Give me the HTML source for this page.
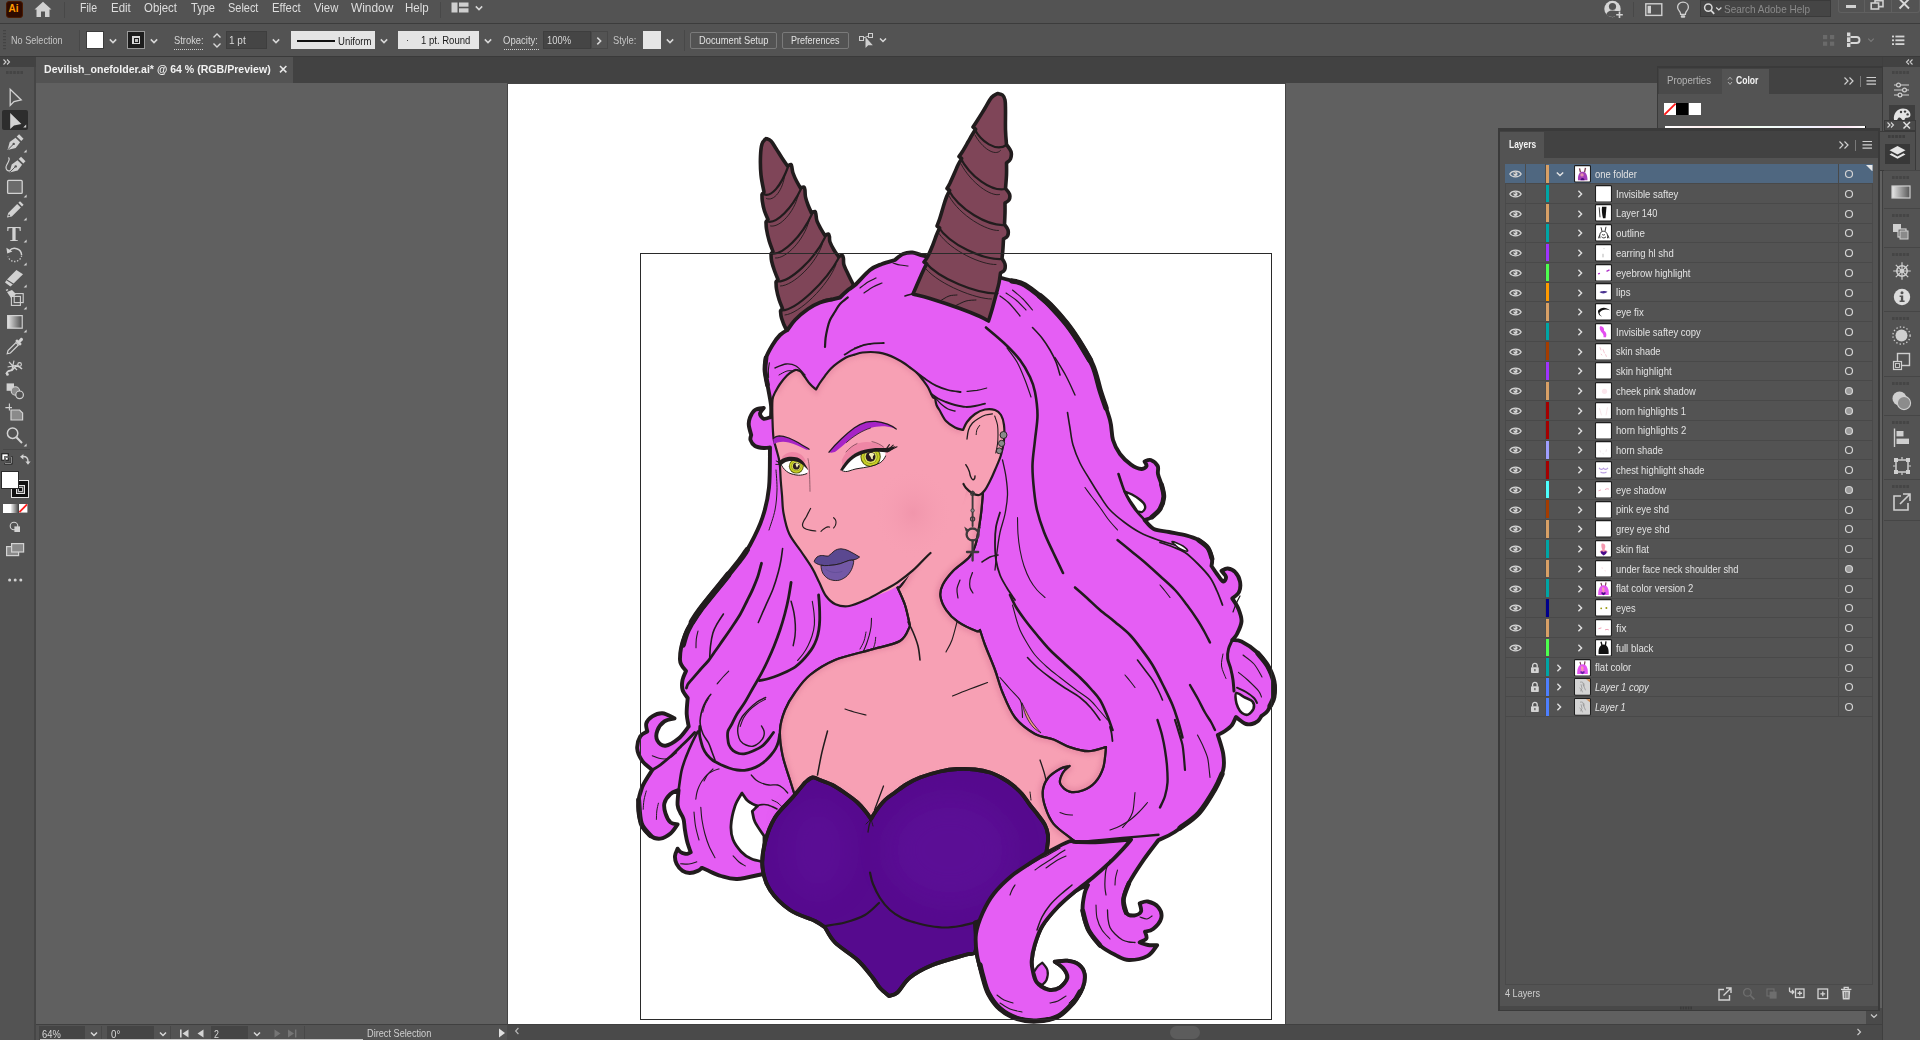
<!DOCTYPE html>
<html><head><meta charset="utf-8"><title>Devilish_onefolder.ai</title>
<style>
html,body{margin:0;padding:0;background:#606060;}
body{width:1920px;height:1040px;position:relative;overflow:hidden;font-family:"Liberation Sans",sans-serif;}
.r{position:absolute;display:block;}
.t{position:absolute;white-space:nowrap;line-height:1.2;transform-origin:0 50%;}
</style></head><body>
<div class="r" style="left:0px;top:0px;width:1920px;height:1040px;background:#606060;"></div>
<div class="r" style="left:506.5px;top:82.5px;width:779.5px;height:942px;background:rgba(0,0,0,0.28);"></div>
<div class="r" style="left:507.5px;top:83.5px;width:777.7px;height:940.4px;background:#ffffff;"></div>
<svg class="r" style="left:0;top:0" width="1920" height="1040" viewBox="0 0 1920 1040">
<defs>
<radialGradient id="gCupR" cx="0.45" cy="0.35" r="0.75"><stop offset="0" stop-color="#5f1199"/><stop offset="0.6" stop-color="#560a8e"/><stop offset="1" stop-color="#47067a"/></radialGradient>
<radialGradient id="gBlush" cx="0.5" cy="0.5" r="0.5"><stop offset="0" stop-color="#ea8ba3" stop-opacity="0.5"/><stop offset="1" stop-color="#f7a0b4" stop-opacity="0"/></radialGradient>
<filter id="soft" x="-10%" y="-10%" width="120%" height="120%"><feGaussianBlur stdDeviation="2.2"/></filter>
<filter id="soft8" x="-30%" y="-30%" width="160%" height="160%"><feGaussianBlur stdDeviation="14"/></filter>
<filter id="soft1" x="-10%" y="-10%" width="120%" height="120%"><feGaussianBlur stdDeviation="1.2"/></filter>
</defs>
<path d="M766.0 138.5C765.3 139.4 762.9 141.1 762.0 144.0C761.1 146.9 760.7 150.8 760.5 156.0C760.3 161.2 760.4 169.0 761.0 175.0C761.6 181.0 763.5 189.2 764.0 192.0C763.7 192.4 762.3 194.1 762.0 194.5C762.0 195.6 761.9 198.2 762.3 201.0C762.7 203.8 763.5 207.9 764.5 211.0C765.5 214.1 767.4 218.1 768.0 219.5C767.7 219.9 766.3 221.6 766.0 222.0C766.1 223.2 766.0 225.8 766.5 229.0C767.0 232.2 768.1 237.2 769.2 241.0C770.3 244.8 772.4 249.8 773.0 251.5C772.7 251.9 771.3 253.6 771.0 254.0C771.1 255.2 771.0 258.2 771.6 261.0C772.2 263.8 773.5 267.9 774.6 271.0C775.7 274.1 777.4 278.1 778.0 279.5C777.7 279.9 776.3 281.6 776.0 282.0C776.1 283.2 776.0 286.0 776.5 289.0C777.0 292.0 778.2 296.8 779.2 300.0C780.2 303.2 782.0 307.1 782.5 308.5C782.2 308.9 780.8 310.6 780.5 311.0C780.7 312.2 780.6 315.0 781.5 318.0C782.4 321.0 783.6 324.7 786.0 329.0C788.4 333.3 794.3 341.5 796.0 344.0C801.7 342.0 818.0 338.0 830.0 332.0C842.0 326.0 861.7 312.0 868.0 308.0C866.7 306.0 862.5 300.0 860.0 296.0C857.5 292.0 855.0 287.7 853.0 284.0C851.0 280.3 849.5 277.2 848.0 274.0C846.5 270.8 844.8 267.5 844.0 265.0C843.2 262.5 843.6 260.0 843.5 259.0C843.3 258.4 843.3 255.9 842.5 255.5C841.7 255.1 839.2 256.3 838.5 256.5C837.8 255.4 835.4 252.4 834.0 250.0C832.6 247.6 830.8 244.2 830.0 242.0C829.2 239.8 829.6 237.8 829.5 237.0C829.3 236.5 829.2 234.2 828.5 234.0C827.8 233.8 825.6 235.2 825.0 235.5C824.3 234.4 822.3 231.4 821.0 229.0C819.7 226.6 817.8 223.3 817.0 221.0C816.2 218.7 816.2 216.0 816.0 215.0C815.8 214.4 815.8 211.8 815.0 211.5C814.2 211.2 812.1 212.8 811.5 213.0C810.9 211.7 809.0 207.7 808.0 205.0C807.0 202.3 806.0 199.4 805.5 197.0C805.0 194.6 805.1 191.6 805.0 190.5C804.8 189.9 804.8 187.4 804.0 187.0C803.2 186.6 801.1 187.8 800.5 188.0C799.8 186.8 797.8 183.5 796.5 181.0C795.2 178.5 793.8 175.2 793.0 173.0C792.2 170.8 792.2 168.8 792.0 168.0C791.8 167.4 791.8 164.8 791.0 164.5C790.2 164.2 788.1 165.8 787.5 166.0C786.6 164.7 783.9 160.9 782.0 158.0C780.1 155.1 777.8 151.3 776.0 148.5C774.2 145.7 772.7 142.7 771.0 141.0C769.3 139.3 766.8 138.9 766.0 138.5Z" fill="#7f4558" stroke="#211c1d" stroke-width="3.6" stroke-linecap="round" stroke-linejoin="round" />
<path d="M763.5 194C771 198 781 186 788 167" fill="none" stroke="#211c1d" stroke-width="2.2" stroke-linecap="round" stroke-linejoin="round" />
<path d="M766.5 198.5C774 202 783 190 785 174" fill="none" stroke="#211c1d" stroke-width="0.9" stroke-linecap="round" stroke-linejoin="round" />
<path d="M767.5 221.5C777 224 792 208 801 189" fill="none" stroke="#211c1d" stroke-width="2.2" stroke-linecap="round" stroke-linejoin="round" />
<path d="M770.5 226.0C780 228 794 212 798 196" fill="none" stroke="#211c1d" stroke-width="0.9" stroke-linecap="round" stroke-linejoin="round" />
<path d="M772.5 253.5C783 255 802 236 812 214" fill="none" stroke="#211c1d" stroke-width="2.2" stroke-linecap="round" stroke-linejoin="round" />
<path d="M775.5 258.0C786 259 804 240 809 221" fill="none" stroke="#211c1d" stroke-width="0.9" stroke-linecap="round" stroke-linejoin="round" />
<path d="M777.5 281.5C790 282 815 259 825.5 236.5" fill="none" stroke="#211c1d" stroke-width="2.2" stroke-linecap="round" stroke-linejoin="round" />
<path d="M780.5 286.0C793 286 817 263 822.5 243.5" fill="none" stroke="#211c1d" stroke-width="0.9" stroke-linecap="round" stroke-linejoin="round" />
<path d="M782 310.5C796 310 826 282 839 257.5" fill="none" stroke="#211c1d" stroke-width="2.2" stroke-linecap="round" stroke-linejoin="round" />
<path d="M785 315.0C799 314 828 286 836 264.5" fill="none" stroke="#211c1d" stroke-width="0.9" stroke-linecap="round" stroke-linejoin="round" />
<path d="M790 331C806 331 838 306 853 285" fill="none" stroke="#211c1d" stroke-width="2.2" stroke-linecap="round" stroke-linejoin="round" />
<path d="M793 335.5C809 335 840 310 850 292" fill="none" stroke="#211c1d" stroke-width="0.9" stroke-linecap="round" stroke-linejoin="round" />
<path d="M787.5 330.0C788.8 328.3 791.6 323.5 795.0 320.0C798.4 316.5 803.8 311.9 808.0 309.0C812.2 306.1 816.0 304.1 820.0 302.5C824.0 300.9 828.7 300.3 832.0 299.5C835.3 298.7 838.7 297.8 840.0 297.5C841.3 296.2 845.5 292.1 848.0 290.0C850.5 287.9 851.3 288.3 855.0 285.0C858.7 281.7 865.5 273.5 870.0 270.0C874.5 266.5 877.8 265.7 882.0 264.0C886.2 262.3 892.8 260.7 895.0 260.0C896.3 259.0 900.1 255.2 903.0 254.0C905.9 252.8 908.8 252.2 912.5 252.5C916.2 252.8 917.1 254.4 925.0 256.0C932.9 257.6 947.5 258.4 960.0 262.0C972.5 265.6 989.2 273.7 1000.0 277.5C1010.8 281.3 1016.7 280.4 1025.0 285.0C1033.3 289.6 1043.2 298.7 1050.0 305.0C1056.8 311.3 1061.3 317.2 1066.0 323.0C1070.7 328.8 1073.6 333.0 1078.0 340.0C1082.4 347.0 1088.8 356.7 1092.5 365.0C1096.2 373.3 1097.1 380.8 1100.0 390.0C1102.9 399.2 1107.8 411.7 1110.0 420.0C1112.2 428.3 1111.3 434.3 1113.0 440.0C1114.7 445.7 1117.0 449.9 1120.0 454.0C1123.0 458.1 1127.4 462.1 1131.0 464.6C1134.6 467.1 1138.9 468.8 1141.5 469.0C1144.1 469.2 1146.0 467.2 1146.5 466.0C1147.0 464.8 1144.9 462.2 1144.6 461.5C1145.6 461.2 1148.6 459.2 1150.8 460.0C1153.0 460.8 1156.5 463.7 1157.7 466.0C1158.9 468.3 1157.4 470.9 1158.0 474.0C1158.6 477.1 1160.5 480.8 1161.5 484.6C1162.5 488.4 1164.0 492.9 1163.8 497.0C1163.5 501.1 1162.0 505.7 1160.0 509.0C1158.0 512.3 1154.6 515.2 1152.0 517.0C1149.4 518.8 1145.8 519.5 1144.6 520.0C1146.1 521.5 1149.7 527.0 1153.8 529.0C1157.9 531.0 1163.6 530.9 1169.0 532.0C1174.4 533.1 1181.1 534.1 1186.0 535.4C1190.9 536.7 1194.9 538.0 1198.5 540.0C1202.1 542.0 1205.5 544.6 1207.7 547.7C1210.0 550.8 1211.4 555.5 1212.0 558.5C1212.6 561.5 1211.6 564.8 1211.5 566.0C1212.4 567.3 1215.1 571.4 1217.0 574.0C1218.9 576.6 1221.5 581.0 1223.0 581.5C1224.5 582.0 1226.2 578.8 1226.0 577.0C1225.8 575.2 1222.2 571.8 1221.5 570.8C1222.5 570.4 1225.4 568.2 1227.7 568.5C1230.0 568.8 1233.4 570.1 1235.4 572.3C1237.5 574.5 1239.4 578.2 1240.0 581.5C1240.6 584.8 1240.3 589.2 1239.0 592.0C1237.7 594.8 1233.4 597.4 1232.3 598.5C1233.3 600.2 1237.0 605.2 1238.5 609.0C1240.0 612.8 1241.8 617.3 1241.5 621.5C1241.2 625.7 1238.5 630.9 1237.0 634.0C1235.5 637.1 1233.1 639.0 1232.3 640.0C1233.8 640.2 1237.4 639.5 1241.5 641.5C1245.6 643.5 1252.6 648.2 1257.0 652.3C1261.4 656.4 1264.9 661.1 1267.7 666.0C1270.5 670.9 1272.8 676.3 1273.8 681.5C1274.8 686.7 1274.8 692.1 1273.8 697.0C1272.8 701.9 1269.8 707.6 1267.7 710.8C1265.7 714.0 1262.5 715.1 1261.5 716.0C1260.9 716.8 1259.6 719.7 1258.0 721.0C1256.4 722.3 1254.0 723.5 1252.0 724.0C1250.0 724.5 1247.8 724.5 1246.0 724.0C1244.2 723.5 1242.7 722.2 1241.0 721.0C1239.3 719.8 1236.8 717.7 1236.0 717.0C1235.3 718.3 1233.8 722.7 1232.0 725.0C1230.2 727.3 1227.4 729.3 1225.0 731.0C1222.6 732.7 1219.0 734.3 1217.8 735.0C1218.7 738.1 1222.3 748.1 1223.2 753.9C1224.1 759.7 1224.6 764.2 1223.2 770.0C1221.8 775.8 1219.0 781.7 1215.0 788.9C1211.0 796.1 1205.6 805.8 1198.9 813.0C1192.2 820.2 1181.4 827.5 1174.7 832.0C1168.0 836.5 1161.2 838.7 1158.5 840.0C1155.8 843.6 1147.3 854.4 1142.4 861.6C1137.5 868.8 1132.1 876.9 1128.9 883.2C1125.8 889.5 1124.0 894.4 1123.5 899.3C1123.0 904.2 1124.4 910.1 1126.2 912.8C1128.0 915.5 1131.8 915.7 1134.3 915.5C1136.8 915.3 1140.1 913.5 1141.0 911.5C1141.9 909.5 1139.9 904.8 1139.7 903.4C1141.0 903.1 1144.6 900.8 1147.7 901.5C1150.8 902.2 1156.2 904.6 1158.5 907.4C1160.8 910.2 1162.1 914.6 1161.2 918.2C1160.3 921.8 1155.8 926.8 1153.1 929.0C1150.4 931.2 1146.3 931.2 1145.0 931.6C1145.2 932.7 1147.3 936.6 1146.4 938.4C1145.5 940.2 1140.8 941.7 1139.7 942.4C1141.1 942.8 1145.1 944.5 1148.0 945.0C1150.9 945.5 1155.7 945.1 1157.2 945.1C1155.6 946.9 1152.4 953.4 1147.7 955.9C1143.0 958.4 1134.3 960.1 1128.9 960.0C1123.5 959.9 1120.2 957.4 1115.4 955.0C1110.6 952.6 1104.5 949.6 1100.0 945.4C1095.5 941.2 1091.4 935.8 1088.5 930.0C1085.6 924.2 1083.4 916.9 1082.7 910.8C1082.0 904.7 1083.7 897.8 1084.6 893.5C1085.5 889.2 1087.4 886.4 1088.0 885.0C1085.8 886.1 1080.0 887.8 1075.0 891.5C1070.0 895.2 1063.2 901.2 1057.7 907.0C1052.2 912.8 1046.2 919.6 1042.3 926.0C1038.4 932.4 1036.4 939.6 1034.6 945.4C1032.8 951.2 1032.0 956.6 1031.7 960.8C1031.4 965.0 1031.9 966.9 1032.7 970.4C1033.5 973.9 1034.0 978.8 1036.5 982.0C1039.0 985.2 1044.2 988.6 1048.0 989.6C1051.8 990.6 1056.4 989.6 1059.6 987.7C1062.8 985.8 1066.6 981.2 1067.3 978.0C1068.0 974.8 1065.6 971.2 1063.5 968.5C1061.4 965.8 1056.2 962.8 1054.8 961.7C1056.9 961.6 1063.3 960.3 1067.3 960.8C1071.3 961.3 1075.9 962.4 1078.8 964.6C1081.7 966.8 1083.9 970.1 1084.6 974.0C1085.2 977.9 1084.6 982.9 1082.7 987.7C1080.8 992.5 1077.2 998.2 1073.0 1003.0C1068.8 1007.8 1063.8 1013.5 1057.7 1016.5C1051.6 1019.5 1043.2 1020.7 1036.5 1021.0C1029.8 1021.3 1023.4 1020.5 1017.3 1018.5C1011.2 1016.5 1004.8 1013.0 1000.0 1008.8C995.2 1004.6 991.4 999.0 988.5 993.5C985.6 988.0 984.6 982.4 982.7 976.0C980.8 969.6 978.1 962.0 977.0 955.0C975.9 948.0 976.2 937.3 976.0 933.8C963.3 933.2 929.3 935.6 900.0 930.0C870.7 924.4 822.8 909.3 800.0 900.0C777.2 890.7 769.2 878.3 763.0 874.0C758.7 874.8 744.2 878.7 737.2 879.0C730.2 879.3 726.0 877.5 721.0 876.0C716.0 874.5 710.1 871.4 706.9 870.0C703.7 868.6 702.6 868.2 701.8 867.9C701.1 868.4 699.8 870.0 697.8 870.9C695.8 871.8 692.2 873.0 689.7 873.0C687.2 873.0 684.8 872.4 682.6 870.9C680.4 869.4 677.9 866.3 676.6 863.8C675.3 861.3 674.8 858.3 675.0 855.8C675.2 853.3 677.2 849.9 677.6 848.7C678.1 849.2 679.3 851.2 680.5 852.0C681.7 852.8 683.4 853.4 684.6 853.7C685.9 854.0 687.0 853.9 688.0 853.6C689.0 853.4 690.2 852.4 690.7 852.2C690.3 851.2 689.2 848.1 688.5 846.0C687.8 843.9 687.3 842.4 686.7 839.6C686.1 836.8 685.3 832.4 684.8 829.0C684.3 825.6 684.3 822.0 683.6 819.4C682.9 816.8 681.1 814.3 680.6 813.3C680.1 811.9 677.9 808.9 677.6 805.0C677.3 801.1 678.4 792.5 678.6 790.0C677.2 790.7 672.9 791.8 670.5 794.0C668.1 796.2 665.2 800.0 664.4 803.2C663.6 806.4 664.5 810.1 665.5 813.3C666.5 816.5 668.5 820.5 670.5 822.4C672.5 824.2 676.4 824.1 677.6 824.4C676.4 825.9 673.4 831.1 670.5 833.5C667.6 835.9 663.8 838.2 660.4 838.6C657.0 839.0 653.5 838.1 650.3 835.6C647.1 833.1 643.2 828.5 641.2 823.4C639.2 818.3 638.0 811.1 638.2 805.0C638.4 798.9 639.9 792.8 642.2 787.0C644.6 781.2 650.6 772.8 652.3 770.0C650.6 768.5 644.7 764.3 642.2 760.8C639.7 757.2 637.5 752.7 637.2 748.7C636.9 744.7 638.5 739.5 640.2 736.6C641.9 733.7 646.1 732.4 647.3 731.5C647.1 730.1 645.5 725.9 646.3 723.4C647.1 720.9 649.6 718.1 652.3 716.4C655.0 714.7 658.7 713.0 662.4 713.3C666.1 713.6 672.5 717.5 674.5 718.4C672.8 718.9 667.2 719.4 664.4 721.4C661.5 723.4 658.6 727.3 657.4 730.5C656.2 733.7 656.0 738.1 657.4 740.6C658.8 743.1 662.0 746.0 665.5 745.7C669.0 745.4 674.7 741.8 678.6 738.6C682.5 735.4 687.0 728.5 688.7 726.5C688.4 724.4 686.9 718.8 686.7 714.0C686.5 709.2 687.5 700.7 687.7 698.0C686.9 696.7 683.5 693.0 682.6 690.0C681.7 687.0 681.9 683.2 682.5 680.0C683.1 676.8 685.4 672.5 686.0 671.0C685.0 669.2 680.2 666.0 680.0 660.0C679.8 654.0 681.7 643.3 685.0 635.0C688.3 626.7 694.2 618.3 700.0 610.0C705.8 601.7 713.3 593.3 720.0 585.0C726.7 576.7 735.0 566.7 740.0 560.0C745.0 553.3 746.2 552.1 750.0 545.0C753.8 537.9 759.3 527.1 762.5 517.5C765.7 507.9 767.8 499.2 769.0 487.5C770.2 475.8 769.8 454.2 770.0 447.5C769.0 447.6 766.2 448.2 763.8 448.0C761.2 447.8 757.2 447.3 755.0 446.0C752.8 444.7 751.1 441.8 750.5 440.0C749.9 438.2 751.1 435.8 751.2 435.0C750.8 433.3 749.0 427.9 748.8 425.0C748.5 422.1 749.0 420.0 750.0 417.5C751.0 415.0 752.7 411.6 755.0 410.0C757.3 408.4 762.3 408.3 763.8 408.0C763.1 409.0 760.0 412.0 760.0 413.8C760.0 415.5 761.9 418.2 763.8 418.8C765.6 419.3 769.8 417.3 771.0 417.0C771.0 415.0 771.6 410.3 771.0 405.0C770.4 399.7 768.5 390.8 767.5 385.0C766.5 379.2 765.2 374.5 765.0 370.0C764.8 365.5 764.8 362.2 766.0 358.0C767.2 353.8 770.2 348.8 772.5 345.0C774.8 341.2 777.5 337.5 780.0 335.0C782.5 332.5 786.2 330.8 787.5 330.0Z" fill="#e55ef4" stroke="#211c1d" stroke-width="3.9" stroke-linecap="round" stroke-linejoin="round" />
<path d="M1012.0 281.0C1014.2 281.7 1018.7 281.0 1025.0 285.0C1031.3 289.0 1043.2 298.7 1050.0 305.0C1056.8 311.3 1061.3 317.2 1066.0 323.0C1070.7 328.8 1073.6 333.0 1078.0 340.0C1082.4 347.0 1088.8 356.7 1092.5 365.0C1096.2 373.3 1097.8 382.8 1100.0 390.0C1102.2 397.2 1105.0 405.0 1106.0 408.0" fill="none" stroke="#211c1d" stroke-width="5.4" stroke-linecap="round" stroke-linejoin="round" />
<path d="M1040.0 296.0C1041.7 297.5 1045.7 300.5 1050.0 305.0C1054.3 309.5 1061.3 317.2 1066.0 323.0C1070.7 328.8 1074.0 333.8 1078.0 340.0C1082.0 346.2 1088.0 356.7 1090.0 360.0" fill="none" stroke="#211c1d" stroke-width="6.2" stroke-linecap="round" stroke-linejoin="round" />
<path d="M747.0 550.0C745.8 551.7 744.5 554.2 740.0 560.0C735.5 565.8 726.7 576.7 720.0 585.0C713.3 593.3 705.3 602.5 700.0 610.0C694.7 617.5 690.8 624.2 688.0 630.0C685.2 635.8 683.8 642.5 683.0 645.0" fill="none" stroke="#211c1d" stroke-width="5.6" stroke-linecap="round" stroke-linejoin="round" />
<path d="M728.0 575.0C726.7 576.7 724.7 579.2 720.0 585.0C715.3 590.8 704.7 603.8 700.0 610.0C695.3 616.2 693.3 620.0 692.0 622.0" fill="none" stroke="#211c1d" stroke-width="6.4" stroke-linecap="round" stroke-linejoin="round" />
<path d="M1258.0 653.5C1259.6 655.6 1265.1 661.3 1267.7 666.0C1270.3 670.7 1272.8 676.3 1273.8 681.5C1274.8 686.7 1274.4 692.9 1273.8 697.0C1273.2 701.1 1270.6 704.5 1270.0 706.0" fill="none" stroke="#211c1d" stroke-width="5.2" stroke-linecap="round" stroke-linejoin="round" />
<path d="M1222.0 774.0C1220.8 776.5 1218.8 782.4 1215.0 788.9C1211.2 795.4 1204.7 806.5 1198.9 813.0C1193.1 819.5 1183.2 825.5 1180.0 828.0" fill="none" stroke="#211c1d" stroke-width="5.2" stroke-linecap="round" stroke-linejoin="round" />
<path d="M638.6 800.0C639.0 803.9 639.2 817.5 641.2 823.4C643.2 829.3 648.8 833.6 650.3 835.6" fill="none" stroke="#211c1d" stroke-width="5.0" stroke-linecap="round" stroke-linejoin="round" />
<path d="M766.0 358.0C765.8 360.0 764.8 365.5 765.0 370.0C765.2 374.5 767.1 382.5 767.5 385.0" fill="none" stroke="#211c1d" stroke-width="4.8" stroke-linecap="round" stroke-linejoin="round" />
<path d="M1161.5 484.6C1161.9 486.7 1164.0 492.9 1163.8 497.0C1163.5 501.1 1162.0 505.7 1160.0 509.0C1158.0 512.3 1153.3 515.7 1152.0 517.0" fill="none" stroke="#211c1d" stroke-width="4.8" stroke-linecap="round" stroke-linejoin="round" />
<path d="M1198.5 540.0C1200.0 541.3 1205.5 544.6 1207.7 547.7C1210.0 550.8 1211.3 556.7 1212.0 558.5" fill="none" stroke="#211c1d" stroke-width="4.8" stroke-linecap="round" stroke-linejoin="round" />
<path d="M1128.9 883.2C1128.0 885.9 1124.0 894.4 1123.5 899.3C1123.0 904.2 1125.8 910.5 1126.2 912.8" fill="none" stroke="#211c1d" stroke-width="4.6" stroke-linecap="round" stroke-linejoin="round" />
<path d="M1100.0 945.4C1098.1 942.8 1091.4 935.8 1088.5 930.0C1085.6 924.2 1083.7 914.0 1082.7 910.8" fill="none" stroke="#211c1d" stroke-width="4.8" stroke-linecap="round" stroke-linejoin="round" />
<path d="M1124.6 491.5C1125.8 492.0 1129.6 493.2 1132.0 494.5C1134.4 495.8 1137.0 497.4 1139.0 499.0C1141.0 500.6 1143.2 502.4 1144.2 504.0C1145.2 505.6 1145.4 507.2 1145.0 508.5C1144.6 509.8 1143.2 511.5 1142.0 512.0C1140.8 512.5 1138.2 511.6 1137.5 511.5C1136.4 509.9 1133.2 505.3 1131.0 502.0C1128.8 498.7 1125.7 493.2 1124.6 491.5Z" fill="#fff" stroke="#211c1d" stroke-width="2.4" stroke-linecap="round" stroke-linejoin="round" />
<path d="M1172.0 541.5C1172.5 541.0 1180.4 544.4 1183.0 546.0C1185.6 547.6 1188.2 550.5 1187.7 551.0C1187.2 551.5 1182.6 550.4 1180.0 548.8C1177.4 547.2 1171.5 542.0 1172.0 541.5Z" fill="#fff" stroke="#211c1d" stroke-width="1.6" stroke-linecap="round" stroke-linejoin="round" />
<path d="M1236.5 693.0C1235.0 693.4 1235.5 697.6 1235.8 700.0C1236.0 702.4 1237.0 705.3 1238.0 707.5C1239.0 709.7 1240.3 711.8 1242.0 713.0C1243.7 714.2 1246.1 715.4 1248.0 714.6C1249.9 713.9 1252.8 710.7 1253.6 708.5C1254.3 706.3 1253.9 703.3 1252.5 701.5C1251.1 699.7 1247.7 698.9 1245.0 697.5C1242.3 696.1 1238.0 692.6 1236.5 693.0Z" fill="#fff" stroke="#211c1d" stroke-width="2.6" stroke-linecap="round" stroke-linejoin="round" />
<path d="M742.0 793.0C740.8 795.2 736.8 800.6 735.0 806.0C733.2 811.4 731.3 819.9 731.0 825.5C730.7 831.1 731.3 835.2 733.0 839.6C734.7 844.0 738.2 848.5 741.2 851.7C744.2 854.9 747.5 857.1 751.3 858.8C755.1 860.5 761.9 861.5 764.0 862.0C764.0 857.7 764.0 840.3 764.0 836.0C762.5 833.7 757.0 826.1 755.0 822.0C753.0 817.9 752.8 813.1 752.3 811.3C753.1 810.5 756.5 807.1 757.4 806.3C755.8 805.4 750.6 803.2 748.0 801.0C745.4 798.8 743.0 794.3 742.0 793.0Z" fill="#fff" stroke="#211c1d" stroke-width="2.8" stroke-linecap="round" stroke-linejoin="round" />
<path d="M897.5 587.5C898.8 590.4 902.9 598.6 905.0 605.0C907.1 611.4 909.2 622.5 910.0 626.0C908.3 628.5 906.7 637.0 900.0 641.0C893.3 645.0 880.8 646.8 870.0 650.0C859.2 653.2 845.0 655.8 835.0 660.0C825.0 664.2 816.7 669.6 810.0 675.0C803.3 680.4 799.2 686.7 795.0 692.5C790.8 698.3 787.5 703.8 785.0 710.0C782.5 716.2 780.4 722.5 780.0 730.0C779.6 737.5 780.8 746.7 782.5 755.0C784.2 763.3 787.6 772.2 790.0 780.0C792.4 787.8 795.8 798.3 797.0 802.0C797.5 806.7 782.8 822.0 800.0 830.0C817.2 838.0 860.0 846.3 900.0 850.0C940.0 853.7 1016.7 851.7 1040.0 852.0C1041.7 851.8 1045.5 852.1 1050.0 851.0C1054.5 849.9 1062.7 847.0 1067.0 845.5C1071.3 844.0 1074.5 842.6 1076.0 842.0C1074.9 841.2 1073.3 840.4 1069.6 837.4C1065.8 834.4 1057.5 828.8 1053.5 823.9C1049.5 819.0 1047.2 813.1 1045.4 807.7C1043.6 802.3 1042.3 796.6 1042.7 791.6C1043.1 786.6 1045.1 781.8 1048.0 778.0C1050.9 774.2 1056.6 770.7 1060.2 768.7C1063.8 766.7 1068.0 766.5 1069.6 766.0C1068.5 767.1 1064.5 769.8 1062.9 772.7C1061.3 775.6 1059.1 780.4 1060.2 783.5C1061.3 786.6 1065.8 790.5 1069.6 791.6C1073.4 792.7 1078.8 791.8 1083.1 790.2C1087.4 788.6 1091.8 786.0 1095.2 782.2C1098.6 778.4 1101.5 773.1 1103.3 767.3C1105.1 761.4 1105.5 750.5 1106.0 747.1C1103.1 747.8 1094.6 751.2 1088.5 751.2C1082.4 751.2 1075.4 749.1 1069.6 747.1C1063.8 745.1 1059.3 741.7 1053.5 739.5C1047.7 737.3 1041.4 737.7 1035.0 734.0C1028.6 730.3 1020.4 724.4 1015.0 717.5C1009.6 710.6 1005.8 700.4 1002.5 692.5C999.2 684.6 997.9 677.9 995.0 670.0C992.1 662.1 987.5 651.7 985.0 645.0C982.5 638.3 980.8 632.5 980.0 630.0C979.4 630.2 979.9 632.4 976.2 631.0C972.5 629.6 962.7 625.2 957.7 621.7C952.7 618.2 949.1 614.2 946.2 610.0C943.3 605.8 941.0 600.5 940.4 596.3C939.8 592.1 940.6 589.0 942.7 584.8C944.8 580.6 948.6 575.6 953.0 571.0C957.4 566.4 965.5 561.7 969.3 557.0C973.1 552.3 974.1 549.9 976.0 543.0C977.9 536.1 979.6 524.0 980.8 515.5C982.0 507.0 982.5 496.9 983.0 492.0C983.5 487.1 983.8 487.0 984.0 486.0C982.5 484.7 982.3 472.3 975.0 478.0C967.7 483.7 951.7 503.0 940.0 520.0C928.3 537.0 912.1 568.8 905.0 580.0C897.9 591.2 898.8 586.2 897.5 587.5Z" fill="#f7a0b4" stroke="#211c1d" stroke-width="2.2" stroke-linecap="round" stroke-linejoin="round" />
<clipPath id="cpBody"><path d="M897.5 587.5C898.8 590.4 902.9 598.6 905.0 605.0C907.1 611.4 909.2 622.5 910.0 626.0C908.3 628.5 906.7 637.0 900.0 641.0C893.3 645.0 880.8 646.8 870.0 650.0C859.2 653.2 845.0 655.8 835.0 660.0C825.0 664.2 816.7 669.6 810.0 675.0C803.3 680.4 799.2 686.7 795.0 692.5C790.8 698.3 787.5 703.8 785.0 710.0C782.5 716.2 780.4 722.5 780.0 730.0C779.6 737.5 780.8 746.7 782.5 755.0C784.2 763.3 787.6 772.2 790.0 780.0C792.4 787.8 795.8 798.3 797.0 802.0C797.5 806.7 782.8 822.0 800.0 830.0C817.2 838.0 860.0 846.3 900.0 850.0C940.0 853.7 1016.7 851.7 1040.0 852.0C1041.7 851.8 1045.5 852.1 1050.0 851.0C1054.5 849.9 1062.7 847.0 1067.0 845.5C1071.3 844.0 1074.5 842.6 1076.0 842.0C1074.9 841.2 1073.3 840.4 1069.6 837.4C1065.8 834.4 1057.5 828.8 1053.5 823.9C1049.5 819.0 1047.2 813.1 1045.4 807.7C1043.6 802.3 1042.3 796.6 1042.7 791.6C1043.1 786.6 1045.1 781.8 1048.0 778.0C1050.9 774.2 1056.6 770.7 1060.2 768.7C1063.8 766.7 1068.0 766.5 1069.6 766.0C1068.5 767.1 1064.5 769.8 1062.9 772.7C1061.3 775.6 1059.1 780.4 1060.2 783.5C1061.3 786.6 1065.8 790.5 1069.6 791.6C1073.4 792.7 1078.8 791.8 1083.1 790.2C1087.4 788.6 1091.8 786.0 1095.2 782.2C1098.6 778.4 1101.5 773.1 1103.3 767.3C1105.1 761.4 1105.5 750.5 1106.0 747.1C1103.1 747.8 1094.6 751.2 1088.5 751.2C1082.4 751.2 1075.4 749.1 1069.6 747.1C1063.8 745.1 1059.3 741.7 1053.5 739.5C1047.7 737.3 1041.4 737.7 1035.0 734.0C1028.6 730.3 1020.4 724.4 1015.0 717.5C1009.6 710.6 1005.8 700.4 1002.5 692.5C999.2 684.6 997.9 677.9 995.0 670.0C992.1 662.1 987.5 651.7 985.0 645.0C982.5 638.3 980.8 632.5 980.0 630.0C979.4 630.2 979.9 632.4 976.2 631.0C972.5 629.6 962.7 625.2 957.7 621.7C952.7 618.2 949.1 614.2 946.2 610.0C943.3 605.8 941.0 600.5 940.4 596.3C939.8 592.1 940.6 589.0 942.7 584.8C944.8 580.6 948.6 575.6 953.0 571.0C957.4 566.4 965.5 561.7 969.3 557.0C973.1 552.3 974.1 549.9 976.0 543.0C977.9 536.1 979.6 524.0 980.8 515.5C982.0 507.0 982.5 496.9 983.0 492.0C983.5 487.1 983.8 487.0 984.0 486.0C982.5 484.7 982.3 472.3 975.0 478.0C967.7 483.7 951.7 503.0 940.0 520.0C928.3 537.0 912.1 568.8 905.0 580.0C897.9 591.2 898.8 586.2 897.5 587.5Z"/></clipPath>
<g clip-path="url(#cpBody)" opacity="0.55"><path d="M1076.0 842.0C1074.9 841.2 1073.3 840.4 1069.6 837.4C1065.8 834.4 1057.5 828.8 1053.5 823.9C1049.5 819.0 1047.2 813.1 1045.4 807.7C1043.6 802.3 1042.3 796.6 1042.7 791.6C1043.1 786.6 1045.1 781.8 1048.0 778.0C1050.9 774.2 1056.6 770.7 1060.2 768.7C1063.8 766.7 1068.0 766.5 1069.6 766.0C1068.5 767.1 1064.5 769.8 1062.9 772.7C1061.3 775.6 1059.1 780.4 1060.2 783.5C1061.3 786.6 1065.8 790.5 1069.6 791.6C1073.4 792.7 1078.8 791.8 1083.1 790.2C1087.4 788.6 1091.8 786.0 1095.2 782.2C1098.6 778.4 1101.5 773.1 1103.3 767.3C1105.1 761.4 1105.5 750.5 1106.0 747.1C1103.1 747.8 1094.6 751.2 1088.5 751.2C1082.4 751.2 1075.4 749.1 1069.6 747.1C1063.8 745.1 1059.3 741.7 1053.5 739.5C1047.7 737.3 1041.4 737.7 1035.0 734.0C1028.6 730.3 1020.4 724.4 1015.0 717.5C1009.6 710.6 1005.8 700.4 1002.5 692.5C999.2 684.6 997.9 677.9 995.0 670.0C992.1 662.1 987.5 651.7 985.0 645.0C982.5 638.3 980.8 632.5 980.0 630.0C979.4 630.2 979.9 632.4 976.2 631.0C972.5 629.6 962.7 625.2 957.7 621.7C952.7 618.2 949.1 614.2 946.2 610.0C943.3 605.8 941.0 600.5 940.4 596.3C939.8 592.1 940.6 589.0 942.7 584.8C944.8 580.6 948.6 575.6 953.0 571.0C957.4 566.4 965.5 561.7 969.3 557.0C973.1 552.3 974.1 549.9 976.0 543.0C977.9 536.1 979.6 524.0 980.8 515.5C982.0 507.0 982.5 496.9 983.0 492.0C983.5 487.1 983.8 487.0 984.0 486.0C982.5 484.7 982.3 472.3 975.0 478.0C967.7 483.7 951.7 503.0 940.0 520.0C928.3 537.0 912.1 568.8 905.0 580.0C897.9 591.2 898.8 586.2 897.5 587.5" fill="none" stroke="#e07f9c" stroke-width="9" filter="url(#soft)"/><path d="M910.0 626.0C908.3 628.5 906.7 637.0 900.0 641.0C893.3 645.0 880.8 646.8 870.0 650.0C859.2 653.2 845.0 655.8 835.0 660.0C825.0 664.2 816.7 669.6 810.0 675.0C803.3 680.4 799.2 686.7 795.0 692.5C790.8 698.3 787.5 703.8 785.0 710.0C782.5 716.2 780.4 722.5 780.0 730.0C779.6 737.5 780.8 746.7 782.5 755.0C784.2 763.3 787.6 772.2 790.0 780.0C792.4 787.8 795.8 798.3 797.0 802.0" fill="none" stroke="#e07f9c" stroke-width="7" filter="url(#soft)"/></g>
<path d="M897.5 587.5C898.8 590.4 902.9 598.6 905.0 605.0C907.1 611.4 909.2 622.5 910.0 626.0C908.3 628.5 906.7 637.0 900.0 641.0C893.3 645.0 880.8 646.8 870.0 650.0C859.2 653.2 845.0 655.8 835.0 660.0C825.0 664.2 816.7 669.6 810.0 675.0C803.3 680.4 799.2 686.7 795.0 692.5C790.8 698.3 787.5 703.8 785.0 710.0C782.5 716.2 780.4 722.5 780.0 730.0C779.6 737.5 780.8 746.7 782.5 755.0C784.2 763.3 787.6 772.2 790.0 780.0C792.4 787.8 795.8 798.3 797.0 802.0C797.5 806.7 782.8 822.0 800.0 830.0C817.2 838.0 860.0 846.3 900.0 850.0C940.0 853.7 1016.7 851.7 1040.0 852.0C1041.7 851.8 1045.5 852.1 1050.0 851.0C1054.5 849.9 1062.7 847.0 1067.0 845.5C1071.3 844.0 1074.5 842.6 1076.0 842.0C1074.9 841.2 1073.3 840.4 1069.6 837.4C1065.8 834.4 1057.5 828.8 1053.5 823.9C1049.5 819.0 1047.2 813.1 1045.4 807.7C1043.6 802.3 1042.3 796.6 1042.7 791.6C1043.1 786.6 1045.1 781.8 1048.0 778.0C1050.9 774.2 1056.6 770.7 1060.2 768.7C1063.8 766.7 1068.0 766.5 1069.6 766.0C1068.5 767.1 1064.5 769.8 1062.9 772.7C1061.3 775.6 1059.1 780.4 1060.2 783.5C1061.3 786.6 1065.8 790.5 1069.6 791.6C1073.4 792.7 1078.8 791.8 1083.1 790.2C1087.4 788.6 1091.8 786.0 1095.2 782.2C1098.6 778.4 1101.5 773.1 1103.3 767.3C1105.1 761.4 1105.5 750.5 1106.0 747.1C1103.1 747.8 1094.6 751.2 1088.5 751.2C1082.4 751.2 1075.4 749.1 1069.6 747.1C1063.8 745.1 1059.3 741.7 1053.5 739.5C1047.7 737.3 1041.4 737.7 1035.0 734.0C1028.6 730.3 1020.4 724.4 1015.0 717.5C1009.6 710.6 1005.8 700.4 1002.5 692.5C999.2 684.6 997.9 677.9 995.0 670.0C992.1 662.1 987.5 651.7 985.0 645.0C982.5 638.3 980.8 632.5 980.0 630.0C979.4 630.2 979.9 632.4 976.2 631.0C972.5 629.6 962.7 625.2 957.7 621.7C952.7 618.2 949.1 614.2 946.2 610.0C943.3 605.8 941.0 600.5 940.4 596.3C939.8 592.1 940.6 589.0 942.7 584.8C944.8 580.6 948.6 575.6 953.0 571.0C957.4 566.4 965.5 561.7 969.3 557.0C973.1 552.3 974.1 549.9 976.0 543.0C977.9 536.1 979.6 524.0 980.8 515.5C982.0 507.0 982.5 496.9 983.0 492.0C983.5 487.1 983.8 487.0 984.0 486.0C982.5 484.7 982.3 472.3 975.0 478.0C967.7 483.7 951.7 503.0 940.0 520.0C928.3 537.0 912.1 568.8 905.0 580.0C897.9 591.2 898.8 586.2 897.5 587.5Z" fill="none" stroke="#211c1d" stroke-width="2.2" stroke-linecap="round" stroke-linejoin="round" />
<path d="M908.0 622.0C908.8 623.7 911.3 628.0 913.0 632.0C914.7 636.0 916.8 641.3 918.0 646.0C919.2 650.7 919.7 657.7 920.0 660.0" fill="none" stroke="#211c1d" stroke-width="1.6" stroke-linecap="round" stroke-linejoin="round" />
<path d="M845.0 709.0C846.8 709.6 852.5 711.5 856.0 712.5C859.5 713.5 864.3 714.6 866.0 715.0" fill="none" stroke="#211c1d" stroke-width="1.2" stroke-linecap="round" stroke-linejoin="round" />
<path d="M952.5 696.0C955.4 694.8 964.2 691.2 970.0 689.0C975.8 686.8 984.6 683.6 987.5 682.5" fill="none" stroke="#211c1d" stroke-width="1.2" stroke-linecap="round" stroke-linejoin="round" />
<path d="M827.5 731.0C826.6 734.5 823.7 744.7 822.0 752.0C820.3 759.3 818.2 771.2 817.5 775.0" fill="none" stroke="#211c1d" stroke-width="1.5" stroke-linecap="round" stroke-linejoin="round" />
<path d="M957.0 622.0C956.2 625.0 953.8 635.0 952.0 640.0C950.2 645.0 947.0 650.0 946.0 652.0" fill="none" stroke="#211c1d" stroke-width="1.1" stroke-linecap="round" stroke-linejoin="round" />
<path d="M1040.0 760.0C1040.7 762.0 1043.0 768.7 1044.0 772.0C1045.0 775.3 1045.7 778.7 1046.0 780.0" fill="none" stroke="#211c1d" stroke-width="1.3" stroke-linecap="round" stroke-linejoin="round" />
<path d="M883.5 786.0C882.8 788.0 880.5 794.0 879.0 798.0C877.5 802.0 875.2 808.0 874.5 810.0" fill="none" stroke="#211c1d" stroke-width="1.3" stroke-linecap="round" stroke-linejoin="round" />
<path d="M1030.0 792.0C1030.2 793.3 1030.8 798.7 1031.0 800.0" fill="none" stroke="#211c1d" stroke-width="1.0" stroke-linecap="round" stroke-linejoin="round" />
<path d="M816.0 389.5C816.6 388.5 818.0 385.8 819.5 383.5C821.0 381.2 823.1 378.3 825.0 375.8C826.9 373.3 828.8 370.7 831.0 368.5C833.2 366.3 835.5 364.5 838.0 362.7C840.5 360.9 843.3 358.9 846.0 357.5C848.7 356.1 851.6 355.4 854.4 354.6C857.1 353.8 859.8 352.9 862.5 352.5C865.2 352.1 868.0 352.0 870.7 352.0C873.5 352.0 876.3 352.2 879.0 352.6C881.7 353.0 884.3 353.7 887.0 354.6C889.7 355.5 892.3 356.6 895.0 358.0C897.7 359.4 900.9 361.1 903.4 362.7C905.9 364.3 907.8 365.9 910.0 367.5C912.2 369.1 914.4 370.5 916.5 372.5C918.6 374.5 920.6 377.0 922.5 379.5C924.4 382.0 926.3 384.4 928.0 387.3C929.7 390.2 931.6 395.3 932.8 397.0C934.0 398.7 934.6 397.4 935.0 397.5C935.2 398.8 935.7 402.8 936.5 405.0C937.3 407.2 939.4 410.0 940.0 411.0C941.0 412.7 943.5 418.2 946.0 421.0C948.5 423.8 952.2 426.0 955.0 427.5C957.8 429.0 961.7 429.6 963.0 430.0C963.7 428.7 965.0 424.7 967.0 422.0C969.0 419.3 972.0 416.1 975.0 414.0C978.0 411.9 981.7 410.2 985.0 409.5C988.3 408.8 992.3 409.1 995.0 410.0C997.7 410.9 999.5 412.5 1001.0 415.0C1002.5 417.5 1003.5 420.8 1004.0 425.0C1004.5 429.2 1004.5 435.0 1004.0 440.0C1003.5 445.0 1002.5 450.0 1001.0 455.0C999.5 460.0 996.8 465.7 995.0 470.0C993.2 474.3 991.7 477.7 990.0 481.0C988.3 484.3 986.8 487.7 985.0 490.0C983.2 492.3 981.2 494.5 979.0 495.0C976.8 495.5 974.0 494.2 972.0 493.0C970.0 491.8 967.8 488.8 967.0 488.0C966.5 490.0 965.5 494.7 964.0 500.0C962.5 505.3 960.3 513.8 958.0 520.0C955.7 526.2 953.0 532.8 950.0 537.5C947.0 542.2 943.3 545.1 940.0 548.0C936.7 550.9 934.6 551.0 930.0 555.0C925.4 559.0 918.3 566.6 912.5 572.0C906.7 577.4 902.7 582.9 895.0 587.5C887.3 592.1 874.1 596.5 866.5 599.6C858.9 602.7 854.4 605.2 849.2 606.0C844.0 606.8 839.3 605.9 835.4 604.2C831.5 602.5 828.7 599.6 826.0 596.0C823.3 592.4 821.5 586.9 819.2 582.3C816.9 577.7 815.4 573.6 812.3 568.4C809.2 563.2 804.6 556.8 800.8 551.0C796.9 545.2 792.1 540.1 789.2 533.8C786.3 527.5 784.7 519.5 783.5 513.0C782.3 506.5 782.5 500.5 782.0 495.0C781.5 489.5 781.1 485.5 780.7 480.0C780.3 474.5 780.3 467.3 779.5 462.0C778.7 456.7 777.0 452.0 776.0 448.0C775.0 444.0 774.1 442.7 773.5 438.0C772.9 433.3 772.7 426.3 772.5 420.0C772.3 413.7 772.1 404.6 772.5 400.0C772.9 395.4 774.6 393.8 775.0 392.5C775.8 391.1 778.0 386.8 780.0 384.0C782.0 381.2 784.7 377.8 787.0 375.5C789.3 373.2 792.3 371.4 794.0 370.5C795.7 369.6 796.5 370.1 797.0 370.0C797.6 370.2 799.2 370.4 800.5 371.5C801.8 372.6 802.9 374.4 804.5 376.5C806.1 378.6 808.1 381.8 810.0 384.0C811.9 386.2 815.0 388.6 816.0 389.5Z" fill="#f7a0b4" />
<clipPath id="cpFace"><path d="M816.0 389.5C816.6 388.5 818.0 385.8 819.5 383.5C821.0 381.2 823.1 378.3 825.0 375.8C826.9 373.3 828.8 370.7 831.0 368.5C833.2 366.3 835.5 364.5 838.0 362.7C840.5 360.9 843.3 358.9 846.0 357.5C848.7 356.1 851.6 355.4 854.4 354.6C857.1 353.8 859.8 352.9 862.5 352.5C865.2 352.1 868.0 352.0 870.7 352.0C873.5 352.0 876.3 352.2 879.0 352.6C881.7 353.0 884.3 353.7 887.0 354.6C889.7 355.5 892.3 356.6 895.0 358.0C897.7 359.4 900.9 361.1 903.4 362.7C905.9 364.3 907.8 365.9 910.0 367.5C912.2 369.1 914.4 370.5 916.5 372.5C918.6 374.5 920.6 377.0 922.5 379.5C924.4 382.0 926.3 384.4 928.0 387.3C929.7 390.2 931.6 395.3 932.8 397.0C934.0 398.7 934.6 397.4 935.0 397.5C935.2 398.8 935.7 402.8 936.5 405.0C937.3 407.2 939.4 410.0 940.0 411.0C941.0 412.7 943.5 418.2 946.0 421.0C948.5 423.8 952.2 426.0 955.0 427.5C957.8 429.0 961.7 429.6 963.0 430.0C963.7 428.7 965.0 424.7 967.0 422.0C969.0 419.3 972.0 416.1 975.0 414.0C978.0 411.9 981.7 410.2 985.0 409.5C988.3 408.8 992.3 409.1 995.0 410.0C997.7 410.9 999.5 412.5 1001.0 415.0C1002.5 417.5 1003.5 420.8 1004.0 425.0C1004.5 429.2 1004.5 435.0 1004.0 440.0C1003.5 445.0 1002.5 450.0 1001.0 455.0C999.5 460.0 996.8 465.7 995.0 470.0C993.2 474.3 991.7 477.7 990.0 481.0C988.3 484.3 986.8 487.7 985.0 490.0C983.2 492.3 981.2 494.5 979.0 495.0C976.8 495.5 974.0 494.2 972.0 493.0C970.0 491.8 967.8 488.8 967.0 488.0C966.5 490.0 965.5 494.7 964.0 500.0C962.5 505.3 960.3 513.8 958.0 520.0C955.7 526.2 953.0 532.8 950.0 537.5C947.0 542.2 943.3 545.1 940.0 548.0C936.7 550.9 934.6 551.0 930.0 555.0C925.4 559.0 918.3 566.6 912.5 572.0C906.7 577.4 902.7 582.9 895.0 587.5C887.3 592.1 874.1 596.5 866.5 599.6C858.9 602.7 854.4 605.2 849.2 606.0C844.0 606.8 839.3 605.9 835.4 604.2C831.5 602.5 828.7 599.6 826.0 596.0C823.3 592.4 821.5 586.9 819.2 582.3C816.9 577.7 815.4 573.6 812.3 568.4C809.2 563.2 804.6 556.8 800.8 551.0C796.9 545.2 792.1 540.1 789.2 533.8C786.3 527.5 784.7 519.5 783.5 513.0C782.3 506.5 782.5 500.5 782.0 495.0C781.5 489.5 781.1 485.5 780.7 480.0C780.3 474.5 780.3 467.3 779.5 462.0C778.7 456.7 777.0 452.0 776.0 448.0C775.0 444.0 774.1 442.7 773.5 438.0C772.9 433.3 772.7 426.3 772.5 420.0C772.3 413.7 772.1 404.6 772.5 400.0C772.9 395.4 774.6 393.8 775.0 392.5C775.8 391.1 778.0 386.8 780.0 384.0C782.0 381.2 784.7 377.8 787.0 375.5C789.3 373.2 792.3 371.4 794.0 370.5C795.7 369.6 796.5 370.1 797.0 370.0C797.6 370.2 799.2 370.4 800.5 371.5C801.8 372.6 802.9 374.4 804.5 376.5C806.1 378.6 808.1 381.8 810.0 384.0C811.9 386.2 815.0 388.6 816.0 389.5Z"/></clipPath>
<g clip-path="url(#cpFace)" opacity="0.5"><path d="M775.0 392.5C775.8 391.1 778.0 386.8 780.0 384.0C782.0 381.2 784.7 377.8 787.0 375.5C789.3 373.2 792.3 371.4 794.0 370.5C795.7 369.6 796.5 370.1 797.0 370.0C797.6 370.2 799.2 370.4 800.5 371.5C801.8 372.6 802.9 374.4 804.5 376.5C806.1 378.6 808.1 381.8 810.0 384.0C811.9 386.2 815.0 388.6 816.0 389.5C816.6 388.5 818.0 385.8 819.5 383.5C821.0 381.2 823.1 378.3 825.0 375.8C826.9 373.3 828.8 370.7 831.0 368.5C833.2 366.3 835.5 364.5 838.0 362.7C840.5 360.9 843.3 358.9 846.0 357.5C848.7 356.1 851.6 355.4 854.4 354.6C857.1 353.8 859.8 352.9 862.5 352.5C865.2 352.1 868.0 352.0 870.7 352.0C873.5 352.0 876.3 352.2 879.0 352.6C881.7 353.0 884.3 353.7 887.0 354.6C889.7 355.5 892.3 356.6 895.0 358.0C897.7 359.4 900.9 361.1 903.4 362.7C905.9 364.3 907.8 365.9 910.0 367.5C912.2 369.1 914.4 370.5 916.5 372.5C918.6 374.5 920.6 377.0 922.5 379.5C924.4 382.0 926.3 384.4 928.0 387.3C929.7 390.2 931.6 395.3 932.8 397.0C934.0 398.7 934.6 397.4 935.0 397.5C935.2 398.8 935.7 402.8 936.5 405.0C937.3 407.2 939.4 410.0 940.0 411.0C941.0 412.7 943.5 418.2 946.0 421.0C948.5 423.8 952.2 426.0 955.0 427.5C957.8 429.0 961.7 429.6 963.0 430.0" fill="none" stroke="#e07f9c" stroke-width="8" filter="url(#soft)"/></g>
<path d="M930.5 553.0C929.6 553.8 928.3 555.0 925.3 558.0C922.3 561.0 917.2 566.7 912.6 570.7C908.0 574.8 902.4 579.0 897.6 582.3C892.8 585.6 889.0 587.4 883.8 590.3C878.6 593.2 872.3 597.0 866.5 599.6C860.7 602.2 854.4 605.2 849.2 606.0C844.0 606.8 839.3 605.9 835.4 604.2C831.5 602.5 828.7 599.6 826.0 596.0C823.3 592.4 821.5 586.9 819.2 582.3C816.9 577.7 815.4 573.6 812.3 568.4C809.2 563.2 804.6 556.8 800.8 551.0C796.9 545.2 792.1 540.1 789.2 533.8C786.3 527.5 784.7 519.5 783.5 513.0C782.3 506.5 782.5 500.5 782.0 495.0C781.5 489.5 781.1 485.5 780.7 480.0C780.3 474.5 780.3 467.3 779.5 462.0C778.7 456.7 777.0 452.0 776.0 448.0C775.0 444.0 774.1 442.7 773.5 438.0C772.9 433.3 772.7 426.3 772.5 420.0C772.3 413.7 772.1 404.6 772.5 400.0C772.9 395.4 774.6 393.8 775.0 392.5C775.8 391.1 778.0 386.8 780.0 384.0C782.0 381.2 784.7 377.8 787.0 375.5C789.3 373.2 792.3 371.4 794.0 370.5C795.7 369.6 796.5 370.1 797.0 370.0C797.6 370.2 799.2 370.4 800.5 371.5C801.8 372.6 802.9 374.4 804.5 376.5C806.1 378.6 808.1 381.8 810.0 384.0C811.9 386.2 815.0 388.6 816.0 389.5C816.6 388.5 818.0 385.8 819.5 383.5C821.0 381.2 823.1 378.3 825.0 375.8C826.9 373.3 828.8 370.7 831.0 368.5C833.2 366.3 835.5 364.5 838.0 362.7C840.5 360.9 843.3 358.9 846.0 357.5C848.7 356.1 851.6 355.4 854.4 354.6C857.1 353.8 859.8 352.9 862.5 352.5C865.2 352.1 868.0 352.0 870.7 352.0C873.5 352.0 876.3 352.2 879.0 352.6C881.7 353.0 884.3 353.7 887.0 354.6C889.7 355.5 892.3 356.6 895.0 358.0C897.7 359.4 900.9 361.1 903.4 362.7C905.9 364.3 907.8 365.9 910.0 367.5C912.2 369.1 914.4 370.5 916.5 372.5C918.6 374.5 920.6 377.0 922.5 379.5C924.4 382.0 926.3 384.4 928.0 387.3C929.7 390.2 931.6 395.3 932.8 397.0C934.0 398.7 934.6 397.4 935.0 397.5C935.2 398.8 935.7 402.8 936.5 405.0C937.3 407.2 939.4 410.0 940.0 411.0C941.0 412.7 943.5 418.2 946.0 421.0C948.5 423.8 952.2 426.0 955.0 427.5C957.8 429.0 961.7 429.6 963.0 430.0C963.7 428.7 965.0 424.7 967.0 422.0C969.0 419.3 972.0 416.1 975.0 414.0C978.0 411.9 981.7 410.2 985.0 409.5C988.3 408.8 992.3 409.1 995.0 410.0C997.7 410.9 999.5 412.5 1001.0 415.0C1002.5 417.5 1003.5 420.8 1004.0 425.0C1004.5 429.2 1004.5 435.0 1004.0 440.0C1003.5 445.0 1002.5 450.0 1001.0 455.0C999.5 460.0 996.8 465.7 995.0 470.0C993.2 474.3 991.7 477.7 990.0 481.0C988.3 484.3 986.8 487.7 985.0 490.0C983.2 492.3 981.2 494.5 979.0 495.0C976.8 495.5 974.2 494.2 972.0 493.0C969.8 491.8 967.4 489.5 966.0 488.0C964.6 486.5 963.9 484.7 963.5 484.0" fill="none" stroke="#211c1d" stroke-width="2.2" stroke-linecap="round" stroke-linejoin="round" />
<ellipse cx="913" cy="513" rx="40" ry="46" fill="url(#gBlush)"/>
<path d="M967.0 439.0C967.2 437.5 967.6 432.7 968.5 430.0C969.4 427.3 970.8 424.9 972.5 423.0C974.2 421.1 976.3 419.8 978.5 418.5C980.7 417.2 983.2 415.8 985.5 415.0C987.8 414.2 991.2 414.1 992.4 413.9" fill="none" stroke="#211c1d" stroke-width="1.3" stroke-linecap="round" stroke-linejoin="round" />
<path d="M976.2 434.6C976.3 433.8 976.4 431.0 977.0 429.5C977.6 428.0 979.2 426.1 979.7 425.4" fill="none" stroke="#211c1d" stroke-width="1.0" stroke-linecap="round" stroke-linejoin="round" />
<path d="M994.7 416.0C995.2 417.5 997.0 421.9 997.5 425.0C998.0 428.1 998.0 431.4 998.0 434.6C998.0 437.8 997.9 440.9 997.5 444.0C997.1 447.1 996.1 451.5 995.8 453.0" fill="none" stroke="#211c1d" stroke-width="1.1" stroke-linecap="round" stroke-linejoin="round" />
<path d="M965.8 464.7C966.1 465.2 967.2 466.9 967.8 468.0C968.4 469.1 968.8 470.2 969.3 471.6C969.8 473.0 970.0 475.1 970.6 476.5C971.2 477.9 972.0 479.4 972.7 479.7C973.4 480.0 974.2 479.1 974.6 478.5C975.0 477.9 974.9 476.4 975.0 476.0" fill="none" stroke="#211c1d" stroke-width="1.4" stroke-linecap="round" stroke-linejoin="round" />
<circle cx="1003.5" cy="435" r="3.5" fill="#8a8a8a" stroke="#211c1d" stroke-width="0.9"/>
<circle cx="1001.6" cy="443.4" r="3.1" fill="#8a8a8a" stroke="#211c1d" stroke-width="0.9"/>
<circle cx="999.3" cy="450.8" r="2.9" fill="#8a8a8a" stroke="#211c1d" stroke-width="0.9"/>
<path d="M972.6 491.5 V526" fill="none" stroke="#3d3a3b" stroke-width="1.9" stroke-linecap="round" stroke-linejoin="round" />
<circle cx="972.6" cy="493.5" r="1.9" fill="none" stroke="#3d3a3b" stroke-width="1.2"/><circle cx="972.6" cy="510.5" r="1.7" fill="#8a8a8a" stroke="#3d3a3b" stroke-width="0.9"/><circle cx="972.6" cy="519" r="2.1" fill="none" stroke="#3d3a3b" stroke-width="1.2"/>
<circle cx="972.6" cy="534.5" r="6" fill="none" stroke="#3d3a3b" stroke-width="2.3"/>
<path d="M964.2 526.5 L968.2 529.5 L966 532 Z M981 526.5 L977 529.5 L979.2 532 Z" fill="#3d3a3b" />
<path d="M972.6 540.5 V560.5 M967 552 H978.2" fill="none" stroke="#3d3a3b" stroke-width="2.3" stroke-linecap="round" stroke-linejoin="round" />
<path d="M829 452.2 C833 447 837 443 841.5 438.8 C846 434.5 850 431 854.5 427.8 C858 425.3 862 423.5 866 422.2 C869 421.4 872 421.2 875.5 421.3 C880 421.6 884 422.8 887.5 424.2 C890.5 425.4 893.5 427 896.2 429 C892.5 427.6 889 426.8 885 426.3 C880 425.8 875 426.6 870.5 428 C866 429.5 862 431.4 858 433.8 C853.8 436.5 850 439.2 846.5 442.4 C842.8 445.6 839.5 448.6 836 451.2 C833.5 452.8 831 453 829 452.2Z" fill="#a724c6" />
<path d="M829 452.2 C833 447 837 443 841.5 438.8 C846 434.5 850 431 854.5 427.8 C858 425.3 862 423.5 866 422.2 C869 421.4 872 421.2 875.5 421.3 C880 421.6 884 422.8 887.5 424.2 C890.5 425.4 893.5 427 896.2 429" fill="none" stroke="#211c1d" stroke-width="1.3" stroke-linecap="round" stroke-linejoin="round" />
<path d="M846.5 442.4 C850 439.2 853.8 436.5 858 433.8 C862 431.4 866 429.5 870.5 428" fill="none" stroke="#211c1d" stroke-width="0.8" stroke-linecap="round" stroke-linejoin="round" />
<path d="M773.4 438.4 C775 436.8 777 436 779.2 435.9 C782.5 435.9 785.5 436.8 788.8 438 C792 439.4 795.5 441 798.5 442.8 C802 445 805.5 447 809.2 449.2 C808 450 806.8 450 806 449.6 C803.5 448.4 801 447.2 798.5 446.1 C795.3 444.6 792 443.3 788.8 442.4 C785 441.4 781 441.4 777.3 442.4 C775.6 443 774.3 443.6 773.4 444Z" fill="#a724c6" />
<path d="M773.4 438.4 C775 436.8 777 436 779.2 435.9 C782.5 435.9 785.5 436.8 788.8 438 C792 439.4 795.5 441 798.5 442.8 C802 445 805.5 447 809.2 449.2" fill="none" stroke="#211c1d" stroke-width="1.2" stroke-linecap="round" stroke-linejoin="round" />
<path d="M841.7 460 C844.5 454.5 848 450 851.3 447 C855.5 443.8 860.5 442.4 865.8 442.1 C871 441.9 876 443 880.2 445 C882.6 446.2 884.6 447.6 886.2 449.2 C882 449 878 449 875.4 449.2 C870 449.6 865 450 861 451.2 C856.5 453 852.5 455.3 849.4 457.9 C846.8 460.3 844.3 463.4 842.6 466.4 Z" fill="#ee86a5" />
<path d="M782.4 456.6 C784.5 454.2 788 452.4 791.7 452 C795.5 451.8 798.8 453 801.3 454.8 C803.6 456.8 805 459.2 806 461.6 C805 461.4 804 462 803.3 463.3 C801.2 460.8 799 459.4 796.5 458.7 C793 458 789.8 457.6 787 457.8 C785.2 458 783.6 458.6 782.4 459.6Z" fill="#ee86a5" />
<path d="M846 452 C849.5 448 853 445.3 857 443.6" fill="none" stroke="#6a3a48" stroke-width="0.7" stroke-linecap="round" stroke-linejoin="round" />
<path d="M872 441.6 C876.5 442.6 880.5 444.4 883.5 447" fill="none" stroke="#6a3a48" stroke-width="0.7" stroke-linecap="round" stroke-linejoin="round" />
<path d="M840.8 469.3 C843.5 464.5 846.5 460.5 849.4 457.8 C853 454.5 857 452.4 861 451.2 C866 449.8 871 449.2 875.4 449 C879 448.9 882.5 449.2 885.6 449.8 C885.6 452.4 885.4 454.8 885 456.9 C883.8 459.4 882.2 461.2 880.2 462.7 C877.4 464.4 874 465.6 870.6 466.4 C866 467.4 861 468 856 468.9 C852.6 469.7 849.6 470.9 846.5 471.8 C844.4 472.2 842.2 471.2 840.8 469.3Z" fill="#ffffff" />
<clipPath id="cpR"><path d="M840.8 469.3 C843.5 464.5 846.5 460.5 849.4 457.8 C853 454.5 857 452.4 861 451.2 C866 449.8 871 449.2 875.4 449 C879 448.9 882.5 449.2 886.6 449.8 L887 458 C883.8 460.4 882.2 461.6 880.2 463.1 C877.4 464.8 874 466 870.6 466.8 C866 467.8 861 468.4 856 469.3 C852.6 470.1 849.6 471.3 846.5 472.2 Z"/></clipPath>
<g clip-path="url(#cpR)"><circle cx="870.6" cy="456.8" r="10.2" fill="#5a5c12"/><circle cx="870.6" cy="456.8" r="9.2" fill="#c9d024"/><circle cx="870.6" cy="456.8" r="7.1" fill="#8f951a"/><circle cx="870.6" cy="456.8" r="6.3" fill="#dde25a"/><circle cx="870.6" cy="456.8" r="4.9" fill="#2a1c22"/><path d="M869.4 453.4 C871.6 452.8 873.6 453.2 874.4 454.4 C873.6 455.4 872.8 455.8 872.8 457.2 C872.8 458.2 873.2 458.8 872.6 459.2 C871.8 459.4 871.2 459 871 458 C870.8 456.6 870 456 869.2 455.2 C868.8 454.4 868.9 453.8 869.4 453.4Z" fill="#f2ecb4"/></g>
<path d="M840 470.2 C843 464.8 846.2 460.6 849.2 457.8 C852.8 454.4 856.8 452.2 860.8 450.8 C865.8 449.2 870.8 448.4 875.4 448 C879.4 447.8 883 447.9 886.4 448 C889.4 447.6 892.6 446.8 895.8 446 C893.4 449 890.6 451.2 887.4 452.6 C883.6 451.8 879.4 451.6 875.4 451.8 C871 452 866.4 452.8 862 454.2 C858 455.6 854.4 457.6 851.2 460.4 C848.2 463.2 845.4 466.8 842.8 470.6 Z" fill="#211c1d" />
<path d="M842 470.6 C844.6 471.8 846.6 471.8 849 471 C851.4 470.2 853.6 469.4 856 468.9 C861 468 866 467.4 870.6 466.4 C874 465.6 877.4 464.4 880.2 462.7 C882.6 461 884.4 458.8 885.6 456" fill="none" stroke="#211c1d" stroke-width="1.0" stroke-linecap="round" stroke-linejoin="round" />
<path d="M889 449 L893.2 445.2 M886.5 448.6 L889.4 444.6 M891.5 449.4 L897 446.8" fill="none" stroke="#211c1d" stroke-width="1.1" stroke-linecap="round" stroke-linejoin="round" />
<path d="M780 463.6 C782.6 461.2 785.4 459.6 788.4 458.8 C791.4 458.2 794.4 458.2 797 458.8 C799.6 459.6 801.8 461.4 803.5 463.6 C805.2 466 806.8 468.4 808.2 470.6 C808 472.2 807.4 473 806.8 473.4 C804 474.6 801.2 475 798.5 475 C795 474.8 791.6 474 788.8 472.8 C785.8 471.2 783.4 468.6 781.8 465.8Z" fill="#ffffff" />
<clipPath id="cpL"><path d="M780 462.6 C782.6 460.2 785.4 458.6 788.4 457.8 C791.4 457.2 794.4 457.2 797 457.8 C799.6 458.6 801.8 460.4 803.5 462.6 C805.2 465 806.8 467.4 808.2 469.6 L808 473 C804 474.6 801.2 475.2 798.5 475.2 C795 475 791.6 474.2 788.8 473 C785.8 471.4 783.4 468.8 781.8 466Z"/></clipPath>
<g clip-path="url(#cpL)"><circle cx="796.3" cy="466.2" r="7.4" fill="#5a5c12"/><circle cx="796.3" cy="466.2" r="6.5" fill="#c9d024"/><circle cx="796.3" cy="466.2" r="5" fill="#8f951a"/><circle cx="796.3" cy="466.2" r="4.4" fill="#dde25a"/><circle cx="796.3" cy="466.2" r="3.4" fill="#2a1c22"/><path d="M796 463.4 C797.6 463.2 798.8 463.8 799.2 464.8 C798.4 465.2 797.8 465.6 797.8 466.6 C797.6 467.4 797 467.6 796.6 467.2 C796.4 466.2 796 465.6 795.6 464.8 C795.4 464.2 795.5 463.7 796 463.4Z" fill="#f2ecb4"/></g>
<path d="M777.6 462.2 C780.4 459.4 784 457.6 787.6 456.9 C791 456.4 794.4 456.6 797.4 457.6 C800.2 458.6 802.6 460.6 804.4 463 C806 465.4 807.4 468 808.6 470.6 C806.4 468.4 804.6 466.4 802.6 464.8 C800.6 463.2 798.4 462 796 461.4 C793.2 460.8 790.2 460.8 787.6 461.4 C785 462 782.8 463.4 781.4 465.2 C780.6 466.2 780.2 466.4 779.8 466 Z" fill="#211c1d" />
<path d="M781.6 465.4 C783.2 468.4 785.6 471 788.8 472.8 C791.6 474.2 795 475 798.5 475.2 C801.2 475.2 804 474.8 806.8 473.6" fill="none" stroke="#211c1d" stroke-width="1.0" stroke-linecap="round" stroke-linejoin="round" />
<path d="M779.6 462.4 L776.2 461 M779 464.4 L775.8 464.4" fill="none" stroke="#211c1d" stroke-width="1.0" stroke-linecap="round" stroke-linejoin="round" />
<path d="M810.6 508.5C810.2 509.2 809.1 511.3 808.4 512.6C807.7 513.9 807.2 515.2 806.5 516.5C805.8 517.8 804.7 519.2 804.0 520.6C803.3 522.0 802.6 523.4 802.5 524.6C802.4 525.8 802.9 526.8 803.6 527.6C804.3 528.4 805.3 528.7 806.5 529.2C807.7 529.7 809.5 530.1 811.0 530.4C812.5 530.7 815.0 530.9 815.8 531.0" fill="none" stroke="#211c1d" stroke-width="1.2" stroke-linecap="round" stroke-linejoin="round" />
<path d="M821.0 531.4C821.4 531.0 822.6 529.9 823.4 529.2C824.2 528.6 825.2 527.9 826.0 527.5C826.8 527.1 827.4 527.0 828.0 526.9C828.6 526.8 829.3 527.1 829.6 527.1" fill="none" stroke="#211c1d" stroke-width="1.1" stroke-linecap="round" stroke-linejoin="round" />
<path d="M833.6 517.7C833.9 518.1 835.0 519.0 835.4 519.8C835.8 520.6 836.0 521.4 836.0 522.3C836.0 523.2 835.8 524.4 835.4 525.4C835.0 526.4 833.9 527.6 833.6 528.0" fill="none" stroke="#211c1d" stroke-width="1.1" stroke-linecap="round" stroke-linejoin="round" />
<path d="M808.0 458.7C808.2 459.8 808.8 462.8 809.0 465.0C809.2 467.2 809.4 469.2 809.5 472.0C809.6 474.8 809.7 478.8 809.8 482.0C809.9 485.2 810.0 489.8 810.0 491.3" fill="none" stroke="#7a4a58" stroke-width="0.8" stroke-linecap="round" stroke-linejoin="round" />
<path d="M814 561.5 C814.8 559.6 815.8 558.2 817 557 C818.8 555.8 820.8 555.4 822.7 555.5 C824.8 555.7 826.6 556.4 828.4 556 C830.6 554.6 832.2 552.6 834.2 551 C836.2 549.6 838.6 548.8 841 548.8 C843.6 549 846 549.6 848 550.5 C852 552.4 856 554.8 859.6 557 C858.4 558 857.2 558.8 856 559.2 C853.8 559.8 851.4 560 849.2 560.4 C846 561.4 843 562.8 840 563.8 C836.2 564.8 832.2 565.4 828.4 565.5 C825.6 565.7 823 565.6 820.4 565 C817.8 564.4 815.4 563.2 814 561.5Z" fill="#5b4890" stroke="#211c1d" stroke-width="0.9"/>
<path d="M821 565.3 C823.4 565.7 825.8 565.7 828.4 565.5 C832.2 565.4 836.2 564.8 840 563.8 C843 562.8 846 561.4 849.2 560.4 C850.8 560.2 852.4 560.2 853.8 560.4 C853.6 563.6 852.8 566.8 851.5 569.6 C850 572.6 848 575.2 845.7 577 C843.2 578.8 840.4 580.2 837.7 580.5 C834.4 580.8 831.2 580.2 828.4 578.8 C826 577.4 824 575.4 822.7 573 C821.6 570.6 821 568 821 565.3Z" fill="#7358a6" stroke="#211c1d" stroke-width="0.9"/>
<path d="M826 569.5 C830 572.5 836 573.5 842 571.5" fill="none" stroke="#5b4890" stroke-width="0.6" stroke-linecap="round" stroke-linejoin="round" />
<path d="M805.0 782.5C806.2 781.7 810.0 777.9 812.5 777.5C815.0 777.1 818.8 779.6 820.0 780.0C822.1 780.8 828.3 782.8 832.5 785.0C836.7 787.2 840.8 790.1 845.0 793.0C849.2 795.9 854.0 799.3 857.5 802.5C861.0 805.7 863.8 809.2 866.0 812.0C868.2 814.8 870.2 817.8 871.0 819.0C871.8 817.7 873.7 814.2 876.0 811.0C878.3 807.8 881.8 803.1 885.0 800.0C888.2 796.9 891.3 795.2 895.0 792.5C898.7 789.8 902.8 786.5 907.0 784.0C911.2 781.5 914.5 779.6 920.0 777.5C925.5 775.4 933.8 772.9 940.0 771.5C946.2 770.1 951.7 769.3 957.5 769.0C963.3 768.7 969.6 768.9 975.0 769.5C980.4 770.1 985.5 771.1 990.0 772.5C994.5 773.9 998.2 775.9 1002.0 778.0C1005.8 780.1 1009.2 782.3 1012.5 785.0C1015.8 787.7 1019.1 790.7 1022.0 794.0C1024.9 797.3 1027.3 801.5 1030.0 805.0C1032.7 808.5 1035.5 811.7 1038.0 815.0C1040.5 818.3 1043.3 821.7 1045.0 825.0C1046.7 828.3 1047.6 831.7 1048.0 835.0C1048.4 838.3 1048.2 840.5 1047.5 845.0C1046.8 849.5 1046.6 854.8 1044.0 862.0C1041.4 869.2 1038.5 879.7 1032.0 888.0C1025.5 896.3 1014.5 906.2 1005.0 912.0C995.5 917.8 980.0 920.8 975.0 922.5C975.2 925.4 976.0 935.0 976.0 940.0C976.0 945.0 976.8 950.0 975.0 952.5C973.2 955.0 972.1 952.9 965.0 955.0C957.9 957.1 941.7 961.2 932.5 965.0C923.3 968.8 915.8 972.9 910.0 977.5C904.2 982.1 901.0 989.4 897.5 992.5C894.0 995.6 890.4 995.4 889.0 996.0C887.5 994.7 882.8 991.1 880.0 988.0C877.2 984.9 876.2 982.2 872.5 977.5C868.8 972.8 863.8 965.8 857.5 960.0C851.2 954.2 840.4 947.9 835.0 942.5C829.6 937.1 826.7 930.0 825.0 927.5C823.3 926.4 820.8 923.9 815.0 921.0C809.2 918.1 797.5 915.2 790.0 910.0C782.5 904.8 774.6 897.1 770.0 890.0C765.4 882.9 763.3 875.4 762.5 867.5C761.7 859.6 762.9 850.8 765.0 842.5C767.1 834.2 770.4 825.0 775.0 817.5C779.6 810.0 787.5 803.3 792.5 797.5C797.5 791.7 802.9 785.0 805.0 782.5Z" fill="#560a8e" stroke="#211c1d" stroke-width="3.8" stroke-linecap="round" stroke-linejoin="round" />
<ellipse cx="950" cy="850" rx="62" ry="52" fill="#6516a4" opacity="0.35" filter="url(#soft8)"/>
<ellipse cx="818" cy="850" rx="32" ry="46" fill="#6516a4" opacity="0.3" filter="url(#soft8)"/>
<path d="M870.0 872.5C870.5 874.4 871.3 879.8 873.0 884.0C874.7 888.2 877.2 893.7 880.0 898.0C882.8 902.3 886.3 906.7 890.0 910.0C893.7 913.3 897.8 915.9 902.0 918.0C906.2 920.1 910.3 921.2 915.0 922.5C919.7 923.8 925.0 925.2 930.0 926.0C935.0 926.8 940.0 927.5 945.0 927.5C950.0 927.5 955.0 926.8 960.0 926.0C965.0 925.2 972.5 923.1 975.0 922.5" fill="none" stroke="#211c1d" stroke-width="2.2" stroke-linecap="round" stroke-linejoin="round" />
<path d="M825.0 926.0C828.3 925.4 838.3 924.3 845.0 922.5C851.7 920.7 859.3 918.2 865.0 915.0C870.7 911.8 876.7 905.0 879.0 903.0" fill="none" stroke="#211c1d" stroke-width="2.2" stroke-linecap="round" stroke-linejoin="round" />
<path d="M871.0 819.0C870.7 820.2 869.5 823.8 869.0 826.0C868.5 828.2 868.2 831.0 868.0 832.0" fill="none" stroke="#211c1d" stroke-width="1.3" stroke-linecap="round" stroke-linejoin="round" />
<path d="M871.0 819.0C871.3 820.2 872.7 824.8 873.0 826.0" fill="none" stroke="#211c1d" stroke-width="1.0" stroke-linecap="round" stroke-linejoin="round" />
<path d="M871.0 819.0C870.2 819.8 866.8 823.2 866.0 824.0" fill="none" stroke="#211c1d" stroke-width="1.0" stroke-linecap="round" stroke-linejoin="round" />
<path d="M805.0 782.5C806.2 781.7 810.0 777.9 812.5 777.5C815.0 777.1 818.8 779.6 820.0 780.0C822.1 780.8 828.3 782.8 832.5 785.0C836.7 787.2 840.8 790.1 845.0 793.0C849.2 795.9 854.0 799.3 857.5 802.5C861.0 805.7 863.8 809.2 866.0 812.0C868.2 814.8 870.2 817.8 871.0 819.0C871.8 817.7 873.7 814.2 876.0 811.0C878.3 807.8 881.8 803.1 885.0 800.0C888.2 796.9 891.3 795.2 895.0 792.5C898.7 789.8 902.8 786.5 907.0 784.0C911.2 781.5 914.5 779.6 920.0 777.5C925.5 775.4 933.8 772.9 940.0 771.5C946.2 770.1 951.7 769.3 957.5 769.0C963.3 768.7 969.6 768.9 975.0 769.5C980.4 770.1 985.5 771.1 990.0 772.5C994.5 773.9 998.2 775.9 1002.0 778.0C1005.8 780.1 1009.2 782.3 1012.5 785.0C1015.8 787.7 1019.1 790.7 1022.0 794.0C1024.9 797.3 1027.3 801.5 1030.0 805.0C1032.7 808.5 1035.5 811.7 1038.0 815.0C1040.5 818.3 1043.3 821.7 1045.0 825.0C1046.7 828.3 1047.6 831.7 1048.0 835.0C1048.4 838.3 1048.2 840.5 1047.5 845.0C1046.8 849.5 1046.6 854.8 1044.0 862.0C1041.4 869.2 1038.5 879.7 1032.0 888.0C1025.5 896.3 1014.5 906.2 1005.0 912.0C995.5 917.8 980.0 920.8 975.0 922.5C975.2 925.4 976.0 935.0 976.0 940.0C976.0 945.0 976.8 950.0 975.0 952.5C973.2 955.0 972.1 952.9 965.0 955.0C957.9 957.1 941.7 961.2 932.5 965.0C923.3 968.8 915.8 972.9 910.0 977.5C904.2 982.1 901.0 989.4 897.5 992.5C894.0 995.6 890.4 995.4 889.0 996.0C887.5 994.7 882.8 991.1 880.0 988.0C877.2 984.9 876.2 982.2 872.5 977.5C868.8 972.8 863.8 965.8 857.5 960.0C851.2 954.2 840.4 947.9 835.0 942.5C829.6 937.1 826.7 930.0 825.0 927.5C823.3 926.4 820.8 923.9 815.0 921.0C809.2 918.1 797.5 915.2 790.0 910.0C782.5 904.8 774.6 897.1 770.0 890.0C765.4 882.9 763.3 875.4 762.5 867.5C761.7 859.6 762.9 850.8 765.0 842.5C767.1 834.2 770.4 825.0 775.0 817.5C779.6 810.0 787.5 803.3 792.5 797.5C797.5 791.7 802.9 785.0 805.0 782.5Z" fill="none" stroke="#211c1d" stroke-width="3.8" stroke-linecap="round" stroke-linejoin="round" />
<path d="M1131.0 839.6C1125.8 840.0 1109.2 841.6 1100.0 842.0C1090.8 842.4 1081.2 842.1 1076.0 842.0C1070.8 841.9 1073.3 840.0 1069.0 841.5C1064.7 843.0 1056.4 847.5 1050.0 851.0C1043.6 854.5 1037.2 858.5 1030.8 862.7C1024.4 866.9 1017.6 870.9 1011.5 876.0C1005.4 881.1 998.8 887.4 994.0 893.5C989.2 899.6 985.7 906.0 982.7 912.7C979.7 919.4 977.0 926.8 976.0 933.8C975.0 940.8 975.9 948.0 977.0 955.0C978.1 962.0 980.8 969.6 982.7 976.0C984.6 982.4 985.6 988.0 988.5 993.5C991.4 999.0 995.2 1004.6 1000.0 1008.8C1004.8 1013.0 1011.2 1016.5 1017.3 1018.5C1023.4 1020.5 1029.8 1021.3 1036.5 1021.0C1043.2 1020.7 1051.6 1019.5 1057.7 1016.5C1063.8 1013.5 1068.8 1007.8 1073.0 1003.0C1077.2 998.2 1080.8 992.5 1082.7 987.7C1084.6 982.9 1085.2 977.9 1084.6 974.0C1083.9 970.1 1081.7 966.8 1078.8 964.6C1075.9 962.4 1071.3 961.3 1067.3 960.8C1063.3 960.3 1056.9 961.6 1054.8 961.7C1056.2 962.8 1061.4 965.8 1063.5 968.5C1065.6 971.2 1068.0 974.8 1067.3 978.0C1066.6 981.2 1062.8 985.8 1059.6 987.7C1056.4 989.6 1051.8 990.6 1048.0 989.6C1044.2 988.6 1039.0 985.2 1036.5 982.0C1034.0 978.8 1033.5 973.9 1032.7 970.4C1031.9 966.9 1031.4 965.0 1031.7 960.8C1032.0 956.6 1032.8 951.2 1034.6 945.4C1036.4 939.6 1038.4 932.4 1042.3 926.0C1046.2 919.6 1052.2 912.8 1057.7 907.0C1063.2 901.2 1069.2 896.3 1075.0 891.5C1080.8 886.7 1086.5 882.8 1092.3 878.0C1098.1 873.2 1104.5 867.5 1109.6 862.7C1114.7 857.9 1119.4 852.9 1123.0 849.0C1126.6 845.1 1129.7 841.2 1131.0 839.6Z" fill="#e55ef4" stroke="#211c1d" stroke-width="3.9" stroke-linecap="round" stroke-linejoin="round" />
<path d="M980.0 965.0C980.5 966.8 981.3 971.2 982.7 976.0C984.1 980.8 985.6 988.0 988.5 993.5C991.4 999.0 995.2 1004.6 1000.0 1008.8C1004.8 1013.0 1011.2 1016.5 1017.3 1018.5C1023.4 1020.5 1029.8 1021.3 1036.5 1021.0C1043.2 1020.7 1051.6 1019.5 1057.7 1016.5C1063.8 1013.5 1069.3 1007.1 1073.0 1003.0C1076.7 998.9 1078.8 993.8 1080.0 992.0" fill="none" stroke="#211c1d" stroke-width="5.2" stroke-linecap="round" stroke-linejoin="round" />
<path d="M1034.0 972.0C1034.7 971.0 1036.6 967.5 1038.0 966.0C1039.4 964.5 1041.6 963.2 1042.3 962.7C1043.2 964.0 1046.8 967.5 1047.5 970.4C1048.2 973.3 1047.4 977.6 1046.5 980.0C1045.6 982.4 1042.8 984.2 1042.0 985.0C1041.2 984.3 1038.3 983.2 1037.0 981.0C1035.7 978.8 1034.5 973.5 1034.0 972.0Z" fill="#e55ef4" stroke="#211c1d" stroke-width="2.2" stroke-linecap="round" stroke-linejoin="round" />
<path d="M1076.0 842.0C1077.6 841.9 1081.5 841.7 1085.8 841.4C1090.1 841.1 1094.8 840.7 1102.0 840.0C1109.2 839.3 1119.5 838.3 1128.9 837.4C1138.3 836.5 1153.6 835.2 1158.5 834.7" fill="none" stroke="#211c1d" stroke-width="2.4" stroke-linecap="round" stroke-linejoin="round" />
<path d="M847.8 297.4C846.5 298.5 842.2 301.6 840.0 304.0C837.8 306.4 836.5 309.3 834.8 312.0C833.1 314.7 831.2 317.3 830.0 320.0C828.8 322.7 828.1 325.4 827.4 328.4C826.7 331.4 826.0 334.9 825.6 338.0C825.2 341.1 825.1 345.5 825.0 347.0" fill="none" stroke="#211c1d" stroke-width="2.2" stroke-linecap="round" stroke-linejoin="round" />
<path d="M860.0 288.0C861.3 287.0 865.3 283.7 868.0 282.0C870.7 280.3 874.7 278.7 876.0 278.0" fill="none" stroke="#211c1d" stroke-width="1.2" stroke-linecap="round" stroke-linejoin="round" />
<path d="M864.0 293.0C865.5 292.0 870.0 288.7 873.0 287.0C876.0 285.3 880.5 283.7 882.0 283.0" fill="none" stroke="#211c1d" stroke-width="1.2" stroke-linecap="round" stroke-linejoin="round" />
<path d="M893.0 263.0C894.2 263.3 897.5 264.5 900.0 265.0C902.5 265.5 906.7 265.8 908.0 266.0" fill="none" stroke="#211c1d" stroke-width="1.2" stroke-linecap="round" stroke-linejoin="round" />
<path d="M844.6 354.6C846.2 353.7 850.7 350.6 854.0 349.0C857.3 347.4 860.9 345.8 864.2 344.8C867.5 343.9 870.7 343.6 874.0 343.3C877.3 343.0 882.2 343.1 883.8 343.0" fill="none" stroke="#211c1d" stroke-width="1.8" stroke-linecap="round" stroke-linejoin="round" />
<path d="M854.4 348.0C855.7 347.6 859.3 346.2 862.0 345.5C864.7 344.8 869.2 344.2 870.7 344.0" fill="none" stroke="#211c1d" stroke-width="1.0" stroke-linecap="round" stroke-linejoin="round" />
<path d="M821.7 300.7C822.4 300.4 824.4 299.4 826.0 299.0C827.6 298.6 830.6 298.3 831.5 298.2" fill="none" stroke="#211c1d" stroke-width="1.1" stroke-linecap="round" stroke-linejoin="round" />
<path d="M769.4 362.7C769.2 363.9 768.5 367.5 768.4 370.0C768.3 372.5 768.6 376.2 768.6 377.5" fill="none" stroke="#211c1d" stroke-width="1.1" stroke-linecap="round" stroke-linejoin="round" />
<path d="M931.0 393.8C932.2 394.6 935.5 397.1 938.0 398.5C940.5 399.9 943.1 400.9 945.9 402.0C948.7 403.1 951.7 404.2 955.0 405.0C958.3 405.8 962.2 406.7 965.5 406.9C968.8 407.1 971.8 406.6 975.0 406.0C978.2 405.4 983.3 404.0 985.0 403.6" fill="none" stroke="#211c1d" stroke-width="1.9" stroke-linecap="round" stroke-linejoin="round" />
<path d="M775.0 368.0C776.8 367.3 782.5 364.3 786.0 364.0C789.5 363.7 792.8 364.2 796.0 366.0C799.2 367.8 803.5 373.5 805.0 375.0" fill="none" stroke="#211c1d" stroke-width="1.4" stroke-linecap="round" stroke-linejoin="round" />
<path d="M779.0 375.0C780.3 374.3 784.5 371.7 787.0 371.0C789.5 370.3 792.8 371.0 794.0 371.0" fill="none" stroke="#211c1d" stroke-width="1.0" stroke-linecap="round" stroke-linejoin="round" />
<path d="M1000.0 296.0C1001.7 297.3 1006.7 300.7 1010.0 304.0C1013.3 307.3 1018.3 314.0 1020.0 316.0" fill="none" stroke="#211c1d" stroke-width="1.3" stroke-linecap="round" stroke-linejoin="round" />
<path d="M1006.0 293.0C1007.7 294.2 1012.7 297.2 1016.0 300.0C1019.3 302.8 1024.3 308.3 1026.0 310.0" fill="none" stroke="#211c1d" stroke-width="1.1" stroke-linecap="round" stroke-linejoin="round" />
<path d="M1012.5 290.0C1014.2 291.5 1019.7 295.7 1023.0 299.0C1026.3 302.3 1030.9 308.2 1032.5 310.0" fill="none" stroke="#211c1d" stroke-width="1.1" stroke-linecap="round" stroke-linejoin="round" />
<path d="M905.0 296.0C906.2 295.7 909.8 294.5 912.0 294.0C914.2 293.5 917.0 293.2 918.0 293.0" fill="none" stroke="#211c1d" stroke-width="1.6" stroke-linecap="round" stroke-linejoin="round" />
<path d="M916.5 372.5C918.1 373.7 922.8 377.3 926.0 379.5C929.2 381.7 932.3 383.9 936.0 385.6C939.7 387.4 943.9 388.9 948.0 390.0C952.1 391.1 958.5 391.7 960.6 392.0" fill="none" stroke="#211c1d" stroke-width="1.8" stroke-linecap="round" stroke-linejoin="round" />
<path d="M967.0 391.3C968.7 391.1 973.7 390.9 977.0 390.4C980.3 389.8 985.1 388.4 986.7 388.0" fill="none" stroke="#211c1d" stroke-width="1.2" stroke-linecap="round" stroke-linejoin="round" />
<path d="M935.0 397.5C936.0 398.6 938.8 402.1 941.0 404.0C943.2 405.9 945.7 407.8 948.0 409.0C950.3 410.2 953.8 410.7 955.0 411.0" fill="none" stroke="#211c1d" stroke-width="1.3" stroke-linecap="round" stroke-linejoin="round" />
<path d="M986.0 327.5C989.0 330.1 998.3 337.6 1004.0 343.0C1009.7 348.4 1015.7 354.3 1020.0 360.0C1024.3 365.7 1027.5 371.7 1030.0 377.0C1032.5 382.3 1033.8 385.7 1035.0 392.0C1036.2 398.3 1037.5 407.0 1037.5 415.0C1037.5 423.0 1035.8 431.7 1035.0 440.0C1034.2 448.3 1032.7 456.7 1032.5 465.0C1032.3 473.3 1033.2 482.5 1034.0 490.0C1034.8 497.5 1035.3 503.0 1037.0 510.0C1038.7 517.0 1041.3 525.0 1044.0 532.0C1046.7 539.0 1049.8 545.2 1053.0 552.0C1056.2 558.8 1061.3 569.5 1063.0 573.0" fill="none" stroke="#211c1d" stroke-width="2.6" stroke-linecap="round" stroke-linejoin="round" />
<path d="M1032.5 327.5C1034.1 329.2 1039.1 334.2 1042.0 338.0C1044.9 341.8 1047.7 346.0 1050.0 350.0C1052.3 354.0 1054.3 357.8 1056.0 362.0C1057.7 366.2 1059.3 372.8 1060.0 375.0" fill="none" stroke="#211c1d" stroke-width="1.6" stroke-linecap="round" stroke-linejoin="round" />
<path d="M1055.0 357.5C1056.8 360.6 1062.7 369.8 1066.0 376.0C1069.3 382.2 1073.5 391.8 1075.0 395.0" fill="none" stroke="#211c1d" stroke-width="1.4" stroke-linecap="round" stroke-linejoin="round" />
<path d="M1067.5 412.5C1067.9 415.1 1069.1 422.6 1070.0 428.0C1070.9 433.4 1071.3 439.2 1073.0 445.0C1074.7 450.8 1077.2 457.2 1080.0 463.0C1082.8 468.8 1086.7 474.5 1090.0 480.0C1093.3 485.5 1096.7 491.0 1100.0 496.0C1103.3 501.0 1106.0 505.7 1110.0 510.0C1114.0 514.3 1119.0 518.2 1124.0 522.0C1129.0 525.8 1134.3 529.5 1140.0 532.5C1145.7 535.5 1152.2 537.9 1158.0 540.0C1163.8 542.1 1172.2 544.2 1175.0 545.0" fill="none" stroke="#211c1d" stroke-width="1.6" stroke-linecap="round" stroke-linejoin="round" />
<path d="M1002.5 460.0C1003.1 462.8 1005.2 471.2 1006.0 477.0C1006.8 482.8 1007.7 488.8 1007.5 495.0C1007.3 501.2 1006.2 507.8 1005.0 514.0C1003.8 520.2 1001.3 526.2 1000.0 532.5C998.7 538.8 997.8 545.8 997.0 552.0C996.2 558.2 995.3 567.0 995.0 570.0" fill="none" stroke="#211c1d" stroke-width="1.3" stroke-linecap="round" stroke-linejoin="round" />
<path d="M1118.5 474.0C1119.0 475.5 1120.5 480.1 1121.5 483.0C1122.5 485.9 1123.3 488.5 1124.6 491.5C1125.9 494.5 1127.6 497.8 1129.5 501.0C1131.4 504.2 1133.5 507.3 1136.0 510.5C1138.5 513.7 1143.2 518.4 1144.6 520.0" fill="none" stroke="#211c1d" stroke-width="2.6" stroke-linecap="round" stroke-linejoin="round" />
<path d="M1007.0 348.0C1008.7 350.3 1014.0 356.7 1017.0 362.0C1020.0 367.3 1022.7 374.2 1025.0 380.0C1027.3 385.8 1030.0 394.2 1031.0 397.0" fill="none" stroke="#211c1d" stroke-width="1.2" stroke-linecap="round" stroke-linejoin="round" />
<path d="M1085.0 487.5C1086.2 489.1 1089.5 493.7 1092.0 497.0C1094.5 500.3 1097.3 503.8 1100.0 507.5C1102.7 511.2 1105.1 515.2 1108.0 519.0C1110.9 522.8 1115.9 528.2 1117.5 530.0" fill="none" stroke="#211c1d" stroke-width="1.1" stroke-linecap="round" stroke-linejoin="round" />
<path d="M1010.0 595.0C1011.0 597.0 1013.5 602.8 1016.0 607.0C1018.5 611.2 1021.5 615.3 1025.0 620.0C1028.5 624.7 1032.8 630.0 1037.0 635.0C1041.2 640.0 1045.3 645.2 1050.0 650.0C1054.7 654.8 1060.0 659.4 1065.0 664.0C1070.0 668.6 1075.7 673.3 1080.0 677.5C1084.3 681.7 1087.7 685.2 1091.0 689.0C1094.3 692.8 1097.3 695.7 1100.0 700.0C1102.7 704.3 1104.9 710.0 1107.0 715.0C1109.1 720.0 1111.6 727.5 1112.5 730.0" fill="none" stroke="#211c1d" stroke-width="2.6" stroke-linecap="round" stroke-linejoin="round" />
<path d="M1075.0 587.5C1077.0 589.2 1082.8 594.2 1087.0 598.0C1091.2 601.8 1095.3 606.0 1100.0 610.0C1104.7 614.0 1110.0 617.8 1115.0 622.0C1120.0 626.2 1125.5 630.3 1130.0 635.0C1134.5 639.7 1138.2 645.0 1142.0 650.0C1145.8 655.0 1149.0 659.2 1152.5 665.0C1156.0 670.8 1159.7 678.3 1163.0 685.0C1166.3 691.7 1170.0 699.0 1172.5 705.0C1175.0 711.0 1176.3 715.6 1178.0 721.0C1179.7 726.4 1181.8 734.8 1182.5 737.5" fill="none" stroke="#211c1d" stroke-width="2.6" stroke-linecap="round" stroke-linejoin="round" />
<path d="M1117.5 540.0C1119.8 541.8 1126.4 547.2 1131.0 551.0C1135.6 554.8 1140.2 558.3 1145.0 562.5C1149.8 566.7 1155.0 571.4 1160.0 576.0C1165.0 580.6 1170.5 585.2 1175.0 590.0C1179.5 594.8 1183.2 600.0 1187.0 605.0C1190.8 610.0 1194.7 615.7 1197.5 620.0C1200.3 624.3 1201.9 627.2 1204.0 631.0C1206.1 634.8 1209.0 640.6 1210.0 642.5" fill="none" stroke="#211c1d" stroke-width="2.4" stroke-linecap="round" stroke-linejoin="round" />
<path d="M1160.0 542.5C1162.2 543.2 1168.8 545.3 1173.0 547.0C1177.2 548.7 1180.8 549.7 1185.0 552.5C1189.2 555.3 1193.8 559.8 1198.0 564.0C1202.2 568.2 1206.8 573.0 1210.0 577.5C1213.2 582.0 1214.9 586.4 1217.0 591.0C1219.1 595.6 1221.6 602.7 1222.5 605.0" fill="none" stroke="#211c1d" stroke-width="1.8" stroke-linecap="round" stroke-linejoin="round" />
<path d="M1000.0 512.5C999.3 514.9 996.8 522.0 996.0 527.0C995.2 532.0 995.0 537.0 995.0 542.5C995.0 548.0 995.2 554.6 996.0 560.0C996.8 565.4 998.2 570.3 1000.0 575.0C1001.8 579.7 1004.5 583.8 1007.0 588.0C1009.5 592.2 1013.7 598.0 1015.0 600.0" fill="none" stroke="#211c1d" stroke-width="1.8" stroke-linecap="round" stroke-linejoin="round" />
<path d="M1017.5 517.5C1017.6 520.2 1017.6 528.6 1018.0 534.0C1018.4 539.4 1019.0 544.7 1020.0 550.0C1021.0 555.3 1022.3 561.0 1024.0 566.0C1025.7 571.0 1027.8 576.0 1030.0 580.0C1032.2 584.0 1034.5 587.1 1037.0 590.0C1039.5 592.9 1043.7 596.2 1045.0 597.5" fill="none" stroke="#211c1d" stroke-width="1.1" stroke-linecap="round" stroke-linejoin="round" />
<path d="M1012.5 605.0C1013.1 607.2 1014.8 613.8 1016.0 618.0C1017.2 622.2 1018.2 625.8 1020.0 630.0C1021.8 634.2 1024.5 638.8 1027.0 643.0C1029.5 647.2 1031.7 651.0 1035.0 655.0C1038.3 659.0 1042.8 663.2 1047.0 667.0C1051.2 670.8 1055.3 673.8 1060.0 677.5C1064.7 681.2 1070.0 685.2 1075.0 689.0C1080.0 692.8 1086.0 696.5 1090.0 700.0C1094.0 703.5 1096.1 706.7 1099.0 710.0C1101.9 713.3 1106.1 718.3 1107.5 720.0" fill="none" stroke="#211c1d" stroke-width="1.1" stroke-linecap="round" stroke-linejoin="round" />
<path d="M1027.5 657.5C1029.2 659.2 1034.2 664.7 1038.0 668.0C1041.8 671.3 1045.5 674.2 1050.0 677.5C1054.5 680.8 1060.0 684.7 1065.0 688.0C1070.0 691.3 1075.7 694.2 1080.0 697.5C1084.3 700.8 1087.7 704.2 1091.0 708.0C1094.3 711.8 1098.5 718.0 1100.0 720.0" fill="none" stroke="#211c1d" stroke-width="1.6" stroke-linecap="round" stroke-linejoin="round" />
<path d="M1190.0 685.0C1191.3 687.3 1195.5 694.4 1198.0 699.0C1200.5 703.6 1202.8 708.7 1205.0 712.5C1207.2 716.3 1209.3 719.1 1211.0 722.0C1212.7 724.9 1214.3 728.7 1215.0 730.0" fill="none" stroke="#211c1d" stroke-width="2.4" stroke-linecap="round" stroke-linejoin="round" />
<path d="M1232.3 640.0C1231.7 641.5 1229.3 645.9 1228.5 649.0C1227.7 652.1 1227.3 655.2 1227.7 658.5C1228.1 661.8 1229.9 665.4 1230.8 669.0C1231.7 672.6 1232.5 676.3 1233.0 680.0C1233.5 683.7 1233.8 689.2 1234.0 691.0" fill="none" stroke="#211c1d" stroke-width="3.0" stroke-linecap="round" stroke-linejoin="round" />
<path d="M1223.0 654.0C1222.8 656.0 1221.0 661.9 1221.5 666.0C1222.0 670.1 1225.2 676.4 1226.0 678.5" fill="none" stroke="#211c1d" stroke-width="1.0" stroke-linecap="round" stroke-linejoin="round" />
<path d="M1237.0 687.7C1238.5 688.4 1243.2 690.3 1246.0 692.0C1248.8 693.7 1252.2 696.2 1254.0 698.0C1255.8 699.8 1256.5 702.2 1257.0 703.0" fill="none" stroke="#211c1d" stroke-width="2.0" stroke-linecap="round" stroke-linejoin="round" />
<path d="M1137.5 660.0C1138.8 661.7 1142.5 666.7 1145.0 670.0C1147.5 673.3 1150.3 676.7 1152.5 680.0C1154.7 683.3 1156.3 686.7 1158.0 690.0C1159.7 693.3 1161.8 698.3 1162.5 700.0" fill="none" stroke="#211c1d" stroke-width="1.6" stroke-linecap="round" stroke-linejoin="round" />
<path d="M1125.0 675.0C1125.8 676.0 1128.3 678.9 1130.0 681.0C1131.7 683.1 1134.2 686.4 1135.0 687.5" fill="none" stroke="#211c1d" stroke-width="1.1" stroke-linecap="round" stroke-linejoin="round" />
<path d="M1160.0 585.0C1160.8 586.0 1163.3 588.9 1165.0 591.0C1166.7 593.1 1169.2 596.4 1170.0 597.5" fill="none" stroke="#211c1d" stroke-width="1.1" stroke-linecap="round" stroke-linejoin="round" />
<path d="M972.5 572.5C972.1 573.8 970.4 577.5 970.0 580.0C969.6 582.5 969.5 585.3 970.0 587.5C970.5 589.7 972.5 592.1 973.0 593.0" fill="none" stroke="#211c1d" stroke-width="1.2" stroke-linecap="round" stroke-linejoin="round" />
<path d="M960.0 580.0C959.5 581.5 957.3 586.0 957.0 589.0C956.7 592.0 957.8 596.5 958.0 598.0" fill="none" stroke="#211c1d" stroke-width="1.2" stroke-linecap="round" stroke-linejoin="round" />
<path d="M982.0 562.0C983.3 561.2 987.3 558.2 990.0 557.0C992.7 555.8 996.7 555.3 998.0 555.0" fill="none" stroke="#211c1d" stroke-width="1.6" stroke-linecap="round" stroke-linejoin="round" />
<path d="M1000.0 677.5C1001.7 679.4 1006.7 685.2 1010.0 689.0C1013.3 692.8 1018.0 696.7 1020.0 700.0C1022.0 703.3 1021.6 706.1 1022.0 709.0C1022.4 711.9 1022.4 716.1 1022.5 717.5" fill="none" stroke="#211c1d" stroke-width="1.1" stroke-linecap="round" stroke-linejoin="round" />
<path d="M1157.5 720.0C1158.2 722.5 1160.8 730.0 1162.0 735.0C1163.2 740.0 1164.2 744.8 1165.0 750.0C1165.8 755.2 1166.6 760.6 1167.0 766.0C1167.4 771.4 1167.8 777.5 1167.5 782.5C1167.2 787.5 1166.2 791.8 1165.0 796.0C1163.8 800.2 1160.8 805.6 1160.0 807.5" fill="none" stroke="#211c1d" stroke-width="2.4" stroke-linecap="round" stroke-linejoin="round" />
<path d="M1175.0 720.0C1175.7 722.2 1177.8 728.8 1179.0 733.0C1180.2 737.2 1181.7 740.8 1182.5 745.0C1183.3 749.2 1183.6 753.8 1184.0 758.0C1184.4 762.2 1184.8 768.0 1185.0 770.0" fill="none" stroke="#211c1d" stroke-width="2.2" stroke-linecap="round" stroke-linejoin="round" />
<path d="M1110.0 727.0C1110.2 728.0 1111.1 730.7 1111.5 733.0C1111.9 735.3 1112.3 739.7 1112.5 741.0" fill="none" stroke="#211c1d" stroke-width="1.8" stroke-linecap="round" stroke-linejoin="round" />
<path d="M1197.5 735.0C1198.4 736.8 1201.3 742.2 1203.0 746.0C1204.7 749.8 1206.5 753.8 1207.5 757.5C1208.5 761.2 1208.6 764.7 1209.0 768.0C1209.4 771.3 1209.8 775.9 1210.0 777.5" fill="none" stroke="#211c1d" stroke-width="1.1" stroke-linecap="round" stroke-linejoin="round" />
<path d="M1135.0 792.5C1134.8 794.2 1134.4 799.7 1134.0 803.0C1133.6 806.3 1133.5 809.5 1132.5 812.5C1131.5 815.5 1129.7 818.5 1128.0 821.0C1126.3 823.5 1123.4 826.4 1122.5 827.5" fill="none" stroke="#211c1d" stroke-width="1.1" stroke-linecap="round" stroke-linejoin="round" />
<path d="M1060.0 812.5C1061.0 812.8 1063.9 814.1 1066.0 814.5C1068.1 814.9 1071.4 814.9 1072.5 815.0" fill="none" stroke="#211c1d" stroke-width="1.1" stroke-linecap="round" stroke-linejoin="round" />
<path d="M1110.0 830.0C1111.7 829.3 1116.7 827.7 1120.0 826.0C1123.3 824.3 1126.8 822.3 1130.0 820.0C1133.2 817.7 1136.1 814.9 1139.0 812.0C1141.9 809.1 1146.1 804.1 1147.5 802.5" fill="none" stroke="#211c1d" stroke-width="1.1" stroke-linecap="round" stroke-linejoin="round" />
<path d="M1240.0 596.0C1239.3 597.3 1237.2 601.3 1236.0 604.0C1234.8 606.7 1233.5 610.7 1233.0 612.0" fill="none" stroke="#211c1d" stroke-width="1.2" stroke-linecap="round" stroke-linejoin="round" />
<path d="M1243.0 655.0C1244.8 656.5 1250.8 660.3 1254.0 664.0C1257.2 667.7 1260.7 674.8 1262.0 677.0" fill="none" stroke="#211c1d" stroke-width="1.1" stroke-linecap="round" stroke-linejoin="round" />
<path d="M1238.5 672.3C1240.0 673.6 1244.4 676.9 1247.7 680.0C1251.0 683.1 1256.2 688.0 1258.5 690.8C1260.8 693.6 1261.0 696.0 1261.5 697.0" fill="none" stroke="#211c1d" stroke-width="1.1" stroke-linecap="round" stroke-linejoin="round" />
<path d="M1110.0 860.0C1109.3 861.7 1106.8 866.7 1106.0 870.0C1105.2 873.3 1105.2 877.0 1105.0 880.0C1104.8 883.0 1104.8 885.5 1105.0 888.0C1105.2 890.5 1105.8 893.8 1106.0 895.0" fill="none" stroke="#211c1d" stroke-width="1.2" stroke-linecap="round" stroke-linejoin="round" />
<path d="M1117.5 870.0C1117.2 871.3 1115.9 875.5 1115.5 878.0C1115.1 880.5 1115.1 883.8 1115.0 885.0" fill="none" stroke="#211c1d" stroke-width="1.1" stroke-linecap="round" stroke-linejoin="round" />
<path d="M1107.5 910.0C1107.6 911.5 1107.6 916.1 1108.0 919.0C1108.4 921.9 1108.8 925.0 1110.0 927.5C1111.2 930.0 1112.9 931.9 1115.0 934.0C1117.1 936.1 1120.2 938.7 1122.5 940.0C1124.8 941.3 1126.9 941.6 1129.0 942.0C1131.1 942.4 1134.0 942.4 1135.0 942.5" fill="none" stroke="#211c1d" stroke-width="1.3" stroke-linecap="round" stroke-linejoin="round" />
<path d="M1096.0 905.0C1096.2 907.2 1096.0 913.8 1097.0 918.0C1098.0 922.2 1099.8 926.5 1102.0 930.0C1104.2 933.5 1108.7 937.5 1110.0 939.0" fill="none" stroke="#211c1d" stroke-width="1.1" stroke-linecap="round" stroke-linejoin="round" />
<path d="M1140.0 917.0C1141.2 917.3 1145.0 919.2 1147.0 919.0C1149.0 918.8 1151.2 916.5 1152.0 916.0" fill="none" stroke="#211c1d" stroke-width="1.2" stroke-linecap="round" stroke-linejoin="round" />
<path d="M1035.0 870.0C1036.2 869.2 1039.5 866.7 1042.0 865.0C1044.5 863.3 1047.3 861.8 1050.0 860.0C1052.7 858.2 1055.5 856.2 1058.0 854.5C1060.5 852.8 1063.8 850.8 1065.0 850.0" fill="none" stroke="#211c1d" stroke-width="1.1" stroke-linecap="round" stroke-linejoin="round" />
<path d="M1028.0 866.0C1029.7 865.0 1034.7 861.8 1038.0 860.0C1041.3 858.2 1044.3 857.0 1048.0 855.0C1051.7 853.0 1058.0 849.2 1060.0 848.0" fill="none" stroke="#211c1d" stroke-width="1.1" stroke-linecap="round" stroke-linejoin="round" />
<path d="M1046.0 868.0C1047.7 866.8 1052.7 863.0 1056.0 861.0C1059.3 859.0 1064.3 856.8 1066.0 856.0" fill="none" stroke="#211c1d" stroke-width="1.1" stroke-linecap="round" stroke-linejoin="round" />
<path d="M1010.0 895.0C1010.3 894.2 1011.2 891.7 1012.0 890.0C1012.8 888.3 1014.5 885.8 1015.0 885.0" fill="none" stroke="#211c1d" stroke-width="1.2" stroke-linecap="round" stroke-linejoin="round" />
<path d="M1037.0 930.0C1037.8 927.8 1039.8 921.2 1042.0 917.0C1044.2 912.8 1047.0 908.7 1050.0 905.0C1053.0 901.3 1056.3 898.3 1060.0 895.0C1063.7 891.7 1070.0 886.7 1072.0 885.0" fill="none" stroke="#211c1d" stroke-width="1.5" stroke-linecap="round" stroke-linejoin="round" />
<path d="M997.0 995.0C998.2 995.8 1001.3 998.7 1004.0 1000.0C1006.7 1001.3 1011.5 1002.5 1013.0 1003.0" fill="none" stroke="#211c1d" stroke-width="1.1" stroke-linecap="round" stroke-linejoin="round" />
<path d="M1000.0 1003.0C1001.7 1004.0 1006.3 1007.5 1010.0 1009.0C1013.7 1010.5 1020.0 1011.5 1022.0 1012.0" fill="none" stroke="#211c1d" stroke-width="1.1" stroke-linecap="round" stroke-linejoin="round" />
<path d="M1050.0 1003.0C1051.3 1002.7 1055.3 1002.2 1058.0 1001.0C1060.7 999.8 1064.7 996.8 1066.0 996.0" fill="none" stroke="#211c1d" stroke-width="1.1" stroke-linecap="round" stroke-linejoin="round" />
<path d="M1069.0 1003.0C1070.0 1002.0 1074.0 998.0 1075.0 997.0" fill="none" stroke="#211c1d" stroke-width="1.0" stroke-linecap="round" stroke-linejoin="round" />
<path d="M761.5 563.3C760.9 565.4 759.4 571.8 758.0 576.0C756.6 580.2 754.8 584.4 753.0 588.6C751.2 592.8 749.1 596.8 747.0 601.0C744.9 605.2 742.9 609.7 740.4 614.0C737.9 618.3 734.8 622.8 732.0 627.0C729.2 631.2 726.1 635.6 723.4 639.4C720.7 643.2 718.5 646.5 716.0 650.0C713.5 653.5 711.3 657.2 708.6 660.5C705.9 663.8 702.8 666.8 700.0 670.0C697.2 673.2 693.7 677.3 691.7 679.6C689.7 681.9 688.9 682.6 688.0 684.0C687.1 685.4 686.7 687.3 686.4 688.0" fill="none" stroke="#211c1d" stroke-width="2.8" stroke-linecap="round" stroke-linejoin="round" />
<path d="M791.1 582.3C790.7 584.9 789.5 592.7 788.5 598.0C787.5 603.3 786.2 608.7 784.8 614.0C783.4 619.3 781.8 624.7 780.0 630.0C778.2 635.3 776.2 640.7 774.2 645.7C772.2 650.7 770.1 655.4 768.0 660.0C765.9 664.6 764.0 668.5 761.5 673.2C759.0 677.9 755.8 683.1 753.0 688.0C750.2 692.9 747.3 698.5 744.6 702.8C741.9 707.1 739.1 710.5 737.0 714.0C734.9 717.5 733.4 721.2 731.9 724.0C730.4 726.8 728.7 728.7 728.0 731.0C727.3 733.3 727.5 735.7 727.7 738.0C727.9 740.3 728.1 742.9 729.0 745.0C729.9 747.1 731.4 749.3 733.1 750.7C734.8 752.1 737.0 753.0 739.0 753.5C741.0 754.0 743.0 754.1 745.3 753.7C747.6 753.3 750.3 752.2 753.0 751.0C755.7 749.8 758.9 748.5 761.4 746.7C763.9 744.9 766.0 742.4 768.0 740.0C770.0 737.6 772.6 733.8 773.5 732.5" fill="none" stroke="#211c1d" stroke-width="2.8" stroke-linecap="round" stroke-linejoin="round" />
<path d="M759.4 680.6C761.0 680.2 765.8 679.4 769.0 678.5C772.2 677.6 775.4 676.5 778.4 675.3C781.4 674.1 784.2 672.9 787.0 671.5C789.8 670.1 792.8 668.6 795.3 666.9C797.8 665.1 799.9 663.1 802.0 661.0C804.1 658.9 806.2 656.5 808.0 654.2C809.8 651.9 811.6 649.5 813.0 647.0C814.4 644.5 815.5 642.2 816.5 639.4C817.5 636.6 818.3 633.2 818.8 630.0C819.3 626.8 819.6 624.2 819.7 620.4C819.8 616.6 819.7 611.2 819.5 607.0C819.3 602.8 818.8 597.0 818.6 595.0" fill="none" stroke="#211c1d" stroke-width="2.8" stroke-linecap="round" stroke-linejoin="round" />
<path d="M791.1 601.3C791.6 603.2 793.3 609.1 794.0 613.0C794.7 616.9 795.1 620.8 795.3 624.6C795.5 628.4 795.4 632.5 795.0 636.0C794.6 639.5 793.5 644.1 793.2 645.7" fill="none" stroke="#211c1d" stroke-width="1.5" stroke-linecap="round" stroke-linejoin="round" />
<path d="M812.3 601.3C812.6 603.2 813.6 609.1 814.0 613.0C814.4 616.9 814.7 620.8 814.4 624.6C814.1 628.4 813.1 632.5 812.0 636.0C810.9 639.5 809.5 642.7 808.0 645.7C806.5 648.7 804.8 651.5 803.0 654.0C801.2 656.5 798.4 659.4 797.5 660.5" fill="none" stroke="#211c1d" stroke-width="1.1" stroke-linecap="round" stroke-linejoin="round" />
<path d="M782.6 548.5C782.3 550.4 781.7 556.1 781.0 560.0C780.3 563.9 779.7 566.9 778.4 571.7C777.1 576.5 775.1 583.4 773.0 589.0C770.9 594.6 767.5 601.4 765.7 605.6C763.9 609.8 763.2 611.2 762.0 614.0C760.8 616.8 758.9 621.1 758.3 622.5" fill="none" stroke="#211c1d" stroke-width="1.6" stroke-linecap="round" stroke-linejoin="round" />
<path d="M723.4 614.0C722.3 615.7 718.8 620.8 717.0 624.0C715.2 627.2 714.0 629.3 712.9 633.0C711.8 636.7 711.0 641.8 710.5 646.0C710.0 650.2 709.8 656.3 709.7 658.4" fill="none" stroke="#211c1d" stroke-width="1.6" stroke-linecap="round" stroke-linejoin="round" />
<path d="M698.0 631.0C697.7 632.3 696.6 636.2 696.3 639.0C696.0 641.8 696.0 646.3 696.0 647.8" fill="none" stroke="#211c1d" stroke-width="1.1" stroke-linecap="round" stroke-linejoin="round" />
<path d="M871.5 618.2C871.4 619.7 871.4 624.2 871.0 627.0C870.6 629.8 870.0 632.4 869.3 635.2C868.5 638.0 867.5 641.2 866.5 644.0C865.5 646.8 863.6 650.7 863.0 652.0" fill="none" stroke="#211c1d" stroke-width="1.1" stroke-linecap="round" stroke-linejoin="round" />
<path d="M875.7 637.3C875.6 638.2 875.4 641.2 875.0 643.0C874.6 644.8 873.8 647.0 873.6 647.8" fill="none" stroke="#211c1d" stroke-width="1.0" stroke-linecap="round" stroke-linejoin="round" />
<path d="M866.0 632.0C865.7 633.5 865.0 638.2 864.0 641.0C863.0 643.8 860.7 647.7 860.0 649.0" fill="none" stroke="#211c1d" stroke-width="1.0" stroke-linecap="round" stroke-linejoin="round" />
<path d="M728.7 671.1C727.8 672.1 724.9 674.9 723.0 677.0C721.1 679.1 718.1 682.7 717.1 683.8" fill="none" stroke="#211c1d" stroke-width="1.1" stroke-linecap="round" stroke-linejoin="round" />
<path d="M710.8 694.4C710.0 695.5 707.4 698.5 706.0 701.0C704.6 703.5 703.2 706.5 702.3 709.2C701.4 711.9 700.9 714.5 700.5 717.0C700.1 719.5 699.8 721.2 700.2 724.0C700.6 726.8 701.6 730.8 703.0 734.0C704.4 737.2 707.1 740.0 708.6 743.0C710.1 746.0 710.9 749.2 712.0 752.0C713.1 754.8 714.5 758.7 715.0 760.0" fill="none" stroke="#211c1d" stroke-width="1.6" stroke-linecap="round" stroke-linejoin="round" />
<path d="M765.7 697.5C764.2 698.2 759.8 700.0 757.0 702.0C754.2 704.0 751.3 706.7 748.8 709.2C746.3 711.7 743.8 714.2 742.0 717.0C740.2 719.8 738.9 723.2 738.2 726.0C737.5 728.8 737.6 731.5 738.0 734.0C738.4 736.5 739.1 739.1 740.4 740.9C741.7 742.7 743.9 744.1 746.0 745.0C748.1 745.9 750.8 746.6 753.0 746.2C755.2 745.8 757.7 744.1 759.5 742.5C761.3 740.9 762.9 738.6 763.6 736.7C764.4 734.8 764.4 732.8 764.0 731.0C763.6 729.2 761.9 726.8 761.5 726.0" fill="none" stroke="#211c1d" stroke-width="1.4" stroke-linecap="round" stroke-linejoin="round" />
<path d="M765.5 699.2C764.1 700.0 759.7 702.1 757.0 704.0C754.3 705.9 751.5 708.0 749.3 710.3C747.0 712.6 745.0 715.3 743.5 718.0C742.0 720.7 740.8 725.1 740.2 726.5" fill="none" stroke="#211c1d" stroke-width="1.1" stroke-linecap="round" stroke-linejoin="round" />
<path d="M652.3 770.0C653.6 769.1 657.3 767.1 660.4 764.8C663.5 762.5 667.6 759.0 671.0 756.0C674.4 753.0 677.8 749.5 680.6 746.7C683.4 744.0 685.6 741.9 688.0 739.5C690.4 737.1 693.6 733.7 694.7 732.5" fill="none" stroke="#211c1d" stroke-width="2.8" stroke-linecap="round" stroke-linejoin="round" />
<path d="M697.8 731.5C696.8 733.4 694.0 738.8 692.0 743.0C690.0 747.2 687.8 752.3 686.0 757.0C684.2 761.7 682.7 765.5 681.5 771.0C680.3 776.5 679.1 786.8 678.6 790.0" fill="none" stroke="#211c1d" stroke-width="2.6" stroke-linecap="round" stroke-linejoin="round" />
<path d="M699.8 726.5C699.8 727.8 699.3 731.6 699.5 734.0C699.7 736.4 700.2 738.3 700.8 740.6C701.4 742.9 702.0 745.6 703.0 748.0C704.0 750.4 705.2 752.6 706.9 754.7C708.6 756.8 710.6 758.8 713.0 760.5C715.4 762.2 718.3 763.5 721.0 764.8C723.7 766.0 726.3 767.1 729.0 768.0C731.7 768.9 734.6 769.6 737.2 770.0C739.8 770.4 742.1 770.5 744.5 770.3C746.9 770.1 748.9 769.7 751.3 768.9C753.7 768.1 756.6 766.9 759.0 765.5C761.4 764.1 763.5 762.5 765.5 760.8C767.5 759.0 769.3 757.0 771.0 755.0C772.7 753.0 774.4 750.9 775.6 748.7C776.8 746.5 777.6 744.4 778.3 742.0C779.0 739.6 779.4 735.8 779.6 734.5" fill="none" stroke="#211c1d" stroke-width="2.8" stroke-linecap="round" stroke-linejoin="round" />
<path d="M719.0 768.9C717.8 769.3 714.0 770.5 712.0 771.5C710.0 772.5 708.6 773.4 706.9 775.0C705.2 776.6 703.4 779.0 702.0 781.0C700.6 783.0 699.7 785.0 698.8 787.0C697.9 789.0 697.3 791.0 696.8 793.0C696.3 795.0 696.0 798.2 695.8 799.2" fill="none" stroke="#211c1d" stroke-width="1.1" stroke-linecap="round" stroke-linejoin="round" />
<path d="M713.0 769.0C712.2 769.8 709.5 772.0 708.0 774.0C706.5 776.0 704.7 779.8 704.0 781.0" fill="none" stroke="#211c1d" stroke-width="1.1" stroke-linecap="round" stroke-linejoin="round" />
<path d="M751.3 775.0C752.1 775.8 754.3 778.7 756.0 780.0C757.7 781.3 759.2 782.2 761.4 783.0C763.6 783.8 766.3 784.7 769.0 785.0C771.7 785.3 775.3 784.5 777.6 785.0C779.9 785.5 781.3 786.7 783.0 788.0C784.7 789.3 786.9 792.2 787.7 793.0" fill="none" stroke="#211c1d" stroke-width="1.3" stroke-linecap="round" stroke-linejoin="round" />
<path d="M745.3 799.2C746.2 799.9 749.0 802.5 751.0 803.5C753.0 804.5 756.3 805.0 757.4 805.3" fill="none" stroke="#211c1d" stroke-width="1.1" stroke-linecap="round" stroke-linejoin="round" />
<path d="M708.9 698.2C708.2 699.3 706.0 702.6 705.0 705.0C704.0 707.4 703.2 711.1 702.8 712.3" fill="none" stroke="#211c1d" stroke-width="1.0" stroke-linecap="round" stroke-linejoin="round" />
<path d="M646.3 791.0C645.9 792.5 644.5 797.0 644.0 800.0C643.5 803.0 643.3 807.8 643.2 809.3" fill="none" stroke="#211c1d" stroke-width="1.0" stroke-linecap="round" stroke-linejoin="round" />
<path d="M658.4 803.2C658.1 804.5 657.1 808.3 656.8 811.0C656.5 813.7 656.5 818.0 656.4 819.4" fill="none" stroke="#211c1d" stroke-width="1.0" stroke-linecap="round" stroke-linejoin="round" />
<path d="M652.3 755.8C653.4 756.2 656.6 757.8 659.0 758.3C661.4 758.8 664.3 759.1 666.5 758.8C668.7 758.5 670.3 757.5 672.0 756.5C673.7 755.5 675.8 753.3 676.6 752.7" fill="none" stroke="#211c1d" stroke-width="1.1" stroke-linecap="round" stroke-linejoin="round" />
<path d="M696.8 861.8C695.5 862.2 691.7 863.7 689.0 864.0C686.3 864.3 682.0 863.8 680.6 863.8" fill="none" stroke="#211c1d" stroke-width="1.1" stroke-linecap="round" stroke-linejoin="round" />
<path d="M700.8 807.3C701.0 809.4 701.3 815.6 702.0 820.0C702.7 824.4 703.6 829.2 704.8 833.5C706.0 837.8 707.3 842.0 709.0 846.0C710.7 850.0 714.0 855.8 715.0 857.8" fill="none" stroke="#211c1d" stroke-width="1.1" stroke-linecap="round" stroke-linejoin="round" />
<path d="M733.1 855.8C734.1 856.8 737.0 860.3 739.0 862.0C741.0 863.7 744.2 865.2 745.3 865.9" fill="none" stroke="#211c1d" stroke-width="1.1" stroke-linecap="round" stroke-linejoin="round" />
<path d="M694.0 812.0C694.2 814.3 694.7 821.3 695.5 826.0C696.3 830.7 698.4 837.7 699.0 840.0" fill="none" stroke="#211c1d" stroke-width="1.1" stroke-linecap="round" stroke-linejoin="round" />
<path d="M772.0 800.0C773.0 800.5 776.2 801.7 778.0 803.0C779.8 804.3 782.2 807.2 783.0 808.0" fill="none" stroke="#211c1d" stroke-width="1.0" stroke-linecap="round" stroke-linejoin="round" />
<path d="M756.0 806.0C757.0 805.8 760.0 804.8 762.0 804.6C764.0 804.4 765.5 804.3 768.0 805.0C770.5 805.7 775.5 808.3 777.0 809.0" fill="none" stroke="#211c1d" stroke-width="1.6" stroke-linecap="round" stroke-linejoin="round" />
<path d="M776.0 470.0C776.2 473.3 777.2 483.3 777.0 490.0C776.8 496.7 776.3 503.3 775.0 510.0C773.7 516.7 770.0 526.7 769.0 530.0" fill="none" stroke="#211c1d" stroke-width="1.0" stroke-linecap="round" stroke-linejoin="round" />
<path d="M1022.0 703.0C1022.7 705.2 1024.2 712.0 1026.0 716.0C1027.8 720.0 1030.5 724.2 1033.0 727.0C1035.5 729.8 1039.7 732.0 1041.0 733.0C1039.5 731.2 1034.5 725.7 1032.0 722.0C1029.5 718.3 1027.7 714.2 1026.0 711.0C1024.3 707.8 1022.7 704.3 1022.0 703.0Z" fill="#ef9a86" stroke="#211c1d" stroke-width="0.8" stroke-linecap="round" stroke-linejoin="round" />
<path d="M997.5 93.5C996.5 94.2 993.7 94.9 991.5 97.5C989.3 100.1 986.9 105.1 984.5 109.0C982.1 112.9 978.9 118.0 977.0 121.0C975.1 124.0 973.7 126.0 973.0 127.0C973.4 127.4 975.2 128.8 975.6 129.2C975.0 130.2 973.3 132.9 972.0 135.0C970.7 137.1 969.6 139.2 968.0 142.0C966.4 144.8 964.0 149.1 962.5 151.5C961.0 153.9 959.6 155.7 959.0 156.5C959.4 156.8 961.2 158.2 961.6 158.6C961.0 159.7 959.2 162.6 958.0 165.0C956.8 167.4 955.9 169.9 954.5 173.0C953.1 176.1 951.0 180.9 949.8 183.5C948.5 186.1 947.5 187.7 947.0 188.5C947.4 188.8 949.2 190.2 949.6 190.6C949.1 191.7 947.5 194.4 946.5 197.0C945.5 199.6 944.6 202.3 943.5 206.0C942.4 209.7 940.7 215.7 939.6 219.0C938.5 222.3 937.4 224.8 937.0 226.0C937.4 226.3 939.2 227.7 939.6 228.0C939.1 229.2 937.6 232.2 936.5 235.0C935.4 237.8 934.3 241.3 932.8 245.0C931.3 248.7 929.0 254.2 927.5 257.0C926.0 259.8 924.6 261.2 924.0 262.0C924.4 262.3 926.2 263.7 926.6 264.0C926.1 265.0 924.7 267.5 923.5 270.0C922.3 272.5 921.2 275.0 919.5 279.0C917.8 283.0 914.1 291.5 913.0 294.0C915.8 294.8 922.2 296.1 930.0 298.5C937.8 300.9 951.7 305.5 960.0 308.5C968.3 311.5 975.2 314.4 980.0 316.5C984.8 318.6 987.1 320.2 988.5 321.0C989.2 318.8 991.2 312.7 992.5 308.0C993.8 303.3 995.4 297.2 996.5 293.0C997.6 288.8 998.3 286.3 999.0 283.0C999.7 279.7 1000.2 274.7 1000.5 273.0C1001.2 272.5 1003.8 271.5 1004.5 270.0C1005.2 268.5 1005.4 265.9 1005.0 264.0C1004.6 262.1 1002.5 259.4 1002.0 258.5C1002.2 256.8 1002.8 251.2 1003.0 248.0C1003.2 244.8 1003.4 240.5 1003.5 239.0C1004.2 238.5 1006.8 237.5 1007.5 236.0C1008.2 234.5 1008.5 231.9 1008.0 230.0C1007.5 228.1 1005.1 225.4 1004.5 224.5C1004.6 222.6 1004.9 216.6 1005.0 213.0C1005.1 209.4 1005.0 204.7 1005.0 203.0C1005.7 202.5 1008.2 201.5 1009.0 200.0C1009.8 198.5 1010.1 195.9 1009.5 194.0C1008.9 192.1 1006.2 189.4 1005.5 188.5C1005.7 186.2 1006.3 179.2 1006.5 175.0C1006.7 170.8 1006.5 165.0 1006.5 163.0C1007.2 162.3 1009.8 160.9 1010.5 159.0C1011.2 157.1 1011.7 153.9 1011.0 151.5C1010.3 149.1 1007.2 145.7 1006.5 144.5C1006.3 142.1 1005.7 135.8 1005.5 130.0C1005.3 124.2 1005.6 115.0 1005.5 110.0C1005.4 105.0 1005.5 102.5 1005.0 100.0C1004.5 97.5 1003.8 96.1 1002.5 95.0C1001.2 93.9 998.3 93.8 997.5 93.5Z" fill="#7f4558" stroke="#211c1d" stroke-width="3.6" stroke-linecap="round" stroke-linejoin="round" />
<path d="M974 128C981 142 996 152 1006.5 145" fill="none" stroke="#211c1d" stroke-width="2.2" stroke-linecap="round" stroke-linejoin="round" />
<path d="M975 135C982 148 995 157 1000.5 150.5" fill="none" stroke="#211c1d" stroke-width="0.9" stroke-linecap="round" stroke-linejoin="round" />
<path d="M960 157C970 177 992 192 1005.5 189" fill="none" stroke="#211c1d" stroke-width="2.2" stroke-linecap="round" stroke-linejoin="round" />
<path d="M961 164C971 183 991 197 999.5 194.5" fill="none" stroke="#211c1d" stroke-width="0.9" stroke-linecap="round" stroke-linejoin="round" />
<path d="M948 189C959 210 988 226 1004.5 225" fill="none" stroke="#211c1d" stroke-width="2.2" stroke-linecap="round" stroke-linejoin="round" />
<path d="M949 196C960 216 987 231 998.5 230.5" fill="none" stroke="#211c1d" stroke-width="0.9" stroke-linecap="round" stroke-linejoin="round" />
<path d="M938 226.5C950 245 983 260 1002 259" fill="none" stroke="#211c1d" stroke-width="2.2" stroke-linecap="round" stroke-linejoin="round" />
<path d="M939 233.5C951 251 982 265 996 264.5" fill="none" stroke="#211c1d" stroke-width="0.9" stroke-linecap="round" stroke-linejoin="round" />
<path d="M925 262C939 279 977 294 997.5 293.5" fill="none" stroke="#211c1d" stroke-width="2.2" stroke-linecap="round" stroke-linejoin="round" />
<path d="M926 269C940 285 976 299 991.5 299.0" fill="none" stroke="#211c1d" stroke-width="0.9" stroke-linecap="round" stroke-linejoin="round" />
<path d="M940.0 301.0C941.5 300.2 946.2 297.0 949.0 296.0C951.8 295.0 955.7 295.2 957.0 295.0" fill="none" stroke="#211c1d" stroke-width="1.0" stroke-linecap="round" stroke-linejoin="round" />
<path d="M955.0 306.0C956.8 305.2 962.5 302.0 966.0 301.0C969.5 300.0 974.3 300.2 976.0 300.0" fill="none" stroke="#211c1d" stroke-width="1.0" stroke-linecap="round" stroke-linejoin="round" />
<rect x="640.5" y="253.5" width="631" height="766" fill="none" stroke="#2a2a2a" stroke-width="1"/>
</svg>
<div class="r" style="left:0px;top:0px;width:1920px;height:23px;background:#535353;"></div>
<div class="r" style="left:0px;top:23px;width:1920px;height:1px;background:#3c3c3c;"></div>
<div class="r" style="left:0px;top:24px;width:1920px;height:32px;background:#535353;"></div>
<div class="r" style="left:0px;top:56px;width:1920px;height:1px;background:#3a3a3a;"></div>
<div class="r" style="left:0px;top:57px;width:1920px;height:25.8px;background:#424242;"></div>
<div class="r" style="left:6px;top:1px;width:15px;height:15px;background:#2e0a00;border-radius:3px;border:0.5px solid #4a1a00"></div>
<span class="t" style="left:8.5px;top:2.6px;font-size:10px;color:#ff9a00;transform:scaleX(1.0000);font-weight:bold;">Ai</span>
<svg class="r" style="left:33px;top:0px;" width="20" height="18" viewBox="0 0 20 18"><path d="M1.5 9.5 L10 1.8 L18.5 9.5 L16.5 9.5 L16.5 17 L12 17 L12 11.5 L8 11.5 L8 17 L3.5 17 L3.5 9.5 Z" fill="#d0d0d0"/></svg>
<div class="r" style="left:64px;top:2px;width:1px;height:16px;background:#484848;"></div>
<span class="t" style="left:80.3px;top:0.2px;font-size:13px;color:#dedede;transform:scaleX(0.8115);">File</span>
<span class="t" style="left:111.0px;top:0.2px;font-size:13px;color:#dedede;transform:scaleX(0.8794);">Edit</span>
<span class="t" style="left:144.0px;top:0.2px;font-size:13px;color:#dedede;transform:scaleX(0.8783);">Object</span>
<span class="t" style="left:191.0px;top:0.2px;font-size:13px;color:#dedede;transform:scaleX(0.8515);">Type</span>
<span class="t" style="left:228.3px;top:0.2px;font-size:13px;color:#dedede;transform:scaleX(0.8414);">Select</span>
<span class="t" style="left:272.0px;top:0.2px;font-size:13px;color:#dedede;transform:scaleX(0.8697);">Effect</span>
<span class="t" style="left:314.0px;top:0.2px;font-size:13px;color:#dedede;transform:scaleX(0.8696);">View</span>
<span class="t" style="left:351.0px;top:0.2px;font-size:13px;color:#dedede;transform:scaleX(0.9148);">Window</span>
<span class="t" style="left:405.3px;top:0.2px;font-size:13px;color:#dedede;transform:scaleX(0.8864);">Help</span>
<div class="r" style="left:440px;top:2px;width:1px;height:16px;background:#484848;"></div>
<svg class="r" style="left:451px;top:2px;" width="20" height="12" viewBox="0 0 20 12"><rect x="0.5" y="0.5" width="6" height="10" fill="#cfcfcf"/><rect x="8" y="0.5" width="9.5" height="4.2" fill="#cfcfcf"/><rect x="8" y="6.3" width="9.5" height="4.2" fill="#cfcfcf"/></svg>
<svg class="r" style="left:473px;top:1.5px;" width="12" height="12" viewBox="0 0 12 12"><path d="M2.8 4.4 L6 7.6 L9.2 4.4" fill="none" stroke="#d8d8d8" stroke-width="1.5"/></svg>
<svg class="r" style="left:1603px;top:0px;" width="22" height="19" viewBox="0 0 22 19"><circle cx="9.5" cy="9" r="8.2" fill="#d4d4d4"/><circle cx="9.5" cy="6.5" r="3.6" fill="#535353"/><path d="M3.2 15 Q4 10.5 9.5 10.5 Q15 10.5 15.8 15 Q9.5 19 3.2 15Z" fill="#535353"/><rect x="12" y="11" width="9" height="8" fill="#535353"/><path d="M16.5 11.5 V18 M13.2 14.8 H19.8" stroke="#d4d4d4" stroke-width="1.6"/></svg>
<div class="r" style="left:1633px;top:2px;width:1px;height:15px;background:#484848;"></div>
<svg class="r" style="left:1645px;top:3px;" width="18" height="14" viewBox="0 0 18 14"><rect x="0.8" y="0.8" width="16" height="11.6" fill="none" stroke="#d0d0d0" stroke-width="1.4"/><rect x="2.6" y="2.8" width="3.4" height="7.6" fill="#d0d0d0"/></svg>
<svg class="r" style="left:1675px;top:1px;" width="16" height="18" viewBox="0 0 16 18"><path d="M8 1.2 C4.6 1.2 2.6 3.6 2.6 6.2 C2.6 8.4 4 9.6 5 11 C5.5 11.8 5.6 12.5 5.6 13.3 H10.4 C10.4 12.5 10.5 11.8 11 11 C12 9.6 13.4 8.4 13.4 6.2 C13.4 3.6 11.4 1.2 8 1.2Z" fill="none" stroke="#d0d0d0" stroke-width="1.3"/><rect x="5.8" y="14.2" width="4.4" height="2.6" rx="1" fill="#d0d0d0"/></svg>
<div class="r" style="left:1700px;top:0px;width:131px;height:17px;background:#454545;border:1px solid #3a3a3a;box-sizing:border-box"></div>
<svg class="r" style="left:1703px;top:2px;" width="24" height="14" viewBox="0 0 24 14"><circle cx="5.3" cy="5.6" r="3.7" fill="none" stroke="#d8d8d8" stroke-width="1.5"/><path d="M8 8.4 L11.2 11.8" stroke="#d8d8d8" stroke-width="1.7"/><path d="M13.2 5.5 L15.8 8 L18.4 5.5" stroke="#d8d8d8" stroke-width="1.2" fill="none"/></svg>
<span class="t" style="left:1724.0px;top:2.9px;font-size:11px;color:#8a8a8a;transform:scaleX(0.9072);">Search Adobe Help</span>
<div class="r" style="left:1838px;top:0px;width:82px;height:13px;background:#535353;border:1px solid #606060;border-top:none;box-sizing:border-box;border-radius:0 0 3px 3px"></div>
<div class="r" style="left:1864px;top:0px;width:1px;height:12px;background:#606060;"></div>
<div class="r" style="left:1891px;top:0px;width:1px;height:12px;background:#606060;"></div>
<div class="r" style="left:1846px;top:5px;width:10px;height:2.5px;background:#d0d0d0;"></div>
<svg class="r" style="left:1870px;top:0px;" width="16" height="11" viewBox="0 0 16 11"><rect x="1.2" y="3" width="7.4" height="6" fill="none" stroke="#d0d0d0" stroke-width="1.6"/><path d="M5 3 V0.8 H13 V6.6 H9" fill="none" stroke="#d0d0d0" stroke-width="1.6"/></svg>
<svg class="r" style="left:1898px;top:0px;" width="14" height="10" viewBox="0 0 14 10"><path d="M1.5 -1 L11 8.5 M11 -1 L1.5 8.5" stroke="#d8d8d8" stroke-width="1.9"/></svg>
<svg class="r" style="left:2px;top:30px;" width="5" height="22" viewBox="0 0 5 22"><g fill="#444"><rect x="1" y="0" width="3" height="1.2"/><rect x="1" y="3" width="3" height="1.2"/><rect x="1" y="6" width="3" height="1.2"/><rect x="1" y="9" width="3" height="1.2"/><rect x="1" y="12" width="3" height="1.2"/><rect x="1" y="15" width="3" height="1.2"/><rect x="1" y="18" width="3" height="1.2"/></g></svg>
<span class="t" style="left:10.7px;top:34.4px;font-size:11px;color:#c4c4c4;transform:scaleX(0.8273);">No Selection</span>
<div class="r" style="left:79px;top:30px;width:1px;height:21px;background:#484848;"></div>
<div class="r" style="left:85.5px;top:31px;width:18px;height:18px;background:#ffffff;border:1px solid #3c3c3c;box-sizing:border-box"></div>
<svg class="r" style="left:106.5px;top:34.5px;" width="12" height="12" viewBox="0 0 12 12"><path d="M2.8 4.4 L6 7.6 L9.2 4.4" fill="none" stroke="#d8d8d8" stroke-width="1.5"/></svg>
<div class="r" style="left:127px;top:31px;width:18px;height:18px;background:#1c1c1c;border:1px solid #9a9a9a;box-sizing:border-box"></div>
<div class="r" style="left:132px;top:36px;width:8px;height:8px;background:#d8d8d8;"></div>
<div class="r" style="left:133.5px;top:37.5px;width:5px;height:5px;background:#1c1c1c;"></div>
<div class="r" style="left:134.5px;top:38.5px;width:3px;height:3px;background:#bdbdbd;"></div>
<svg class="r" style="left:147.5px;top:34.5px;" width="12" height="12" viewBox="0 0 12 12"><path d="M2.8 4.4 L6 7.6 L9.2 4.4" fill="none" stroke="#d8d8d8" stroke-width="1.5"/></svg>
<span class="t" style="left:173.7px;top:33.9px;font-size:11px;color:#d6d6d6;transform:scaleX(0.8494);">Stroke:</span>
<div class="r" style="left:174px;top:47.5px;width:29px;height:1px;background:transparent;border-bottom:1px dotted #d0d0d0"></div>
<svg class="r" style="left:211px;top:31px;" width="12" height="19" viewBox="0 0 12 19"><path d="M2.5 6.5 L6 3 L9.5 6.5 M2.5 12.5 L6 16 L9.5 12.5" stroke="#d8d8d8" stroke-width="1.4" fill="none"/></svg>
<div class="r" style="left:226px;top:31px;width:41px;height:18px;background:#454545;border:1px solid #3e3e3e;box-sizing:border-box"></div>
<span class="t" style="left:229.3px;top:34.4px;font-size:11px;color:#d8d8d8;transform:scaleX(0.9102);">1 pt</span>
<svg class="r" style="left:269.5px;top:34.5px;" width="12" height="12" viewBox="0 0 12 12"><path d="M2.8 4.4 L6 7.6 L9.2 4.4" fill="none" stroke="#d8d8d8" stroke-width="1.5"/></svg>
<div class="r" style="left:291px;top:31px;width:84px;height:18px;background:#e4e4e4;"></div>
<div class="r" style="left:296.5px;top:40.3px;width:38px;height:2.2px;background:#111;"></div>
<span class="t" style="left:338.3px;top:35.4px;font-size:11px;color:#1a1a1a;transform:scaleX(0.8674);">Uniform</span>
<svg class="r" style="left:378px;top:34.5px;" width="12" height="12" viewBox="0 0 12 12"><path d="M2.8 4.4 L6 7.6 L9.2 4.4" fill="none" stroke="#d8d8d8" stroke-width="1.5"/></svg>
<div class="r" style="left:398px;top:31px;width:81px;height:18px;background:#e4e4e4;"></div>
<div class="r" style="left:406.5px;top:40px;width:1.2px;height:1.2px;background:#444;"></div>
<span class="t" style="left:420.7px;top:34.4px;font-size:11px;color:#1a1a1a;transform:scaleX(0.8668);">1 pt. Round</span>
<svg class="r" style="left:482px;top:34.5px;" width="12" height="12" viewBox="0 0 12 12"><path d="M2.8 4.4 L6 7.6 L9.2 4.4" fill="none" stroke="#d8d8d8" stroke-width="1.5"/></svg>
<span class="t" style="left:503.3px;top:33.9px;font-size:11px;color:#d6d6d6;transform:scaleX(0.8675);">Opacity:</span>
<div class="r" style="left:503.5px;top:47.5px;width:35px;height:1px;background:transparent;border-bottom:1px dotted #d0d0d0"></div>
<div class="r" style="left:543px;top:31px;width:48px;height:18px;background:#454545;border:1px solid #3e3e3e;box-sizing:border-box"></div>
<span class="t" style="left:546.7px;top:34.4px;font-size:11px;color:#d8d8d8;transform:scaleX(0.8531);">100%</span>
<div class="r" style="left:591px;top:31px;width:17px;height:18px;background:#535353;border:1px solid #484848;box-sizing:border-box"></div>
<svg class="r" style="left:593px;top:34.5px;" width="12" height="12" viewBox="0 0 12 12"><path d="M4.3 2.6 L7.7 6 L4.3 9.4" fill="none" stroke="#d8d8d8" stroke-width="1.5"/></svg>
<span class="t" style="left:613.3px;top:33.9px;font-size:11px;color:#c4c4c4;transform:scaleX(0.8506);">Style:</span>
<div class="r" style="left:642.5px;top:31px;width:18px;height:18px;background:#e6e6e6;"></div>
<svg class="r" style="left:663.5px;top:34.5px;" width="12" height="12" viewBox="0 0 12 12"><path d="M2.8 4.4 L6 7.6 L9.2 4.4" fill="none" stroke="#d8d8d8" stroke-width="1.5"/></svg>
<div class="r" style="left:684px;top:30px;width:1px;height:21px;background:#484848;"></div>
<div class="r" style="left:689.5px;top:31.5px;width:87px;height:17.5px;background:#535353;border:1px solid #7a7a7a;box-sizing:border-box;border-radius:2px"></div>
<span class="t" style="left:699.0px;top:34.4px;font-size:11px;color:#e2e2e2;transform:scaleX(0.8458);">Document Setup</span>
<div class="r" style="left:781.5px;top:31.5px;width:67px;height:17.5px;background:#535353;border:1px solid #7a7a7a;box-sizing:border-box;border-radius:2px"></div>
<span class="t" style="left:790.7px;top:34.4px;font-size:11px;color:#e2e2e2;transform:scaleX(0.8194);">Preferences</span>
<svg class="r" style="left:858px;top:32px;" width="18" height="18" viewBox="0 0 18 18"><rect x="1.5" y="4.5" width="4" height="4" fill="none" stroke="#cfcfcf" stroke-width="1"/><rect x="10.5" y="1.5" width="4" height="4" fill="none" stroke="#cfcfcf" stroke-width="1"/><path d="M5.5 6 L10.5 4" stroke="#cfcfcf" stroke-width="1"/><path d="M7.5 5 L7.5 16 L10.2 13.2 L14.8 13.2 Z" fill="#cfcfcf"/></svg>
<svg class="r" style="left:876.5px;top:34px;" width="12" height="12" viewBox="0 0 12 12"><path d="M3.0 4.5 L6 7.5 L9.0 4.5" fill="none" stroke="#d8d8d8" stroke-width="1.5"/></svg>
<svg class="r" style="left:1822px;top:34px;" width="14" height="13" viewBox="0 0 14 13"><g fill="#6a6a6a"><rect x="1" y="1" width="4.2" height="4.2"/><rect x="8" y="1" width="4.2" height="4.2"/><rect x="1" y="7.6" width="4.2" height="4.2"/><rect x="8" y="7.6" width="4.2" height="4.2"/></g></svg>
<svg class="r" style="left:1846px;top:32px;" width="18" height="16" viewBox="0 0 18 16"><rect x="1" y="0.5" width="3.4" height="14.5" fill="#d8d8d8"/><path d="M4.4 5 H10.5 A3 3 0 0 1 10.5 11 H4.4" fill="none" stroke="#d8d8d8" stroke-width="1.9"/><path d="M1 4.8 H4.4 M1 10.6 H4.4" stroke="#535353" stroke-width="1"/></svg>
<svg class="r" style="left:1865px;top:33.5px;" width="12" height="12" viewBox="0 0 12 12"><path d="M3.2 4.6 L6 7.4 L8.8 4.6" fill="none" stroke="#7a7a7a" stroke-width="1.1"/></svg>
<svg class="r" style="left:1892px;top:35px;" width="14" height="11" viewBox="0 0 14 11"><g fill="#d4d4d4"><rect x="0" y="0.6" width="2" height="1.8"/><rect x="3.4" y="0.6" width="9" height="1.8"/><rect x="0" y="4.4" width="2" height="1.8"/><rect x="3.4" y="4.4" width="9" height="1.8"/><rect x="0" y="8.2" width="2" height="1.8"/><rect x="3.4" y="8.2" width="9" height="1.8"/></g></svg>
<div class="r" style="left:36px;top:57px;width:257px;height:26px;background:#535353;"></div>
<span class="t" style="left:44.3px;top:63.4px;font-size:11px;color:#f2f2f2;transform:scaleX(0.9618);font-weight:bold;">Devilish_onefolder.ai* @ 64 % (RGB/Preview)</span>
<svg class="r" style="left:278px;top:64px;" width="11" height="11" viewBox="0 0 11 11"><path d="M2 2 L8.4 8.4 M8.4 2 L2 8.4" stroke="#e8e8e8" stroke-width="1.5"/></svg>
<div class="r" style="left:0px;top:57px;width:34px;height:983px;background:#535353;"></div>
<div class="r" style="left:34px;top:57px;width:2px;height:983px;background:#464646;"></div>
<div class="r" style="left:0px;top:57px;width:36px;height:10px;background:#424242;"></div>
<svg class="r" style="left:2px;top:58px;" width="10" height="8" viewBox="0 0 10 8"><path d="M1.5 1.5 L4 4 L1.5 6.5 M5 1.5 L7.5 4 L5 6.5" stroke="#cfcfcf" stroke-width="1.1" fill="none"/></svg>
<svg class="r" style="left:6px;top:70px;" width="19" height="5" viewBox="0 0 19 5"><g fill="#454545"><rect x="0" y="1" width="2.6" height="3"/><rect x="3.6" y="1" width="2.6" height="3"/><rect x="7.2" y="1" width="2.6" height="3"/><rect x="10.8" y="1" width="2.6" height="3"/><rect x="14.4" y="1" width="2.6" height="3"/></g></svg>
<svg class="r" style="left:3.3px;top:85.0px" width="24" height="24" viewBox="0 0 24 24"><path d="M7.2 4.4 L7.2 20.4 L11 16.6 L18.2 15 Z" fill="none" stroke="#d2d2d2" stroke-width="1.3" stroke-linejoin="miter"/></svg>
<div class="r" style="left:2px;top:109.8px;width:25.6px;height:20px;background:#2d2d2d;border-radius:2px"></div>
<svg class="r" style="left:3.3px;top:107.7px" width="24" height="24" viewBox="0 0 24 24"><path d="M7.2 5 L7.2 21 L11 17.4 L18.4 16 Z" fill="#d2d2d2"/><path d="M21.4 21 h3 v-3z" fill="#d2d2d2" transform="translate(-1.2,-1.4)"/></svg>
<svg class="r" style="left:3.3px;top:130.0px" width="24" height="24" viewBox="0 0 24 24"><g transform="translate(1.5,2.5)"><path d="M3 17.5 L5.2 9.6 L11 5.2 L15.6 9.8 L11.2 15.6 Z" fill="#d2d2d2"/><path d="M3.4 17.2 L8.8 11.8" stroke="#535353" stroke-width="1"/><circle cx="9.2" cy="11.4" r="1.2" fill="#535353"/><path d="M12.2 4 L14.6 1.8 L19 6.2 L16.8 8.6 Z" fill="#d2d2d2"/></g><path d="M20.6 22.4 h3 v-3z" fill="#d2d2d2"/></svg>
<svg class="r" style="left:3.3px;top:153.0px" width="24" height="24" viewBox="0 0 24 24"><g transform="translate(3.5,2)"><path d="M3 17.5 L5.2 9.6 L11 5.2 L15.6 9.8 L11.2 15.6 Z" fill="#d2d2d2"/><path d="M3.4 17.2 L8.8 11.8" stroke="#535353" stroke-width="1"/><circle cx="9.2" cy="11.4" r="1.2" fill="#535353"/><path d="M12.2 4 L14.6 1.8 L19 6.2 L16.8 8.6 Z" fill="#d2d2d2"/></g><path d="M5.4 4.6 C8.4 6.6 3.4 10.6 3 14 C2.8 17 5 18.6 7 17.4" fill="none" stroke="#d2d2d2" stroke-width="1.2"/></svg>
<svg class="r" style="left:3.3px;top:175.0px" width="24" height="24" viewBox="0 0 24 24"><rect x="4.6" y="5.4" width="14.6" height="13" rx="1" fill="#6c6c6c" stroke="#d2d2d2" stroke-width="1.3"/><path d="M20.6 22.4 h3 v-3z" fill="#d2d2d2"/></svg>
<svg class="r" style="left:3.3px;top:198.0px" width="24" height="24" viewBox="0 0 24 24"><path d="M4 19.6 L5.2 15 L14.2 6 L17.8 9.6 L8.8 18.6 Z" fill="#d2d2d2"/><path d="M15.4 4.8 L17 3.2 L20.6 6.8 L19 8.4 Z" fill="#d2d2d2"/><circle cx="6.2" cy="17.4" r="0.9" fill="#535353"/><path d="M20.6 22.4 h3 v-3z" fill="#d2d2d2"/></svg>
<span class="t" style="left:7.2px;top:221.5px;font-size:20px;color:#d2d2d2;font-family:'Liberation Serif',serif;font-weight:bold;transform:scaleX(1.05)">T</span>
<svg class="r" style="left:3.3px;top:220.0px" width="24" height="24" viewBox="0 0 24 24"><path d="M20.6 22.4 h3 v-3z" fill="#d2d2d2"/></svg>
<svg class="r" style="left:3.3px;top:243.0px" width="24" height="24" viewBox="0 0 24 24"><path d="M6.2 8 A7 7 0 0 1 18.6 12" fill="none" stroke="#d2d2d2" stroke-width="1.5"/><path d="M3.4 4.8 L4.2 10.4 L9.4 8.6 Z" fill="#d2d2d2"/><path d="M18.6 12.6 A7 7 0 0 1 5 13.6" fill="none" stroke="#d2d2d2" stroke-width="1.3" stroke-dasharray="1.3 1.7"/><path d="M20.6 22.4 h3 v-3z" fill="#d2d2d2"/></svg>
<svg class="r" style="left:3.3px;top:265.4px" width="24" height="24" viewBox="0 0 24 24"><path d="M4 14.4 L13.4 5 L20 9.2 L10.6 18.6 Z" fill="#d2d2d2"/><path d="M3.4 15.2 L9.8 19.4 L7.4 21.4 L2 17.6 Z" fill="#d2d2d2"/><path d="M20.6 22.4 h3 v-3z" fill="#d2d2d2"/></svg>
<svg class="r" style="left:3.3px;top:287.4px" width="24" height="24" viewBox="0 0 24 24"><path d="M4 5 L9 3 L13 7 L8 11 Z" fill="#d2d2d2"/><rect x="8.4" y="9.4" width="9" height="9" fill="none" stroke="#d2d2d2" stroke-width="1.1"/><rect x="11.2" y="6.6" width="9" height="9" fill="none" stroke="#d2d2d2" stroke-width="1.1"/><path d="M3 3.4 L5 2.6" stroke="#d2d2d2" stroke-width="1.4"/><path d="M20.6 22.4 h3 v-3z" fill="#d2d2d2"/></svg>
<svg class="r" style="left:3.3px;top:310.3px" width="24" height="24" viewBox="0 0 24 24"><defs><linearGradient id="tg1" x1="0" x2="1"><stop offset="0" stop-color="#e6e6e6"/><stop offset="1" stop-color="#4a4a4a"/></linearGradient></defs><rect x="4.6" y="5.6" width="14.6" height="12.6" fill="url(#tg1)" stroke="#d2d2d2" stroke-width="1.2"/><path d="M20.6 22.4 h3 v-3z" fill="#d2d2d2"/></svg>
<svg class="r" style="left:3.3px;top:333.6px" width="24" height="24" viewBox="0 0 24 24"><path d="M4.2 19.8 L5 16.6 L13 8.6 L15.4 11 L7.4 19 Z" fill="none" stroke="#d2d2d2" stroke-width="1.2"/><path d="M12.2 7 L14 5.2 L15.4 6.6 L17.4 4.2 C18.8 2.8 21 5 19.6 6.6 L17.4 8.6 L18.8 10 L17 11.8 Z" fill="#d2d2d2"/></svg>
<svg class="r" style="left:3.3px;top:356.0px" width="24" height="24" viewBox="0 0 24 24"><path d="M3 18 C6 12 8 17 11 12 C13 9 16 10 19 13" fill="none" stroke="#d2d2d2" stroke-width="1.6"/><path d="M6 6 L14 14 M11 4.6 L8.6 15 M4.6 11 L15 9" stroke="#d2d2d2" stroke-width="1.1"/><circle cx="16.6" cy="8.4" r="1.8" fill="none" stroke="#d2d2d2" stroke-width="1.1"/><circle cx="4.4" cy="18.4" r="1.4" fill="#d2d2d2"/></svg>
<svg class="r" style="left:3.3px;top:378.5px" width="24" height="24" viewBox="0 0 24 24"><rect x="3.6" y="4.4" width="7.4" height="7.4" fill="#d2d2d2"/><circle cx="12.4" cy="12" r="4.2" fill="#8a8a8a" stroke="#d2d2d2" stroke-width="1.1"/><circle cx="16.6" cy="15.8" r="3.8" fill="#535353" stroke="#d2d2d2" stroke-width="1.2"/></svg>
<svg class="r" style="left:3.3px;top:400.8px" width="24" height="24" viewBox="0 0 24 24"><path d="M2.4 6.6 H9 M6.4 2.6 V9.4" stroke="#d2d2d2" stroke-width="1.1"/><path d="M8 9 H16.6 L19.6 12 V19 H8 Z" fill="#8a8a8a" stroke="#d2d2d2" stroke-width="1.2"/></svg>
<svg class="r" style="left:3.3px;top:423.7px" width="24" height="24" viewBox="0 0 24 24"><circle cx="9.6" cy="9.2" r="5.2" fill="none" stroke="#d2d2d2" stroke-width="1.5"/><path d="M13.4 13.2 L19 19" stroke="#d2d2d2" stroke-width="2"/><path d="M20.6 22.4 h3 v-3z" fill="#d2d2d2"/></svg>
<div class="r" style="left:3px;top:448.5px;width:27px;height:1px;background:#484848"></div>
<svg class="r" style="left:1px;top:453px" width="12" height="12" viewBox="0 0 12 12"><rect x="0.8" y="0.8" width="6.4" height="6.4" fill="#fff" stroke="#111" stroke-width="1"/><rect x="4" y="4" width="6.6" height="6.6" fill="none" stroke="#111" stroke-width="1.6"/><rect x="4" y="4" width="6.6" height="6.6" fill="none" stroke="#fff" stroke-width="0.5"/></svg>
<svg class="r" style="left:19px;top:453px" width="13" height="13" viewBox="0 0 13 13"><path d="M3.4 3.6 C7.4 3 9.4 5.4 9 9" fill="none" stroke="#d2d2d2" stroke-width="1.5"/><path d="M1 3.8 L4.4 1 L4.4 6.4 Z" fill="#d2d2d2"/><path d="M6.4 8.4 L11.6 8.4 L9 11.8 Z" fill="#d2d2d2"/></svg>
<div class="r" style="left:11px;top:480px;width:18px;height:18px;background:#111;border:1px solid #e4e4e4;box-sizing:border-box"></div>
<div class="r" style="left:15.5px;top:484.5px;width:9px;height:9px;background:#535353;border:1px solid #e4e4e4;box-sizing:border-box"></div>
<div class="r" style="left:17.5px;top:486.5px;width:5px;height:5px;background:#111;border:1px solid #bdbdbd;box-sizing:border-box"></div>
<div class="r" style="left:1px;top:471px;width:18px;height:18px;background:#ffffff;border:1px solid #2a2a2a;box-sizing:border-box"></div>
<div class="r" style="left:2.6px;top:504.4px;width:8px;height:8.6px;background:#ffffff"></div>
<div class="r" style="left:10.8px;top:504.4px;width:8px;height:8.6px;background:linear-gradient(90deg,#f0f0f0,#3c3c3c)"></div>
<svg class="r" style="left:19.4px;top:504.4px" width="8.4" height="8.6" viewBox="0 0 8.4 8.6"><rect width="8.4" height="8.6" fill="#fff"/><path d="M0.4 8.2 L8 0.4" stroke="#ff1a1a" stroke-width="1.8"/></svg>
<svg class="r" style="left:8px;top:520px" width="15" height="15" viewBox="0 0 15 15"><circle cx="6" cy="6" r="3.8" fill="none" stroke="#d2d2d2" stroke-width="1.1"/><rect x="6.4" y="6.4" width="5.6" height="5.6" fill="#d2d2d2"/></svg>
<svg class="r" style="left:5px;top:541px" width="21" height="18" viewBox="0 0 21 18"><rect x="1.6" y="5.6" width="12" height="9" fill="#8a8a8a" stroke="#d2d2d2" stroke-width="1.2"/><rect x="6.6" y="2.6" width="12" height="8.4" fill="#8a8a8a" stroke="#d2d2d2" stroke-width="1.2"/></svg>
<svg class="r" style="left:7px;top:577px" width="17" height="6" viewBox="0 0 17 6"><circle cx="2.6" cy="3" r="1.5" fill="#d2d2d2"/><circle cx="8.2" cy="3" r="1.5" fill="#d2d2d2"/><circle cx="13.8" cy="3" r="1.5" fill="#d2d2d2"/></svg>
<div class="r" style="left:36px;top:1024px;width:471px;height:16px;background:#535353;"></div>
<div class="r" style="left:507px;top:1024px;width:1375px;height:16px;background:#4a4a4a;"></div>
<div class="r" style="left:36px;top:1023.5px;width:1846px;height:0.8px;background:#404040;"></div>
<div class="r" style="left:39px;top:1026px;width:46px;height:14px;background:#454545;"></div>
<span class="t" style="left:42.3px;top:1027.7px;font-size:10.5px;color:#d8d8d8;transform:scaleX(0.8898);">64%</span>
<svg class="r" style="left:88px;top:1028px;" width="12" height="12" viewBox="0 0 12 12"><path d="M3.0 4.5 L6 7.5 L9.0 4.5" fill="none" stroke="#d8d8d8" stroke-width="1.5"/></svg>
<div class="r" style="left:101px;top:1026px;width:1px;height:14px;background:#484848;"></div>
<div class="r" style="left:107px;top:1026px;width:47px;height:14px;background:#454545;"></div>
<span class="t" style="left:110.7px;top:1027.7px;font-size:10.5px;color:#d8d8d8;transform:scaleX(0.9264);">0°</span>
<svg class="r" style="left:156.5px;top:1028px;" width="12" height="12" viewBox="0 0 12 12"><path d="M3.0 4.5 L6 7.5 L9.0 4.5" fill="none" stroke="#d8d8d8" stroke-width="1.5"/></svg>
<div class="r" style="left:170px;top:1026px;width:1px;height:14px;background:#484848;"></div>
<svg class="r" style="left:179px;top:1028px;" width="12" height="12" viewBox="0 0 12 12"><rect x="1" y="1.5" width="1.6" height="8" fill="#d4d4d4"/><path d="M9.5 1.5 L3.5 5.5 L9.5 9.5Z" fill="#d4d4d4"/></svg>
<svg class="r" style="left:196px;top:1028px;" width="10" height="12" viewBox="0 0 10 12"><path d="M7.5 1.5 L1.5 5.5 L7.5 9.5Z" fill="#d4d4d4"/></svg>
<div class="r" style="left:210.5px;top:1026px;width:37px;height:14px;background:#454545;"></div>
<span class="t" style="left:213.7px;top:1027.7px;font-size:10.5px;color:#d8d8d8;transform:scaleX(0.8391);">2</span>
<svg class="r" style="left:250.5px;top:1028px;" width="12" height="12" viewBox="0 0 12 12"><path d="M3.0 4.5 L6 7.5 L9.0 4.5" fill="none" stroke="#d8d8d8" stroke-width="1.5"/></svg>
<svg class="r" style="left:272px;top:1028px;" width="10" height="12" viewBox="0 0 10 12"><path d="M2.5 1.5 L8.5 5.5 L2.5 9.5Z" fill="#757575"/></svg>
<svg class="r" style="left:286px;top:1028px;" width="12" height="12" viewBox="0 0 12 12"><path d="M2 1.5 L8 5.5 L2 9.5Z" fill="#757575"/><rect x="9" y="1.5" width="1.4" height="8" fill="#757575"/></svg>
<div class="r" style="left:304px;top:1026px;width:1px;height:14px;background:#484848;"></div>
<span class="t" style="left:366.7px;top:1027.2px;font-size:10.5px;color:#d0d0d0;transform:scaleX(0.8744);">Direct Selection</span>
<svg class="r" style="left:497px;top:1027px;" width="10" height="13" viewBox="0 0 10 13"><path d="M2 1.5 L8 6 L2 10.5Z" fill="#e0e0e0"/></svg>
<div class="r" style="left:40px;top:1039px;width:323px;height:1px;background:#c8c8c8;"></div>
<svg class="r" style="left:511px;top:1024.5px;" width="12" height="12" viewBox="0 0 12 12"><path d="M7.4 3 L4.6 6 L7.4 9" fill="none" stroke="#b8b8b8" stroke-width="1.1"/></svg>
<svg class="r" style="left:1852.5px;top:1025.5px;" width="12" height="12" viewBox="0 0 12 12"><path d="M4.5 3.0 L7.5 6 L4.5 9.0" fill="none" stroke="#c8c8c8" stroke-width="1.2"/></svg>
<div class="r" style="left:1170px;top:1025.5px;width:30px;height:13px;background:#5c5c5c;border-radius:7px"></div>
<div class="r" style="left:1866px;top:1008px;width:16px;height:16px;background:#4a4a4a;"></div>
<svg class="r" style="left:1868px;top:1010px;" width="12" height="12" viewBox="0 0 12 12"><path d="M3.0 4.5 L6 7.5 L9.0 4.5" fill="none" stroke="#c8c8c8" stroke-width="1.2"/></svg>
<div class="r" style="left:1883px;top:57px;width:37px;height:983px;background:#535353;"></div>
<div class="r" style="left:1882px;top:57px;width:1px;height:983px;background:#3f3f3f;"></div>
<div class="r" style="left:1883px;top:57px;width:37px;height:10px;background:#424242;"></div>
<svg class="r" style="left:1905px;top:58px;" width="11" height="8" viewBox="0 0 11 8"><path d="M4 1.5 L1.5 4 L4 6.5 M7.5 1.5 L5 4 L7.5 6.5" stroke="#cfcfcf" stroke-width="1.1" fill="none"/></svg>
<svg class="r" style="left:1892px;top:70px;" width="19" height="5" viewBox="0 0 19 5"><g fill="#454545"><rect x="0" y="1" width="2.6" height="3"/><rect x="3.6" y="1" width="2.6" height="3"/><rect x="7.2" y="1" width="2.6" height="3"/><rect x="10.8" y="1" width="2.6" height="3"/><rect x="14.4" y="1" width="2.6" height="3"/></g></svg>
<svg class="r" style="left:1893px;top:82px;" width="18" height="16" viewBox="0 0 18 16"><g stroke="#cfcfcf" stroke-width="1.2" fill="#535353"><path d="M1 3 H16 M1 8 H16 M1 13 H16"/><circle cx="5.5" cy="3" r="1.9"/><circle cx="11.5" cy="8" r="1.9"/><circle cx="7" cy="13" r="1.9"/></g></svg>
<div class="r" style="left:1889px;top:105px;width:26px;height:16px;background:#3e3e3e;"></div>
<svg class="r" style="left:1892px;top:106px;" width="20" height="16" viewBox="0 0 20 16"><path d="M2 14 C1 8 5 2.5 11 2.5 C16 2.5 19 6 18.4 9.5 C18 12 15 11.5 13.6 12 C12.4 12.6 13 14 12 14.5 C10 15 9.5 11.5 7.5 11.5 C5.5 11.5 6 14 4.4 14.4 Z" fill="#e4e4e4"/><circle cx="9" cy="6" r="1.2" fill="#3e3e3e"/><circle cx="13" cy="5.6" r="1.2" fill="#3e3e3e"/><circle cx="15.6" cy="8.4" r="1.2" fill="#3e3e3e"/></svg>
<div class="r" style="left:1657px;top:66px;width:226px;height:70px;background:#3a3a3a;"></div>
<div class="r" style="left:1658px;top:68px;width:224px;height:26px;background:#424242;"></div>
<div class="r" style="left:1659px;top:69px;width:62.5px;height:25px;background:#4a4a4a;"></div>
<div class="r" style="left:1722px;top:69px;width:47px;height:25px;background:#535353;"></div>
<div class="r" style="left:1658px;top:94px;width:224px;height:40px;background:#535353;"></div>
<span class="t" style="left:1667.4px;top:74.4px;font-size:11px;color:#b4b4b4;transform:scaleX(0.8776);">Properties</span>
<svg class="r" style="left:1727px;top:76px;" width="6" height="10" viewBox="0 0 6 10"><path d="M1 3.6 L3 1.2 L5 3.6 M1 6 L3 8.4 L5 6" stroke="#b8b8b8" stroke-width="0.9" fill="none"/></svg>
<span class="t" style="left:1736.0px;top:74.4px;font-size:11px;color:#f4f4f4;transform:scaleX(0.7800);font-weight:bold;">Color</span>
<svg class="r" style="left:1843px;top:76px;" width="12" height="10" viewBox="0 0 12 10"><path d="M1.5 1.5 L5 5 L1.5 8.5 M6.5 1.5 L10 5 L6.5 8.5" stroke="#d0d0d0" stroke-width="1.2" fill="none"/></svg>
<div class="r" style="left:1859.5px;top:75.5px;width:1px;height:11px;background:#7a7a7a;"></div>
<svg class="r" style="left:1866px;top:76px;" width="11" height="10" viewBox="0 0 11 10"><path d="M0.5 1.5 H10 M0.5 4.8 H10 M0.5 8.1 H10" stroke="#cfcfcf" stroke-width="1.2"/></svg>
<div class="r" style="left:1664px;top:102.5px;width:12.3px;height:12.3px;background:#ffffff;"></div>
<svg class="r" style="left:1664px;top:102.5px;" width="13" height="13" viewBox="0 0 13 13"><path d="M0.3 11.8 L11.6 0.6" stroke="#ff1a1a" stroke-width="1.8"/></svg>
<div class="r" style="left:1676.3px;top:102.5px;width:12.2px;height:12.3px;background:#000000;"></div>
<div class="r" style="left:1688.5px;top:102.5px;width:12.2px;height:12.3px;background:#ffffff;"></div>
<div class="r" style="left:1664.5px;top:125.5px;width:201px;height:3.5px;background:#111;"></div>
<div class="r" style="left:1665px;top:126.2px;width:200px;height:2.8px;background:linear-gradient(90deg,#ffffff,#fff0f0 20%,#f4fff4 45%,#f0f4ff 70%,#ffe8f6 90%,#ffffff);"></div>
<div class="r" style="left:1884px;top:119.5px;width:32px;height:11px;background:#4a4a4a;border:1px solid #3a3a3a;box-sizing:border-box"></div>
<svg class="r" style="left:1886px;top:121px;" width="10" height="8" viewBox="0 0 10 8"><path d="M1.5 1.5 L4 4 L1.5 6.5 M5 1.5 L7.5 4 L5 6.5" stroke="#d8d8d8" stroke-width="1.1" fill="none"/></svg>
<svg class="r" style="left:1902px;top:120.5px;" width="10" height="9" viewBox="0 0 10 9"><path d="M1.5 1 L8 7.5 M8 1 L1.5 7.5" stroke="#e0e0e0" stroke-width="1.5"/></svg>
<div class="r" style="left:1879px;top:130.5px;width:37px;height:40px;background:#4f4f4f;border:1px solid #3a3a3a;box-sizing:border-box"></div>
<svg class="r" style="left:1888px;top:134px;" width="19" height="5" viewBox="0 0 19 5"><g fill="#3e3e3e"><rect x="0" y="1" width="2.6" height="3"/><rect x="3.6" y="1" width="2.6" height="3"/><rect x="7.2" y="1" width="2.6" height="3"/><rect x="10.8" y="1" width="2.6" height="3"/><rect x="14.4" y="1" width="2.6" height="3"/></g></svg>
<div class="r" style="left:1885px;top:143.5px;width:25px;height:20px;background:#383838;"></div>
<svg class="r" style="left:1888px;top:145px;" width="19" height="17" viewBox="0 0 19 17"><path d="M9.5 1 L17.5 5.2 L9.5 9.4 L1.5 5.2Z" fill="#e6e6e6"/><path d="M3.6 8.2 L1.5 9.4 L9.5 13.8 L17.5 9.4 L15.4 8.2 L9.5 11.4 Z" fill="#e6e6e6"/></svg>
<div class="r" style="left:1884px;top:170px;width:36px;height:1px;background:#464646;"></div>
<svg class="r" style="left:1892px;top:175px;" width="19" height="5" viewBox="0 0 19 5"><g fill="#454545"><rect x="0" y="1" width="2.6" height="3"/><rect x="3.6" y="1" width="2.6" height="3"/><rect x="7.2" y="1" width="2.6" height="3"/><rect x="10.8" y="1" width="2.6" height="3"/><rect x="14.4" y="1" width="2.6" height="3"/></g></svg>
<svg class="r" style="left:1891px;top:185px;" width="22" height="16" viewBox="0 0 22 16"><defs><linearGradient id="gd1" x1="0" x2="1"><stop offset="0" stop-color="#e8e8e8"/><stop offset="1" stop-color="#555"/></linearGradient></defs><rect x="1" y="1" width="18" height="12" fill="url(#gd1)" stroke="#cfcfcf" stroke-width="1.2"/></svg>
<div class="r" style="left:1884px;top:208px;width:36px;height:1px;background:#464646;"></div>
<svg class="r" style="left:1892px;top:213px;" width="19" height="5" viewBox="0 0 19 5"><g fill="#454545"><rect x="0" y="1" width="2.6" height="3"/><rect x="3.6" y="1" width="2.6" height="3"/><rect x="7.2" y="1" width="2.6" height="3"/><rect x="10.8" y="1" width="2.6" height="3"/><rect x="14.4" y="1" width="2.6" height="3"/></g></svg>
<svg class="r" style="left:1892px;top:223px;" width="20" height="20" viewBox="0 0 20 20"><rect x="1" y="1" width="8" height="8" fill="#cfcfcf"/><rect x="6" y="6" width="8" height="8" fill="#535353" stroke="#cfcfcf" stroke-width="1.2"/><rect x="8" y="8" width="8" height="8" fill="#8a8a8a" stroke="#cfcfcf" stroke-width="1"/></svg>
<div class="r" style="left:1884px;top:247px;width:36px;height:1px;background:#464646;"></div>
<svg class="r" style="left:1892px;top:252px;" width="19" height="5" viewBox="0 0 19 5"><g fill="#454545"><rect x="0" y="1" width="2.6" height="3"/><rect x="3.6" y="1" width="2.6" height="3"/><rect x="7.2" y="1" width="2.6" height="3"/><rect x="10.8" y="1" width="2.6" height="3"/><rect x="14.4" y="1" width="2.6" height="3"/></g></svg>
<svg class="r" style="left:1892px;top:261px;" width="20" height="20" viewBox="0 0 20 20"><g stroke="#cfcfcf" fill="none"><circle cx="10" cy="10" r="5.2" stroke-width="1.6"/><circle cx="10" cy="10" r="1.6" fill="#cfcfcf"/><path d="M10 1.2 V18.8 M1.2 10 H18.8 M3.8 3.8 L16.2 16.2 M16.2 3.8 L3.8 16.2" stroke-width="1.2"/></g></svg>
<svg class="r" style="left:1893px;top:288px;" width="18" height="18" viewBox="0 0 18 18"><circle cx="9" cy="9" r="8.2" fill="#dcdcdc"/><circle cx="9" cy="4.8" r="1.5" fill="#535353"/><path d="M6.6 7.6 H10.2 V12.6 H11.6 V14 H6.6 V12.6 H7.9 V9 H6.6Z" fill="#535353"/></svg>
<div class="r" style="left:1884px;top:311px;width:36px;height:1px;background:#464646;"></div>
<svg class="r" style="left:1892px;top:316px;" width="19" height="5" viewBox="0 0 19 5"><g fill="#454545"><rect x="0" y="1" width="2.6" height="3"/><rect x="3.6" y="1" width="2.6" height="3"/><rect x="7.2" y="1" width="2.6" height="3"/><rect x="10.8" y="1" width="2.6" height="3"/><rect x="14.4" y="1" width="2.6" height="3"/></g></svg>
<svg class="r" style="left:1891px;top:325px;" width="21" height="21" viewBox="0 0 21 21"><circle cx="10.5" cy="10.5" r="6" fill="#cfcfcf"/><circle cx="10.5" cy="10.5" r="8.6" fill="none" stroke="#cfcfcf" stroke-width="1.3" stroke-dasharray="1.4 2.1"/></svg>
<svg class="r" style="left:1892px;top:352px;" width="20" height="20" viewBox="0 0 20 20"><rect x="5.5" y="1.5" width="12" height="12" fill="none" stroke="#cfcfcf" stroke-width="1.4"/><rect x="1.5" y="9.5" width="8" height="8" fill="#535353" stroke="#cfcfcf" stroke-width="1.2"/><rect x="3.5" y="11.5" width="4" height="4" fill="none" stroke="#cfcfcf" stroke-width="0.9"/></svg>
<div class="r" style="left:1884px;top:376px;width:36px;height:1px;background:#464646;"></div>
<svg class="r" style="left:1892px;top:381px;" width="19" height="5" viewBox="0 0 19 5"><g fill="#454545"><rect x="0" y="1" width="2.6" height="3"/><rect x="3.6" y="1" width="2.6" height="3"/><rect x="7.2" y="1" width="2.6" height="3"/><rect x="10.8" y="1" width="2.6" height="3"/><rect x="14.4" y="1" width="2.6" height="3"/></g></svg>
<svg class="r" style="left:1891px;top:390px;" width="22" height="22" viewBox="0 0 22 22"><circle cx="8.5" cy="8.5" r="7" fill="#cfcfcf"/><circle cx="13" cy="13" r="6.6" fill="#8c8c8c" stroke="#cfcfcf" stroke-width="1.1"/></svg>
<div class="r" style="left:1884px;top:415px;width:36px;height:1px;background:#464646;"></div>
<svg class="r" style="left:1892px;top:420px;" width="19" height="5" viewBox="0 0 19 5"><g fill="#454545"><rect x="0" y="1" width="2.6" height="3"/><rect x="3.6" y="1" width="2.6" height="3"/><rect x="7.2" y="1" width="2.6" height="3"/><rect x="10.8" y="1" width="2.6" height="3"/><rect x="14.4" y="1" width="2.6" height="3"/></g></svg>
<svg class="r" style="left:1893px;top:428px;" width="18" height="20" viewBox="0 0 18 20"><path d="M1.5 0.5 V19" stroke="#cfcfcf" stroke-width="1.4"/><rect x="3.5" y="3" width="7" height="5.4" fill="#cfcfcf"/><rect x="3.5" y="10.6" width="12.5" height="5.4" fill="#cfcfcf"/></svg>
<svg class="r" style="left:1892px;top:456px;" width="20" height="20" viewBox="0 0 20 20"><rect x="4" y="4" width="12" height="12" fill="none" stroke="#cfcfcf" stroke-width="1.5"/><g fill="#cfcfcf"><rect x="2" y="2" width="4" height="4"/><rect x="14" y="2" width="4" height="4"/><rect x="2" y="14" width="4" height="4"/><rect x="14" y="14" width="4" height="4"/></g><path d="M10 1 V3.5 M10 16.5 V19 M1 10 H3.5 M16.5 10 H19" stroke="#cfcfcf" stroke-width="1.2"/></svg>
<div class="r" style="left:1884px;top:479px;width:36px;height:1px;background:#464646;"></div>
<svg class="r" style="left:1892px;top:484px;" width="19" height="5" viewBox="0 0 19 5"><g fill="#454545"><rect x="0" y="1" width="2.6" height="3"/><rect x="3.6" y="1" width="2.6" height="3"/><rect x="7.2" y="1" width="2.6" height="3"/><rect x="10.8" y="1" width="2.6" height="3"/><rect x="14.4" y="1" width="2.6" height="3"/></g></svg>
<svg class="r" style="left:1892px;top:492px;" width="20" height="20" viewBox="0 0 20 20"><path d="M9 4 H2 V18 H16 V11" fill="none" stroke="#cfcfcf" stroke-width="1.6"/><path d="M8 12 L17.5 2.5 M11 2 H18 V9" fill="none" stroke="#cfcfcf" stroke-width="1.6"/></svg>
<div class="r" style="left:1884px;top:520px;width:36px;height:1px;background:#464646;"></div>
<div class="r" style="left:1498px;top:128px;width:382px;height:883px;background:#3a3a3a;"></div>
<div class="r" style="left:1500px;top:131px;width:378px;height:27px;background:#424242;"></div>
<div class="r" style="left:1500px;top:131.5px;width:44px;height:26.5px;background:#535353;"></div>
<div class="r" style="left:1500px;top:158px;width:378px;height:848px;background:#535353;"></div>
<div class="r" style="left:1500px;top:1006px;width:378px;height:4px;background:#484848;"></div>
<svg class="r" style="left:1680px;top:1006px;" width="14" height="4" viewBox="0 0 14 4"><g fill="#3a3a3a"><rect x="0" y="0.5" width="1.6" height="3"/><rect x="2.6" y="0.5" width="1.6" height="3"/><rect x="5.2" y="0.5" width="1.6" height="3"/><rect x="7.8" y="0.5" width="1.6" height="3"/><rect x="10.4" y="0.5" width="1.6" height="3"/></g></svg>
<span class="t" style="left:1508.6px;top:138.4px;font-size:11px;color:#f4f4f4;transform:scaleX(0.7640);font-weight:bold;">Layers</span>
<svg class="r" style="left:1838px;top:140px;" width="12" height="10" viewBox="0 0 12 10"><path d="M1.5 1.5 L5 5 L1.5 8.5 M6.5 1.5 L10 5 L6.5 8.5" stroke="#d0d0d0" stroke-width="1.2" fill="none"/></svg>
<div class="r" style="left:1855.3px;top:139.5px;width:1px;height:11px;background:#7a7a7a;"></div>
<svg class="r" style="left:1862px;top:140px;" width="11" height="10" viewBox="0 0 11 10"><path d="M0.5 1.5 H10 M0.5 4.8 H10 M0.5 8.1 H10" stroke="#cfcfcf" stroke-width="1.2"/></svg>
<div class="r" style="left:1504.5px;top:163.5px;width:368.5px;height:821.5px;background:#535353;border:1px solid #4a4a4a;box-sizing:border-box"></div>
<div class="r" style="left:1505px;top:164.2px;width:367.5px;height:18.939999999999998px;background:#4f6780;"></div>
<div class="r" style="left:1505px;top:183.04px;width:367.5px;height:1px;background:#494949;"></div>
<svg class="r" style="left:1508.5px;top:169.07px;" width="13" height="10" viewBox="0 0 13 10"><path d="M0.8 5 C3 1.2 10 1.2 12.2 5 C10 8.8 3 8.8 0.8 5Z" fill="none" stroke="#d4d4d4" stroke-width="1.2"/><circle cx="6.5" cy="5" r="2.1" fill="#d4d4d4"/><circle cx="5.8" cy="4.3" r="0.7" fill="#535353"/></svg>
<div class="r" style="left:1545.7px;top:164.79999999999998px;width:3.4px;height:17.74px;background:#d8a066;"></div>
<svg class="r" style="left:1554px;top:168.07px;" width="12" height="12" viewBox="0 0 12 12"><path d="M2.8 4.4 L6 7.6 L9.2 4.4" fill="none" stroke="#e4e4e4" stroke-width="1.4"/></svg>
<svg class="r" style="left:1573.5px;top:165.00px" width="17" height="17.6" viewBox="-1 -1.2 17 17.4"><rect x="-0.5" y="-0.7" width="16" height="16.4" rx="1" fill="#ffffff" stroke="#1e1e1e" stroke-width="1.1"/><path d="M4.5 2 L5.5 6 M10.5 1.5 L9.5 6" stroke="#7d4456" stroke-width="1.4"/><path d="M3 14 C2.5 8 5 5.5 7.5 5.5 C10.5 5.5 12.5 8 12.5 14Z" fill="#a33fb8"/><path d="M5.5 14 C5.5 11 9.5 11 9.5 14Z" fill="#4a0a78"/><circle cx="7" cy="8.6" r="1.7" fill="#e090a8"/></svg>
<span class="t" style="left:1594.7px;top:167.8px;font-size:11px;color:#e2e2e2;transform:scaleX(0.8543);">one folder</span>
<div class="r" style="left:1838.3px;top:164.2px;width:1px;height:18.74px;background:#494949;"></div>
<svg class="r" style="left:1843.5px;top:169.07px;" width="10" height="10" viewBox="0 0 10 10"><circle cx="5" cy="5" r="3.5" fill="none" stroke="#d4d4d4" stroke-width="1.2"/></svg>
<div class="r" style="left:1505px;top:202.78px;width:367.5px;height:1px;background:#494949;"></div>
<svg class="r" style="left:1508.5px;top:188.81px;" width="13" height="10" viewBox="0 0 13 10"><path d="M0.8 5 C3 1.2 10 1.2 12.2 5 C10 8.8 3 8.8 0.8 5Z" fill="none" stroke="#d4d4d4" stroke-width="1.2"/><circle cx="6.5" cy="5" r="2.1" fill="#d4d4d4"/><circle cx="5.8" cy="4.3" r="0.7" fill="#535353"/></svg>
<div class="r" style="left:1545.7px;top:184.54px;width:3.4px;height:17.74px;background:#00a5a5;"></div>
<svg class="r" style="left:1574px;top:187.81px;" width="12" height="12" viewBox="0 0 12 12"><path d="M4.4 2.8 L7.6 6 L4.4 9.2" fill="none" stroke="#e0e0e0" stroke-width="1.4"/></svg>
<svg class="r" style="left:1595.2px;top:184.74px" width="17" height="17.6" viewBox="-1 -1.2 17 17.4"><rect x="-0.5" y="-0.7" width="16" height="16.4" rx="1" fill="#ffffff" stroke="#1e1e1e" stroke-width="1.1"/></svg>
<span class="t" style="left:1616.0px;top:187.5px;font-size:11px;color:#e2e2e2;transform:scaleX(0.8635);">Invisible saftey</span>
<div class="r" style="left:1838.3px;top:183.94px;width:1px;height:18.74px;background:#494949;"></div>
<svg class="r" style="left:1843.5px;top:188.81px;" width="10" height="10" viewBox="0 0 10 10"><circle cx="5" cy="5" r="3.5" fill="none" stroke="#d4d4d4" stroke-width="1.2"/></svg>
<div class="r" style="left:1505px;top:222.51999999999998px;width:367.5px;height:1px;background:#494949;"></div>
<svg class="r" style="left:1508.5px;top:208.54999999999998px;" width="13" height="10" viewBox="0 0 13 10"><path d="M0.8 5 C3 1.2 10 1.2 12.2 5 C10 8.8 3 8.8 0.8 5Z" fill="none" stroke="#d4d4d4" stroke-width="1.2"/><circle cx="6.5" cy="5" r="2.1" fill="#d4d4d4"/><circle cx="5.8" cy="4.3" r="0.7" fill="#535353"/></svg>
<div class="r" style="left:1545.7px;top:204.27999999999997px;width:3.4px;height:17.74px;background:#d8a066;"></div>
<svg class="r" style="left:1574px;top:207.54999999999998px;" width="12" height="12" viewBox="0 0 12 12"><path d="M4.4 2.8 L7.6 6 L4.4 9.2" fill="none" stroke="#e0e0e0" stroke-width="1.4"/></svg>
<svg class="r" style="left:1595.2px;top:204.48px" width="17" height="17.6" viewBox="-1 -1.2 17 17.4"><rect x="-0.5" y="-0.7" width="16" height="16.4" rx="1" fill="#ffffff" stroke="#1e1e1e" stroke-width="1.1"/><path d="M6 1.5 L10.5 1.5 L9.5 13 L7 13 C6 9 5.5 5 6 1.5Z" fill="#111"/><path d="M3.2 2 L4 12" stroke="#111" stroke-width="0.8"/></svg>
<span class="t" style="left:1616.0px;top:207.2px;font-size:11px;color:#e2e2e2;transform:scaleX(0.8441);">Layer 140</span>
<div class="r" style="left:1838.3px;top:203.67999999999998px;width:1px;height:18.74px;background:#494949;"></div>
<svg class="r" style="left:1843.5px;top:208.54999999999998px;" width="10" height="10" viewBox="0 0 10 10"><circle cx="5" cy="5" r="3.5" fill="none" stroke="#d4d4d4" stroke-width="1.2"/></svg>
<div class="r" style="left:1505px;top:242.26px;width:367.5px;height:1px;background:#494949;"></div>
<svg class="r" style="left:1508.5px;top:228.29px;" width="13" height="10" viewBox="0 0 13 10"><path d="M0.8 5 C3 1.2 10 1.2 12.2 5 C10 8.8 3 8.8 0.8 5Z" fill="none" stroke="#d4d4d4" stroke-width="1.2"/><circle cx="6.5" cy="5" r="2.1" fill="#d4d4d4"/><circle cx="5.8" cy="4.3" r="0.7" fill="#535353"/></svg>
<div class="r" style="left:1545.7px;top:224.01999999999998px;width:3.4px;height:17.74px;background:#00a5a5;"></div>
<svg class="r" style="left:1574px;top:227.29px;" width="12" height="12" viewBox="0 0 12 12"><path d="M4.4 2.8 L7.6 6 L4.4 9.2" fill="none" stroke="#e0e0e0" stroke-width="1.4"/></svg>
<svg class="r" style="left:1595.2px;top:224.22px" width="17" height="17.6" viewBox="-1 -1.2 17 17.4"><rect x="-0.5" y="-0.7" width="16" height="16.4" rx="1" fill="#ffffff" stroke="#1e1e1e" stroke-width="1.1"/><path d="M5 2 L6 6 M10 1.5 L9 6 M4 13 C3 8 5 6 7.5 6 C10 6 12 8 11.5 13 M6 9 C7 10 8 10 9 9 M5.5 11.5 C7 13 8.5 13 10 11.5 M3.5 10 L2.5 13 M12 10 L13 13" stroke="#222" stroke-width="0.9" fill="none"/></svg>
<span class="t" style="left:1616.0px;top:227.0px;font-size:11px;color:#e2e2e2;transform:scaleX(0.8915);">outline</span>
<div class="r" style="left:1838.3px;top:223.42px;width:1px;height:18.74px;background:#494949;"></div>
<svg class="r" style="left:1843.5px;top:228.29px;" width="10" height="10" viewBox="0 0 10 10"><circle cx="5" cy="5" r="3.5" fill="none" stroke="#d4d4d4" stroke-width="1.2"/></svg>
<div class="r" style="left:1505px;top:262.0px;width:367.5px;height:1px;background:#494949;"></div>
<svg class="r" style="left:1508.5px;top:248.02999999999997px;" width="13" height="10" viewBox="0 0 13 10"><path d="M0.8 5 C3 1.2 10 1.2 12.2 5 C10 8.8 3 8.8 0.8 5Z" fill="none" stroke="#d4d4d4" stroke-width="1.2"/><circle cx="6.5" cy="5" r="2.1" fill="#d4d4d4"/><circle cx="5.8" cy="4.3" r="0.7" fill="#535353"/></svg>
<div class="r" style="left:1545.7px;top:243.75999999999996px;width:3.4px;height:17.74px;background:#a033ff;"></div>
<svg class="r" style="left:1574px;top:247.02999999999997px;" width="12" height="12" viewBox="0 0 12 12"><path d="M4.4 2.8 L7.6 6 L4.4 9.2" fill="none" stroke="#e0e0e0" stroke-width="1.4"/></svg>
<svg class="r" style="left:1595.2px;top:243.96px" width="17" height="17.6" viewBox="-1 -1.2 17 17.4"><rect x="-0.5" y="-0.7" width="16" height="16.4" rx="1" fill="#ffffff" stroke="#1e1e1e" stroke-width="1.1"/><path d="M8 3 V3.8 M7 8.5 V12" stroke="#999" stroke-width="0.7"/></svg>
<span class="t" style="left:1616.0px;top:246.7px;font-size:11px;color:#e2e2e2;transform:scaleX(0.8657);">earring hl shd</span>
<div class="r" style="left:1838.3px;top:243.15999999999997px;width:1px;height:18.74px;background:#494949;"></div>
<svg class="r" style="left:1843.5px;top:248.02999999999997px;" width="10" height="10" viewBox="0 0 10 10"><circle cx="5" cy="5" r="3.5" fill="none" stroke="#d4d4d4" stroke-width="1.2"/></svg>
<div class="r" style="left:1505px;top:281.74px;width:367.5px;height:1px;background:#494949;"></div>
<svg class="r" style="left:1508.5px;top:267.77px;" width="13" height="10" viewBox="0 0 13 10"><path d="M0.8 5 C3 1.2 10 1.2 12.2 5 C10 8.8 3 8.8 0.8 5Z" fill="none" stroke="#d4d4d4" stroke-width="1.2"/><circle cx="6.5" cy="5" r="2.1" fill="#d4d4d4"/><circle cx="5.8" cy="4.3" r="0.7" fill="#535353"/></svg>
<div class="r" style="left:1545.7px;top:263.5px;width:3.4px;height:17.74px;background:#4dff4d;"></div>
<svg class="r" style="left:1574px;top:266.77px;" width="12" height="12" viewBox="0 0 12 12"><path d="M4.4 2.8 L7.6 6 L4.4 9.2" fill="none" stroke="#e0e0e0" stroke-width="1.4"/></svg>
<svg class="r" style="left:1595.2px;top:263.70px" width="17" height="17.6" viewBox="-1 -1.2 17 17.4"><rect x="-0.5" y="-0.7" width="16" height="16.4" rx="1" fill="#ffffff" stroke="#1e1e1e" stroke-width="1.1"/><path d="M2 8.5 L4 8 M10.5 6 L13.5 4.5" stroke="#b030c8" stroke-width="1.3"/></svg>
<span class="t" style="left:1616.0px;top:266.5px;font-size:11px;color:#e2e2e2;transform:scaleX(0.8702);">eyebrow highlight</span>
<div class="r" style="left:1838.3px;top:262.9px;width:1px;height:18.74px;background:#494949;"></div>
<svg class="r" style="left:1843.5px;top:267.77px;" width="10" height="10" viewBox="0 0 10 10"><circle cx="5" cy="5" r="3.5" fill="none" stroke="#d4d4d4" stroke-width="1.2"/></svg>
<div class="r" style="left:1505px;top:301.48px;width:367.5px;height:1px;background:#494949;"></div>
<svg class="r" style="left:1508.5px;top:287.51px;" width="13" height="10" viewBox="0 0 13 10"><path d="M0.8 5 C3 1.2 10 1.2 12.2 5 C10 8.8 3 8.8 0.8 5Z" fill="none" stroke="#d4d4d4" stroke-width="1.2"/><circle cx="6.5" cy="5" r="2.1" fill="#d4d4d4"/><circle cx="5.8" cy="4.3" r="0.7" fill="#535353"/></svg>
<div class="r" style="left:1545.7px;top:283.24px;width:3.4px;height:17.74px;background:#ff9a00;"></div>
<svg class="r" style="left:1574px;top:286.51px;" width="12" height="12" viewBox="0 0 12 12"><path d="M4.4 2.8 L7.6 6 L4.4 9.2" fill="none" stroke="#e0e0e0" stroke-width="1.4"/></svg>
<svg class="r" style="left:1595.2px;top:283.44px" width="17" height="17.6" viewBox="-1 -1.2 17 17.4"><rect x="-0.5" y="-0.7" width="16" height="16.4" rx="1" fill="#ffffff" stroke="#1e1e1e" stroke-width="1.1"/><path d="M3.5 7.8 C5 6.4 6.5 7.2 7.5 6.8 C9 6.4 10.5 7 11.5 7.4 C10 8.6 8 9.4 6 9 C5 8.8 4 8.4 3.5 7.8Z" fill="#4a3390"/></svg>
<span class="t" style="left:1616.0px;top:286.2px;font-size:11px;color:#e2e2e2;transform:scaleX(0.8785);">lips</span>
<div class="r" style="left:1838.3px;top:282.64px;width:1px;height:18.74px;background:#494949;"></div>
<svg class="r" style="left:1843.5px;top:287.51px;" width="10" height="10" viewBox="0 0 10 10"><circle cx="5" cy="5" r="3.5" fill="none" stroke="#d4d4d4" stroke-width="1.2"/></svg>
<div class="r" style="left:1505px;top:321.22px;width:367.5px;height:1px;background:#494949;"></div>
<svg class="r" style="left:1508.5px;top:307.25px;" width="13" height="10" viewBox="0 0 13 10"><path d="M0.8 5 C3 1.2 10 1.2 12.2 5 C10 8.8 3 8.8 0.8 5Z" fill="none" stroke="#d4d4d4" stroke-width="1.2"/><circle cx="6.5" cy="5" r="2.1" fill="#d4d4d4"/><circle cx="5.8" cy="4.3" r="0.7" fill="#535353"/></svg>
<div class="r" style="left:1545.7px;top:302.98px;width:3.4px;height:17.74px;background:#d8a066;"></div>
<svg class="r" style="left:1574px;top:306.25px;" width="12" height="12" viewBox="0 0 12 12"><path d="M4.4 2.8 L7.6 6 L4.4 9.2" fill="none" stroke="#e0e0e0" stroke-width="1.4"/></svg>
<svg class="r" style="left:1595.2px;top:303.18px" width="17" height="17.6" viewBox="-1 -1.2 17 17.4"><rect x="-0.5" y="-0.7" width="16" height="16.4" rx="1" fill="#ffffff" stroke="#1e1e1e" stroke-width="1.1"/><path d="M2 6.5 C5 2.5 10 2.5 14 6 C10 4.5 6 5 3.5 8.5 C3.5 10 4.5 11.5 6 12 C3.5 12 2 9.5 2 6.5Z" fill="#111"/></svg>
<span class="t" style="left:1616.0px;top:305.9px;font-size:11px;color:#e2e2e2;transform:scaleX(0.8713);">eye fix</span>
<div class="r" style="left:1838.3px;top:302.38px;width:1px;height:18.74px;background:#494949;"></div>
<svg class="r" style="left:1843.5px;top:307.25px;" width="10" height="10" viewBox="0 0 10 10"><circle cx="5" cy="5" r="3.5" fill="none" stroke="#d4d4d4" stroke-width="1.2"/></svg>
<div class="r" style="left:1505px;top:340.96000000000004px;width:367.5px;height:1px;background:#494949;"></div>
<svg class="r" style="left:1508.5px;top:326.99px;" width="13" height="10" viewBox="0 0 13 10"><path d="M0.8 5 C3 1.2 10 1.2 12.2 5 C10 8.8 3 8.8 0.8 5Z" fill="none" stroke="#d4d4d4" stroke-width="1.2"/><circle cx="6.5" cy="5" r="2.1" fill="#d4d4d4"/><circle cx="5.8" cy="4.3" r="0.7" fill="#535353"/></svg>
<div class="r" style="left:1545.7px;top:322.72px;width:3.4px;height:17.74px;background:#00a5a5;"></div>
<svg class="r" style="left:1574px;top:325.99px;" width="12" height="12" viewBox="0 0 12 12"><path d="M4.4 2.8 L7.6 6 L4.4 9.2" fill="none" stroke="#e0e0e0" stroke-width="1.4"/></svg>
<svg class="r" style="left:1595.2px;top:322.92px" width="17" height="17.6" viewBox="-1 -1.2 17 17.4"><rect x="-0.5" y="-0.7" width="16" height="16.4" rx="1" fill="#ffffff" stroke="#1e1e1e" stroke-width="1.1"/><path d="M4 2 C7 2 8.5 4 8 6.5 C10 7.5 11 10 10 13 L7.5 13 C8 10.5 6.5 9 5.5 8 C4.5 6.5 3 4.5 4 2Z" fill="#e34df0"/></svg>
<span class="t" style="left:1616.0px;top:325.7px;font-size:11px;color:#e2e2e2;transform:scaleX(0.8615);">Invisible saftey copy</span>
<div class="r" style="left:1838.3px;top:322.12px;width:1px;height:18.74px;background:#494949;"></div>
<svg class="r" style="left:1843.5px;top:326.99px;" width="10" height="10" viewBox="0 0 10 10"><circle cx="5" cy="5" r="3.5" fill="none" stroke="#d4d4d4" stroke-width="1.2"/></svg>
<div class="r" style="left:1505px;top:360.70000000000005px;width:367.5px;height:1px;background:#494949;"></div>
<svg class="r" style="left:1508.5px;top:346.73px;" width="13" height="10" viewBox="0 0 13 10"><path d="M0.8 5 C3 1.2 10 1.2 12.2 5 C10 8.8 3 8.8 0.8 5Z" fill="none" stroke="#d4d4d4" stroke-width="1.2"/><circle cx="6.5" cy="5" r="2.1" fill="#d4d4d4"/><circle cx="5.8" cy="4.3" r="0.7" fill="#535353"/></svg>
<div class="r" style="left:1545.7px;top:342.46000000000004px;width:3.4px;height:17.74px;background:#a53c00;"></div>
<svg class="r" style="left:1574px;top:345.73px;" width="12" height="12" viewBox="0 0 12 12"><path d="M4.4 2.8 L7.6 6 L4.4 9.2" fill="none" stroke="#e0e0e0" stroke-width="1.4"/></svg>
<svg class="r" style="left:1595.2px;top:342.66px" width="17" height="17.6" viewBox="-1 -1.2 17 17.4"><rect x="-0.5" y="-0.7" width="16" height="16.4" rx="1" fill="#ffffff" stroke="#1e1e1e" stroke-width="1.1"/><path d="M4 3 L5 6 M7 5 L8.5 9 M9.5 10 L10.5 12.5 M5 9.5 L6 11" stroke="#f3b7c6" stroke-width="0.8"/></svg>
<span class="t" style="left:1616.0px;top:345.4px;font-size:11px;color:#e2e2e2;transform:scaleX(0.8462);">skin shade</span>
<div class="r" style="left:1838.3px;top:341.86px;width:1px;height:18.74px;background:#494949;"></div>
<svg class="r" style="left:1843.5px;top:346.73px;" width="10" height="10" viewBox="0 0 10 10"><circle cx="5" cy="5" r="3.5" fill="none" stroke="#d4d4d4" stroke-width="1.2"/></svg>
<div class="r" style="left:1505px;top:380.44px;width:367.5px;height:1px;background:#494949;"></div>
<svg class="r" style="left:1508.5px;top:366.46999999999997px;" width="13" height="10" viewBox="0 0 13 10"><path d="M0.8 5 C3 1.2 10 1.2 12.2 5 C10 8.8 3 8.8 0.8 5Z" fill="none" stroke="#d4d4d4" stroke-width="1.2"/><circle cx="6.5" cy="5" r="2.1" fill="#d4d4d4"/><circle cx="5.8" cy="4.3" r="0.7" fill="#535353"/></svg>
<div class="r" style="left:1545.7px;top:362.2px;width:3.4px;height:17.74px;background:#a033ff;"></div>
<svg class="r" style="left:1574px;top:365.46999999999997px;" width="12" height="12" viewBox="0 0 12 12"><path d="M4.4 2.8 L7.6 6 L4.4 9.2" fill="none" stroke="#e0e0e0" stroke-width="1.4"/></svg>
<svg class="r" style="left:1595.2px;top:362.40px" width="17" height="17.6" viewBox="-1 -1.2 17 17.4"><rect x="-0.5" y="-0.7" width="16" height="16.4" rx="1" fill="#ffffff" stroke="#1e1e1e" stroke-width="1.1"/></svg>
<span class="t" style="left:1616.0px;top:365.2px;font-size:11px;color:#e2e2e2;transform:scaleX(0.8758);">skin highlight</span>
<div class="r" style="left:1838.3px;top:361.59999999999997px;width:1px;height:18.74px;background:#494949;"></div>
<svg class="r" style="left:1843.5px;top:366.46999999999997px;" width="10" height="10" viewBox="0 0 10 10"><circle cx="5" cy="5" r="3.5" fill="none" stroke="#d4d4d4" stroke-width="1.2"/></svg>
<div class="r" style="left:1505px;top:400.18px;width:367.5px;height:1px;background:#494949;"></div>
<svg class="r" style="left:1508.5px;top:386.21px;" width="13" height="10" viewBox="0 0 13 10"><path d="M0.8 5 C3 1.2 10 1.2 12.2 5 C10 8.8 3 8.8 0.8 5Z" fill="none" stroke="#d4d4d4" stroke-width="1.2"/><circle cx="6.5" cy="5" r="2.1" fill="#d4d4d4"/><circle cx="5.8" cy="4.3" r="0.7" fill="#535353"/></svg>
<div class="r" style="left:1545.7px;top:381.94px;width:3.4px;height:17.74px;background:#d8a066;"></div>
<svg class="r" style="left:1574px;top:385.21px;" width="12" height="12" viewBox="0 0 12 12"><path d="M4.4 2.8 L7.6 6 L4.4 9.2" fill="none" stroke="#e0e0e0" stroke-width="1.4"/></svg>
<svg class="r" style="left:1595.2px;top:382.14px" width="17" height="17.6" viewBox="-1 -1.2 17 17.4"><rect x="-0.5" y="-0.7" width="16" height="16.4" rx="1" fill="#ffffff" stroke="#1e1e1e" stroke-width="1.1"/><circle cx="8.5" cy="8" r="2.6" fill="#fbe6ec"/></svg>
<span class="t" style="left:1616.0px;top:384.9px;font-size:11px;color:#e2e2e2;transform:scaleX(0.8519);">cheek pink shadow</span>
<div class="r" style="left:1838.3px;top:381.34px;width:1px;height:18.74px;background:#494949;"></div>
<svg class="r" style="left:1843.5px;top:386.21px;" width="10" height="10" viewBox="0 0 10 10"><circle cx="5" cy="5" r="3.5" fill="#9a9a9a" stroke="#d4d4d4" stroke-width="1.2"/></svg>
<div class="r" style="left:1505px;top:419.92px;width:367.5px;height:1px;background:#494949;"></div>
<svg class="r" style="left:1508.5px;top:405.95px;" width="13" height="10" viewBox="0 0 13 10"><path d="M0.8 5 C3 1.2 10 1.2 12.2 5 C10 8.8 3 8.8 0.8 5Z" fill="none" stroke="#d4d4d4" stroke-width="1.2"/><circle cx="6.5" cy="5" r="2.1" fill="#d4d4d4"/><circle cx="5.8" cy="4.3" r="0.7" fill="#535353"/></svg>
<div class="r" style="left:1545.7px;top:401.68px;width:3.4px;height:17.74px;background:#a40000;"></div>
<svg class="r" style="left:1574px;top:404.95px;" width="12" height="12" viewBox="0 0 12 12"><path d="M4.4 2.8 L7.6 6 L4.4 9.2" fill="none" stroke="#e0e0e0" stroke-width="1.4"/></svg>
<svg class="r" style="left:1595.2px;top:401.88px" width="17" height="17.6" viewBox="-1 -1.2 17 17.4"><rect x="-0.5" y="-0.7" width="16" height="16.4" rx="1" fill="#ffffff" stroke="#1e1e1e" stroke-width="1.1"/><path d="M3.5 5 L5.5 12 M11.5 4 L10 12" stroke="#f6dfe5" stroke-width="0.8"/></svg>
<span class="t" style="left:1616.0px;top:404.6px;font-size:11px;color:#e2e2e2;transform:scaleX(0.8684);">horn highlights 1</span>
<div class="r" style="left:1838.3px;top:401.08px;width:1px;height:18.74px;background:#494949;"></div>
<svg class="r" style="left:1843.5px;top:405.95px;" width="10" height="10" viewBox="0 0 10 10"><circle cx="5" cy="5" r="3.5" fill="#9a9a9a" stroke="#d4d4d4" stroke-width="1.2"/></svg>
<div class="r" style="left:1505px;top:439.66px;width:367.5px;height:1px;background:#494949;"></div>
<svg class="r" style="left:1508.5px;top:425.69px;" width="13" height="10" viewBox="0 0 13 10"><path d="M0.8 5 C3 1.2 10 1.2 12.2 5 C10 8.8 3 8.8 0.8 5Z" fill="none" stroke="#d4d4d4" stroke-width="1.2"/><circle cx="6.5" cy="5" r="2.1" fill="#d4d4d4"/><circle cx="5.8" cy="4.3" r="0.7" fill="#535353"/></svg>
<div class="r" style="left:1545.7px;top:421.42px;width:3.4px;height:17.74px;background:#a40000;"></div>
<svg class="r" style="left:1574px;top:424.69px;" width="12" height="12" viewBox="0 0 12 12"><path d="M4.4 2.8 L7.6 6 L4.4 9.2" fill="none" stroke="#e0e0e0" stroke-width="1.4"/></svg>
<svg class="r" style="left:1595.2px;top:421.62px" width="17" height="17.6" viewBox="-1 -1.2 17 17.4"><rect x="-0.5" y="-0.7" width="16" height="16.4" rx="1" fill="#ffffff" stroke="#1e1e1e" stroke-width="1.1"/></svg>
<span class="t" style="left:1616.0px;top:424.4px;font-size:11px;color:#e2e2e2;transform:scaleX(0.8696);">horn highlights 2</span>
<div class="r" style="left:1838.3px;top:420.82px;width:1px;height:18.74px;background:#494949;"></div>
<svg class="r" style="left:1843.5px;top:425.69px;" width="10" height="10" viewBox="0 0 10 10"><circle cx="5" cy="5" r="3.5" fill="#9a9a9a" stroke="#d4d4d4" stroke-width="1.2"/></svg>
<div class="r" style="left:1505px;top:459.4px;width:367.5px;height:1px;background:#494949;"></div>
<svg class="r" style="left:1508.5px;top:445.42999999999995px;" width="13" height="10" viewBox="0 0 13 10"><path d="M0.8 5 C3 1.2 10 1.2 12.2 5 C10 8.8 3 8.8 0.8 5Z" fill="none" stroke="#d4d4d4" stroke-width="1.2"/><circle cx="6.5" cy="5" r="2.1" fill="#d4d4d4"/><circle cx="5.8" cy="4.3" r="0.7" fill="#535353"/></svg>
<div class="r" style="left:1545.7px;top:441.15999999999997px;width:3.4px;height:17.74px;background:#9f9fff;"></div>
<svg class="r" style="left:1574px;top:444.42999999999995px;" width="12" height="12" viewBox="0 0 12 12"><path d="M4.4 2.8 L7.6 6 L4.4 9.2" fill="none" stroke="#e0e0e0" stroke-width="1.4"/></svg>
<svg class="r" style="left:1595.2px;top:441.36px" width="17" height="17.6" viewBox="-1 -1.2 17 17.4"><rect x="-0.5" y="-0.7" width="16" height="16.4" rx="1" fill="#ffffff" stroke="#1e1e1e" stroke-width="1.1"/><path d="M4 8 L4.5 10 M10.5 7 L10 9.5 M7 11 L7.4 12" stroke="#eadde3" stroke-width="0.8"/></svg>
<span class="t" style="left:1616.0px;top:444.1px;font-size:11px;color:#e2e2e2;transform:scaleX(0.8520);">horn shade</span>
<div class="r" style="left:1838.3px;top:440.55999999999995px;width:1px;height:18.74px;background:#494949;"></div>
<svg class="r" style="left:1843.5px;top:445.42999999999995px;" width="10" height="10" viewBox="0 0 10 10"><circle cx="5" cy="5" r="3.5" fill="none" stroke="#d4d4d4" stroke-width="1.2"/></svg>
<div class="r" style="left:1505px;top:479.14px;width:367.5px;height:1px;background:#494949;"></div>
<svg class="r" style="left:1508.5px;top:465.16999999999996px;" width="13" height="10" viewBox="0 0 13 10"><path d="M0.8 5 C3 1.2 10 1.2 12.2 5 C10 8.8 3 8.8 0.8 5Z" fill="none" stroke="#d4d4d4" stroke-width="1.2"/><circle cx="6.5" cy="5" r="2.1" fill="#d4d4d4"/><circle cx="5.8" cy="4.3" r="0.7" fill="#535353"/></svg>
<div class="r" style="left:1545.7px;top:460.9px;width:3.4px;height:17.74px;background:#a40000;"></div>
<svg class="r" style="left:1574px;top:464.16999999999996px;" width="12" height="12" viewBox="0 0 12 12"><path d="M4.4 2.8 L7.6 6 L4.4 9.2" fill="none" stroke="#e0e0e0" stroke-width="1.4"/></svg>
<svg class="r" style="left:1595.2px;top:461.10px" width="17" height="17.6" viewBox="-1 -1.2 17 17.4"><rect x="-0.5" y="-0.7" width="16" height="16.4" rx="1" fill="#ffffff" stroke="#1e1e1e" stroke-width="1.1"/><path d="M3 5.5 C4.5 7.5 6.5 7.5 7.5 6 C8.5 7.5 10.5 7.5 12 5.5 M4.5 9.5 C6 11 9 11 10.5 9.5" stroke="#b79be0" stroke-width="1.1" fill="none"/></svg>
<span class="t" style="left:1616.0px;top:463.9px;font-size:11px;color:#e2e2e2;transform:scaleX(0.8553);">chest highlight shade</span>
<div class="r" style="left:1838.3px;top:460.29999999999995px;width:1px;height:18.74px;background:#494949;"></div>
<svg class="r" style="left:1843.5px;top:465.16999999999996px;" width="10" height="10" viewBox="0 0 10 10"><circle cx="5" cy="5" r="3.5" fill="none" stroke="#d4d4d4" stroke-width="1.2"/></svg>
<div class="r" style="left:1505px;top:498.88px;width:367.5px;height:1px;background:#494949;"></div>
<svg class="r" style="left:1508.5px;top:484.90999999999997px;" width="13" height="10" viewBox="0 0 13 10"><path d="M0.8 5 C3 1.2 10 1.2 12.2 5 C10 8.8 3 8.8 0.8 5Z" fill="none" stroke="#d4d4d4" stroke-width="1.2"/><circle cx="6.5" cy="5" r="2.1" fill="#d4d4d4"/><circle cx="5.8" cy="4.3" r="0.7" fill="#535353"/></svg>
<div class="r" style="left:1545.7px;top:480.64px;width:3.4px;height:17.74px;background:#4dffff;"></div>
<svg class="r" style="left:1574px;top:483.90999999999997px;" width="12" height="12" viewBox="0 0 12 12"><path d="M4.4 2.8 L7.6 6 L4.4 9.2" fill="none" stroke="#e0e0e0" stroke-width="1.4"/></svg>
<svg class="r" style="left:1595.2px;top:480.84px" width="17" height="17.6" viewBox="-1 -1.2 17 17.4"><rect x="-0.5" y="-0.7" width="16" height="16.4" rx="1" fill="#ffffff" stroke="#1e1e1e" stroke-width="1.1"/><path d="M2.5 8.5 L5 7.6 M9 7.4 C10.5 6.2 12 6.2 13 7" stroke="#f0a0b8" stroke-width="0.9" fill="none"/></svg>
<span class="t" style="left:1616.0px;top:483.6px;font-size:11px;color:#e2e2e2;transform:scaleX(0.8517);">eye shadow</span>
<div class="r" style="left:1838.3px;top:480.03999999999996px;width:1px;height:18.74px;background:#494949;"></div>
<svg class="r" style="left:1843.5px;top:484.90999999999997px;" width="10" height="10" viewBox="0 0 10 10"><circle cx="5" cy="5" r="3.5" fill="#9a9a9a" stroke="#d4d4d4" stroke-width="1.2"/></svg>
<div class="r" style="left:1505px;top:518.62px;width:367.5px;height:1px;background:#494949;"></div>
<svg class="r" style="left:1508.5px;top:504.65px;" width="13" height="10" viewBox="0 0 13 10"><path d="M0.8 5 C3 1.2 10 1.2 12.2 5 C10 8.8 3 8.8 0.8 5Z" fill="none" stroke="#d4d4d4" stroke-width="1.2"/><circle cx="6.5" cy="5" r="2.1" fill="#d4d4d4"/><circle cx="5.8" cy="4.3" r="0.7" fill="#535353"/></svg>
<div class="r" style="left:1545.7px;top:500.38px;width:3.4px;height:17.74px;background:#a53c00;"></div>
<svg class="r" style="left:1574px;top:503.65px;" width="12" height="12" viewBox="0 0 12 12"><path d="M4.4 2.8 L7.6 6 L4.4 9.2" fill="none" stroke="#e0e0e0" stroke-width="1.4"/></svg>
<svg class="r" style="left:1595.2px;top:500.58px" width="17" height="17.6" viewBox="-1 -1.2 17 17.4"><rect x="-0.5" y="-0.7" width="16" height="16.4" rx="1" fill="#ffffff" stroke="#1e1e1e" stroke-width="1.1"/></svg>
<span class="t" style="left:1616.0px;top:503.3px;font-size:11px;color:#e2e2e2;transform:scaleX(0.8581);">pink eye shd</span>
<div class="r" style="left:1838.3px;top:499.78px;width:1px;height:18.74px;background:#494949;"></div>
<svg class="r" style="left:1843.5px;top:504.65px;" width="10" height="10" viewBox="0 0 10 10"><circle cx="5" cy="5" r="3.5" fill="none" stroke="#d4d4d4" stroke-width="1.2"/></svg>
<div class="r" style="left:1505px;top:538.36px;width:367.5px;height:1px;background:#494949;"></div>
<svg class="r" style="left:1508.5px;top:524.39px;" width="13" height="10" viewBox="0 0 13 10"><path d="M0.8 5 C3 1.2 10 1.2 12.2 5 C10 8.8 3 8.8 0.8 5Z" fill="none" stroke="#d4d4d4" stroke-width="1.2"/><circle cx="6.5" cy="5" r="2.1" fill="#d4d4d4"/><circle cx="5.8" cy="4.3" r="0.7" fill="#535353"/></svg>
<div class="r" style="left:1545.7px;top:520.12px;width:3.4px;height:17.74px;background:#d8a066;"></div>
<svg class="r" style="left:1574px;top:523.39px;" width="12" height="12" viewBox="0 0 12 12"><path d="M4.4 2.8 L7.6 6 L4.4 9.2" fill="none" stroke="#e0e0e0" stroke-width="1.4"/></svg>
<svg class="r" style="left:1595.2px;top:520.32px" width="17" height="17.6" viewBox="-1 -1.2 17 17.4"><rect x="-0.5" y="-0.7" width="16" height="16.4" rx="1" fill="#ffffff" stroke="#1e1e1e" stroke-width="1.1"/></svg>
<span class="t" style="left:1616.0px;top:523.1px;font-size:11px;color:#e2e2e2;transform:scaleX(0.8510);">grey eye shd</span>
<div class="r" style="left:1838.3px;top:519.52px;width:1px;height:18.74px;background:#494949;"></div>
<svg class="r" style="left:1843.5px;top:524.39px;" width="10" height="10" viewBox="0 0 10 10"><circle cx="5" cy="5" r="3.5" fill="none" stroke="#d4d4d4" stroke-width="1.2"/></svg>
<div class="r" style="left:1505px;top:558.1px;width:367.5px;height:1px;background:#494949;"></div>
<svg class="r" style="left:1508.5px;top:544.13px;" width="13" height="10" viewBox="0 0 13 10"><path d="M0.8 5 C3 1.2 10 1.2 12.2 5 C10 8.8 3 8.8 0.8 5Z" fill="none" stroke="#d4d4d4" stroke-width="1.2"/><circle cx="6.5" cy="5" r="2.1" fill="#d4d4d4"/><circle cx="5.8" cy="4.3" r="0.7" fill="#535353"/></svg>
<div class="r" style="left:1545.7px;top:539.86px;width:3.4px;height:17.74px;background:#00a5a5;"></div>
<svg class="r" style="left:1574px;top:543.13px;" width="12" height="12" viewBox="0 0 12 12"><path d="M4.4 2.8 L7.6 6 L4.4 9.2" fill="none" stroke="#e0e0e0" stroke-width="1.4"/></svg>
<svg class="r" style="left:1595.2px;top:540.06px" width="17" height="17.6" viewBox="-1 -1.2 17 17.4"><rect x="-0.5" y="-0.7" width="16" height="16.4" rx="1" fill="#ffffff" stroke="#1e1e1e" stroke-width="1.1"/><path d="M5.5 2.5 C7.5 1.8 9.5 3 9.3 5.5 C9.2 7 8.6 7.6 8.6 8.4 C10.5 8.8 11.6 9.6 11.8 11 L3.6 11 C3.8 9.6 5 8.8 6.4 8.4 C5.6 7 5 4.5 5.5 2.5Z" fill="#f59ab0"/><path d="M4.6 10.4 C6 9.6 7 10 7.7 10.8 C8.4 10 9.6 9.6 10.8 10.4 C10.8 12.2 9 13.4 7.7 14.2 C6.4 13.4 4.6 12.2 4.6 10.4Z" fill="#4a0a8a"/></svg>
<span class="t" style="left:1616.0px;top:542.8px;font-size:11px;color:#e2e2e2;transform:scaleX(0.8849);">skin flat</span>
<div class="r" style="left:1838.3px;top:539.26px;width:1px;height:18.74px;background:#494949;"></div>
<svg class="r" style="left:1843.5px;top:544.13px;" width="10" height="10" viewBox="0 0 10 10"><circle cx="5" cy="5" r="3.5" fill="none" stroke="#d4d4d4" stroke-width="1.2"/></svg>
<div class="r" style="left:1505px;top:577.84px;width:367.5px;height:1px;background:#494949;"></div>
<svg class="r" style="left:1508.5px;top:563.87px;" width="13" height="10" viewBox="0 0 13 10"><path d="M0.8 5 C3 1.2 10 1.2 12.2 5 C10 8.8 3 8.8 0.8 5Z" fill="none" stroke="#d4d4d4" stroke-width="1.2"/><circle cx="6.5" cy="5" r="2.1" fill="#d4d4d4"/><circle cx="5.8" cy="4.3" r="0.7" fill="#535353"/></svg>
<div class="r" style="left:1545.7px;top:559.6px;width:3.4px;height:17.74px;background:#d8a066;"></div>
<svg class="r" style="left:1574px;top:562.87px;" width="12" height="12" viewBox="0 0 12 12"><path d="M4.4 2.8 L7.6 6 L4.4 9.2" fill="none" stroke="#e0e0e0" stroke-width="1.4"/></svg>
<svg class="r" style="left:1595.2px;top:559.80px" width="17" height="17.6" viewBox="-1 -1.2 17 17.4"><rect x="-0.5" y="-0.7" width="16" height="16.4" rx="1" fill="#ffffff" stroke="#1e1e1e" stroke-width="1.1"/><path d="M6 6 L6.4 7.4 M9 9 L9.4 10" stroke="#f5c6d2" stroke-width="0.7"/></svg>
<span class="t" style="left:1616.0px;top:562.6px;font-size:11px;color:#e2e2e2;transform:scaleX(0.8488);">under face neck shoulder shd</span>
<div class="r" style="left:1838.3px;top:559.0px;width:1px;height:18.74px;background:#494949;"></div>
<svg class="r" style="left:1843.5px;top:563.87px;" width="10" height="10" viewBox="0 0 10 10"><circle cx="5" cy="5" r="3.5" fill="#9a9a9a" stroke="#d4d4d4" stroke-width="1.2"/></svg>
<div class="r" style="left:1505px;top:597.58px;width:367.5px;height:1px;background:#494949;"></div>
<svg class="r" style="left:1508.5px;top:583.61px;" width="13" height="10" viewBox="0 0 13 10"><path d="M0.8 5 C3 1.2 10 1.2 12.2 5 C10 8.8 3 8.8 0.8 5Z" fill="none" stroke="#d4d4d4" stroke-width="1.2"/><circle cx="6.5" cy="5" r="2.1" fill="#d4d4d4"/><circle cx="5.8" cy="4.3" r="0.7" fill="#535353"/></svg>
<div class="r" style="left:1545.7px;top:579.34px;width:3.4px;height:17.74px;background:#00a5a5;"></div>
<svg class="r" style="left:1574px;top:582.61px;" width="12" height="12" viewBox="0 0 12 12"><path d="M4.4 2.8 L7.6 6 L4.4 9.2" fill="none" stroke="#e0e0e0" stroke-width="1.4"/></svg>
<svg class="r" style="left:1595.2px;top:579.54px" width="17" height="17.6" viewBox="-1 -1.2 17 17.4"><rect x="-0.5" y="-0.7" width="16" height="16.4" rx="1" fill="#ffffff" stroke="#1e1e1e" stroke-width="1.1"/><path d="M5 1.5 L5.8 4.5 M10 1 L9.4 4.5" stroke="#7d4456" stroke-width="1.2"/><path d="M2.2 13.6 C2 7 4.5 4 7.6 4 C11 4 13.2 7 12.8 13.6Z" fill="#e455f2"/><path d="M6.2 6 C7.6 5.6 8.8 6.4 8.6 8 C8.5 9 8.2 9.4 8.2 10 L9.8 11 L5.2 11 L6.6 10 C6 9 5.8 7.4 6.2 6Z" fill="#f59ab0"/><path d="M5.2 11.4 C6.2 10.8 7 11 7.5 11.6 C8 11 8.8 10.8 9.8 11.4 C9.8 12.6 8.4 13.4 7.5 14 C6.6 13.4 5.2 12.6 5.2 11.4Z" fill="#4a0a8a"/></svg>
<span class="t" style="left:1616.0px;top:582.3px;font-size:11px;color:#e2e2e2;transform:scaleX(0.8660);">flat color version 2</span>
<div class="r" style="left:1838.3px;top:578.74px;width:1px;height:18.74px;background:#494949;"></div>
<svg class="r" style="left:1843.5px;top:583.61px;" width="10" height="10" viewBox="0 0 10 10"><circle cx="5" cy="5" r="3.5" fill="none" stroke="#d4d4d4" stroke-width="1.2"/></svg>
<div class="r" style="left:1505px;top:617.32px;width:367.5px;height:1px;background:#494949;"></div>
<svg class="r" style="left:1508.5px;top:603.35px;" width="13" height="10" viewBox="0 0 13 10"><path d="M0.8 5 C3 1.2 10 1.2 12.2 5 C10 8.8 3 8.8 0.8 5Z" fill="none" stroke="#d4d4d4" stroke-width="1.2"/><circle cx="6.5" cy="5" r="2.1" fill="#d4d4d4"/><circle cx="5.8" cy="4.3" r="0.7" fill="#535353"/></svg>
<div class="r" style="left:1545.7px;top:599.08px;width:3.4px;height:17.74px;background:#00008c;"></div>
<svg class="r" style="left:1574px;top:602.35px;" width="12" height="12" viewBox="0 0 12 12"><path d="M4.4 2.8 L7.6 6 L4.4 9.2" fill="none" stroke="#e0e0e0" stroke-width="1.4"/></svg>
<svg class="r" style="left:1595.2px;top:599.28px" width="17" height="17.6" viewBox="-1 -1.2 17 17.4"><rect x="-0.5" y="-0.7" width="16" height="16.4" rx="1" fill="#ffffff" stroke="#1e1e1e" stroke-width="1.1"/><circle cx="5.2" cy="8" r="0.9" fill="#9a9a10"/><circle cx="10.4" cy="7.8" r="1" fill="#9a9a10"/></svg>
<span class="t" style="left:1616.0px;top:602.0px;font-size:11px;color:#e2e2e2;transform:scaleX(0.8392);">eyes</span>
<div class="r" style="left:1838.3px;top:598.48px;width:1px;height:18.74px;background:#494949;"></div>
<svg class="r" style="left:1843.5px;top:603.35px;" width="10" height="10" viewBox="0 0 10 10"><circle cx="5" cy="5" r="3.5" fill="none" stroke="#d4d4d4" stroke-width="1.2"/></svg>
<div class="r" style="left:1505px;top:637.0600000000001px;width:367.5px;height:1px;background:#494949;"></div>
<svg class="r" style="left:1508.5px;top:623.09px;" width="13" height="10" viewBox="0 0 13 10"><path d="M0.8 5 C3 1.2 10 1.2 12.2 5 C10 8.8 3 8.8 0.8 5Z" fill="none" stroke="#d4d4d4" stroke-width="1.2"/><circle cx="6.5" cy="5" r="2.1" fill="#d4d4d4"/><circle cx="5.8" cy="4.3" r="0.7" fill="#535353"/></svg>
<div class="r" style="left:1545.7px;top:618.82px;width:3.4px;height:17.74px;background:#d8a066;"></div>
<svg class="r" style="left:1574px;top:622.09px;" width="12" height="12" viewBox="0 0 12 12"><path d="M4.4 2.8 L7.6 6 L4.4 9.2" fill="none" stroke="#e0e0e0" stroke-width="1.4"/></svg>
<svg class="r" style="left:1595.2px;top:619.02px" width="17" height="17.6" viewBox="-1 -1.2 17 17.4"><rect x="-0.5" y="-0.7" width="16" height="16.4" rx="1" fill="#ffffff" stroke="#1e1e1e" stroke-width="1.1"/><path d="M2.5 8.4 L5.4 7.6 M9 9.6 C10.4 9 11.8 9 12.8 9.6" stroke="#f0a0b8" stroke-width="1" fill="none"/></svg>
<span class="t" style="left:1616.0px;top:621.8px;font-size:11px;color:#e2e2e2;transform:scaleX(0.9636);">fix</span>
<div class="r" style="left:1838.3px;top:618.22px;width:1px;height:18.74px;background:#494949;"></div>
<svg class="r" style="left:1843.5px;top:623.09px;" width="10" height="10" viewBox="0 0 10 10"><circle cx="5" cy="5" r="3.5" fill="none" stroke="#d4d4d4" stroke-width="1.2"/></svg>
<div class="r" style="left:1505px;top:656.8000000000001px;width:367.5px;height:1px;background:#494949;"></div>
<svg class="r" style="left:1508.5px;top:642.83px;" width="13" height="10" viewBox="0 0 13 10"><path d="M0.8 5 C3 1.2 10 1.2 12.2 5 C10 8.8 3 8.8 0.8 5Z" fill="none" stroke="#d4d4d4" stroke-width="1.2"/><circle cx="6.5" cy="5" r="2.1" fill="#d4d4d4"/><circle cx="5.8" cy="4.3" r="0.7" fill="#535353"/></svg>
<div class="r" style="left:1545.7px;top:638.5600000000001px;width:3.4px;height:17.74px;background:#4dff4d;"></div>
<svg class="r" style="left:1574px;top:641.83px;" width="12" height="12" viewBox="0 0 12 12"><path d="M4.4 2.8 L7.6 6 L4.4 9.2" fill="none" stroke="#e0e0e0" stroke-width="1.4"/></svg>
<svg class="r" style="left:1595.2px;top:638.76px" width="17" height="17.6" viewBox="-1 -1.2 17 17.4"><rect x="-0.5" y="-0.7" width="16" height="16.4" rx="1" fill="#ffffff" stroke="#1e1e1e" stroke-width="1.1"/><path d="M5 1.5 L6 5 M10 1 L9.4 5" stroke="#111" stroke-width="1.3"/><path d="M2.6 13.8 C2 7.5 4.5 4.2 7.6 4.2 C11 4.2 13 7.5 12.6 13.8Z" fill="#111"/></svg>
<span class="t" style="left:1616.0px;top:641.5px;font-size:11px;color:#e2e2e2;transform:scaleX(0.8715);">full black</span>
<div class="r" style="left:1838.3px;top:637.96px;width:1px;height:18.74px;background:#494949;"></div>
<svg class="r" style="left:1843.5px;top:642.83px;" width="10" height="10" viewBox="0 0 10 10"><circle cx="5" cy="5" r="3.5" fill="none" stroke="#d4d4d4" stroke-width="1.2"/></svg>
<div class="r" style="left:1505px;top:676.54px;width:367.5px;height:1px;background:#494949;"></div>
<svg class="r" style="left:1530px;top:661.5699999999999px;" width="10" height="12" viewBox="0 0 10 12"><path d="M2.6 5.4 V3.6 C2.6 0.6 7.2 0.6 7.2 3.6 V5.4" fill="none" stroke="#d4d4d4" stroke-width="1.3"/><rect x="1" y="5.2" width="7.8" height="5.8" rx="0.8" fill="#d4d4d4"/><rect x="4.3" y="7" width="1.2" height="2.2" fill="#535353"/></svg>
<div class="r" style="left:1545.7px;top:658.3px;width:3.4px;height:17.74px;background:#00a5a5;"></div>
<svg class="r" style="left:1552.5px;top:661.5699999999999px;" width="12" height="12" viewBox="0 0 12 12"><path d="M4.4 2.8 L7.6 6 L4.4 9.2" fill="none" stroke="#e0e0e0" stroke-width="1.4"/></svg>
<svg class="r" style="left:1573.5px;top:658.50px" width="17" height="17.6" viewBox="-1 -1.2 17 17.4"><rect x="-0.5" y="-0.7" width="16" height="16.4" rx="1" fill="#ffffff" stroke="#1e1e1e" stroke-width="1.1"/><path d="M5 1.5 L5.8 4.5 M10 1 L9.4 4.5" stroke="#7d4456" stroke-width="1.2"/><path d="M2.2 13.6 C2 7 4.5 4 7.6 4 C11 4 13.2 7 12.8 13.6Z" fill="#e455f2"/><path d="M6.2 6 C7.6 5.6 8.8 6.4 8.6 8 C8.5 9 8.2 9.4 8.2 10 L9.8 11 L5.2 11 L6.6 10 C6 9 5.8 7.4 6.2 6Z" fill="#f59ab0"/><path d="M5.2 11.4 C6.2 10.8 7 11 7.5 11.6 C8 11 8.8 10.8 9.8 11.4 C9.8 12.6 8.4 13.4 7.5 14 C6.6 13.4 5.2 12.6 5.2 11.4Z" fill="#6a20a8"/></svg>
<span class="t" style="left:1594.6px;top:661.3px;font-size:11px;color:#e2e2e2;transform:scaleX(0.8732);">flat color</span>
<div class="r" style="left:1838.3px;top:657.6999999999999px;width:1px;height:18.74px;background:#494949;"></div>
<svg class="r" style="left:1843.5px;top:662.5699999999999px;" width="10" height="10" viewBox="0 0 10 10"><circle cx="5" cy="5" r="3.5" fill="none" stroke="#d4d4d4" stroke-width="1.2"/></svg>
<div class="r" style="left:1505px;top:696.2800000000001px;width:367.5px;height:1px;background:#494949;"></div>
<svg class="r" style="left:1530px;top:681.3100000000001px;" width="10" height="12" viewBox="0 0 10 12"><path d="M2.6 5.4 V3.6 C2.6 0.6 7.2 0.6 7.2 3.6 V5.4" fill="none" stroke="#d4d4d4" stroke-width="1.3"/><rect x="1" y="5.2" width="7.8" height="5.8" rx="0.8" fill="#d4d4d4"/><rect x="4.3" y="7" width="1.2" height="2.2" fill="#535353"/></svg>
<div class="r" style="left:1545.7px;top:678.0400000000001px;width:3.4px;height:17.74px;background:#4d7fff;"></div>
<svg class="r" style="left:1552.5px;top:681.3100000000001px;" width="12" height="12" viewBox="0 0 12 12"><path d="M4.4 2.8 L7.6 6 L4.4 9.2" fill="none" stroke="#e0e0e0" stroke-width="1.4"/></svg>
<svg class="r" style="left:1573.5px;top:678.24px" width="17" height="17.6" viewBox="-1 -1.2 17 17.4"><rect x="-0.5" y="-0.7" width="16" height="16.4" rx="1" fill="#ffffff" stroke="#1e1e1e" stroke-width="1.1"/><rect x="0" y="0" width="15" height="15" fill="#d4d4d4"/><path d="M5 3 C7 2 9.5 3.5 9 6.5 C8.8 8 10 9 10.5 11 M6 5 L7 9 L5.5 12 M8 4 L8.5 7 M4.5 8.5 C6 9.5 7 11 7.5 13" stroke="#8a8a8a" stroke-width="0.7" fill="none"/><path d="M11 0 L15 0 L15 3Z" fill="#d08a50"/></svg>
<span class="t" style="left:1594.6px;top:681.0px;font-size:11px;color:#e2e2e2;transform:scaleX(0.8542);font-style:italic;">Layer 1 copy</span>
<div class="r" style="left:1838.3px;top:677.44px;width:1px;height:18.74px;background:#494949;"></div>
<svg class="r" style="left:1843.5px;top:682.3100000000001px;" width="10" height="10" viewBox="0 0 10 10"><circle cx="5" cy="5" r="3.5" fill="none" stroke="#d4d4d4" stroke-width="1.2"/></svg>
<div class="r" style="left:1505px;top:716.0199999999999px;width:367.5px;height:1px;background:#494949;"></div>
<svg class="r" style="left:1530px;top:701.0499999999998px;" width="10" height="12" viewBox="0 0 10 12"><path d="M2.6 5.4 V3.6 C2.6 0.6 7.2 0.6 7.2 3.6 V5.4" fill="none" stroke="#d4d4d4" stroke-width="1.3"/><rect x="1" y="5.2" width="7.8" height="5.8" rx="0.8" fill="#d4d4d4"/><rect x="4.3" y="7" width="1.2" height="2.2" fill="#535353"/></svg>
<div class="r" style="left:1545.7px;top:697.7799999999999px;width:3.4px;height:17.74px;background:#4d7fff;"></div>
<svg class="r" style="left:1552.5px;top:701.0499999999998px;" width="12" height="12" viewBox="0 0 12 12"><path d="M4.4 2.8 L7.6 6 L4.4 9.2" fill="none" stroke="#e0e0e0" stroke-width="1.4"/></svg>
<svg class="r" style="left:1573.5px;top:697.98px" width="17" height="17.6" viewBox="-1 -1.2 17 17.4"><rect x="-0.5" y="-0.7" width="16" height="16.4" rx="1" fill="#ffffff" stroke="#1e1e1e" stroke-width="1.1"/><rect x="0" y="0" width="15" height="15" fill="#d4d4d4"/><path d="M5 3 C7 2 9.5 3.5 9 6.5 C8.8 8 10 9 10.5 11 M6 5 L7 9 L5.5 12 M8 4 L8.5 7 M4.5 8.5 C6 9.5 7 11 7.5 13" stroke="#8a8a8a" stroke-width="0.7" fill="none"/><path d="M11 0 L15 0 L15 3Z" fill="#d08a50"/></svg>
<span class="t" style="left:1594.6px;top:700.7px;font-size:11px;color:#e2e2e2;transform:scaleX(0.8367);font-style:italic;">Layer 1</span>
<div class="r" style="left:1838.3px;top:697.1799999999998px;width:1px;height:18.74px;background:#494949;"></div>
<svg class="r" style="left:1843.5px;top:702.0499999999998px;" width="10" height="10" viewBox="0 0 10 10"><circle cx="5" cy="5" r="3.5" fill="none" stroke="#d4d4d4" stroke-width="1.2"/></svg>
<svg class="r" style="left:1866px;top:164.5px;" width="6.5" height="6.5" viewBox="0 0 6.5 6.5"><path d="M0 0 H6.5 V6.5Z" fill="#e8e8e8"/></svg>
<div class="r" style="left:1524.5px;top:164px;width:1px;height:552.9199999999998px;background:#4c4c4c;"></div>
<div class="r" style="left:1544.5px;top:164px;width:1px;height:552.9199999999998px;background:#4c4c4c;"></div>
<span class="t" style="left:1504.7px;top:987.4px;font-size:11px;color:#d0d0d0;transform:scaleX(0.8296);">4 Layers</span>
<svg class="r" style="left:1717px;top:986px;" width="16" height="16" viewBox="0 0 16 16"><path d="M7 3.5 H2 V14 H12.5 V9" fill="none" stroke="#d4d4d4" stroke-width="1.4"/><path d="M6.5 9.5 L13.5 2.5 M9 2 H14 V7" fill="none" stroke="#d4d4d4" stroke-width="1.4"/></svg>
<svg class="r" style="left:1742px;top:987px;" width="14" height="14" viewBox="0 0 14 14"><circle cx="5.4" cy="5.4" r="3.8" fill="none" stroke="#6e6e6e" stroke-width="1.3"/><path d="M8.2 8.2 L12.4 12.4" stroke="#6e6e6e" stroke-width="1.5"/></svg>
<svg class="r" style="left:1766px;top:988px;" width="12" height="12" viewBox="0 0 12 12"><rect x="1" y="1" width="7" height="7" fill="none" stroke="#6e6e6e" stroke-width="1.1"/><rect x="3.6" y="3.6" width="7" height="7" fill="#6e6e6e"/></svg>
<svg class="r" style="left:1788px;top:986px;" width="18" height="14" viewBox="0 0 18 14"><path d="M1.5 1.5 V4.5 Q1.5 6 3 6 H5.5 M4 4 L5.8 6 L4 8" fill="none" stroke="#d4d4d4" stroke-width="1.3"/><rect x="7.5" y="3" width="8.5" height="8.5" fill="none" stroke="#d4d4d4" stroke-width="1.3"/><path d="M11.75 5 V9.5 M9.5 7.25 H14" stroke="#d4d4d4" stroke-width="1.3"/></svg>
<svg class="r" style="left:1817px;top:988px;" width="12" height="12" viewBox="0 0 12 12"><rect x="1" y="1" width="9.6" height="9.6" fill="none" stroke="#d4d4d4" stroke-width="1.3"/><path d="M5.8 3.4 V8.2 M3.4 5.8 H8.2" stroke="#d4d4d4" stroke-width="1.3"/></svg>
<svg class="r" style="left:1840px;top:986px;" width="13" height="15" viewBox="0 0 13 15"><path d="M1 3.4 H11.4 M4.2 3 V1.4 H8.2 V3" fill="none" stroke="#d4d4d4" stroke-width="1.3"/><path d="M2.2 4.6 H10.2 L9.6 13.4 H2.8Z" fill="#d4d4d4"/><path d="M4.6 6 V12 M6.2 6 V12 M7.8 6 V12" stroke="#535353" stroke-width="0.7"/></svg>
</body></html>
